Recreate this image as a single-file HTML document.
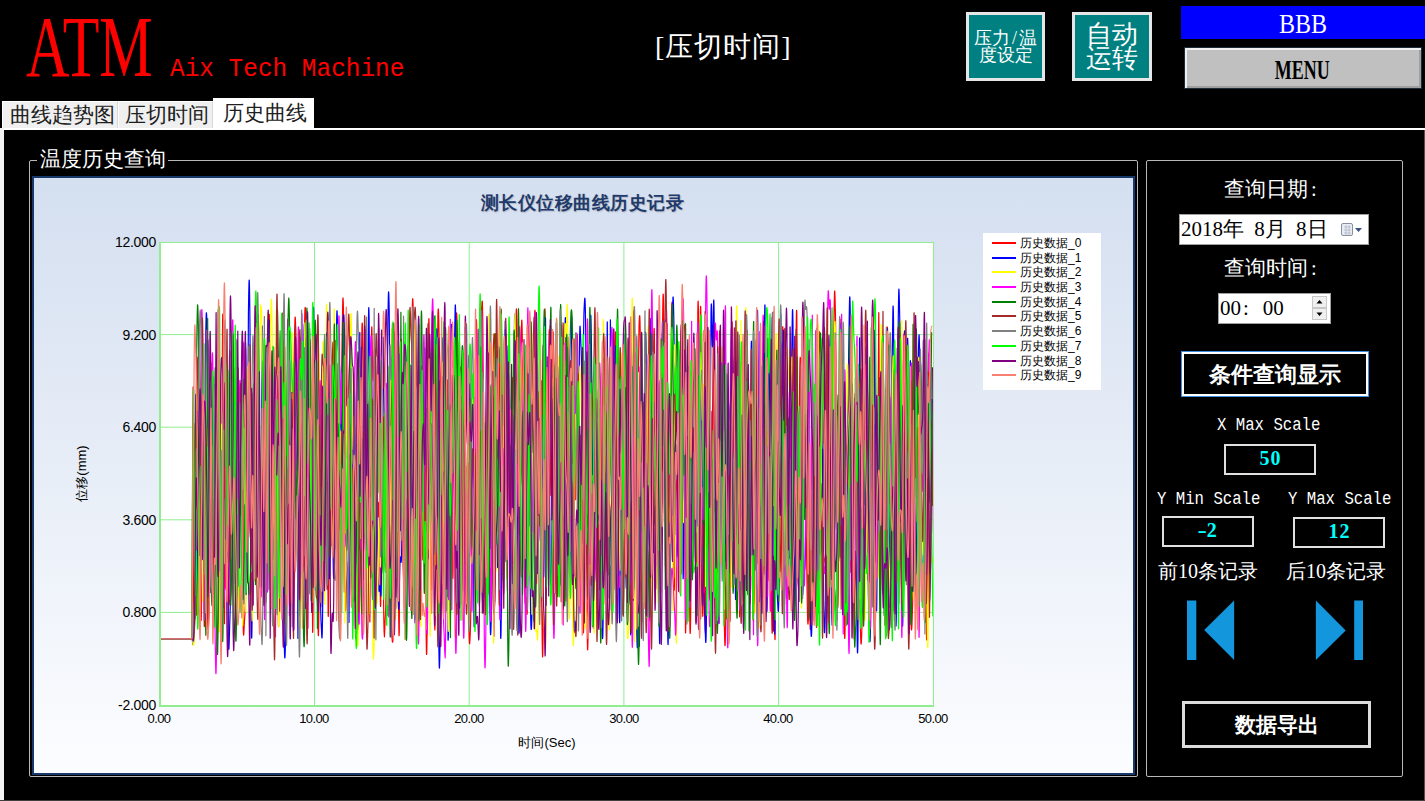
<!DOCTYPE html>
<html><head><meta charset="utf-8">
<style>
*{margin:0;padding:0;box-sizing:border-box}
html,body{width:1425px;height:801px;overflow:hidden;background:#000}
body{position:relative;font-family:"Liberation Serif",serif;color:#fff}
.a{position:absolute;white-space:nowrap;line-height:1}
.tab{position:absolute;background:#f0f0f0;border-top:1px solid #fff;border-left:1px solid #fff;border-right:1px solid #d8d8d8;color:#202020;font-size:21px;line-height:26px}
.gb{position:absolute;border:1px solid #b8b8b8;border-radius:2px}
.tbtn{position:absolute;background:#008080;border:3px solid #e6e6e6;color:#fff;text-align:center}
.ylab,.xlab{position:absolute;font-family:"Liberation Sans",sans-serif;font-size:13px;color:#000;line-height:1;white-space:nowrap}
.ylab{text-align:right;width:60px;font-size:14px!important;letter-spacing:-0.3px}
.xlab{text-align:center;width:60px;letter-spacing:-0.6px}
.lg{position:absolute;left:992px;width:24px;height:2px}
.lt{position:absolute;left:1020px;font-family:"Liberation Sans",sans-serif;font-size:12px;color:#000;line-height:1;white-space:nowrap}
.mono{font-family:"Liberation Mono",monospace}
.vbox{position:absolute;border:2px solid #e0e0e0;color:#00ffff;font-weight:bold;text-align:center;font-size:20px;font-family:"Liberation Serif",serif}
</style></head><body>

<!-- header -->
<div class="a" id="atm" style="left:26px;top:3px;font-size:87px;color:#f00;transform-origin:0 0;transform:scaleX(0.69)">ATM</div>
<div class="a mono" id="aix" style="left:170px;top:56px;font-size:26.4px;color:#f00;transform-origin:0 0;transform:scaleX(0.925)">Aix Tech Machine</div>
<div class="a" id="ttl" style="left:655px;top:33px;font-size:28px;letter-spacing:1px;color:#fff">[压切时间]</div>

<div class="tbtn" style="left:966px;top:12px;width:79px;height:69px;font-size:18px;line-height:17px;padding-top:15px;padding-left:0px">压力<span style="padding:0 2px 0 2px">/</span>温<br>度设定</div>
<div class="tbtn" style="left:1072px;top:12px;width:80px;height:69px;font-size:26px;line-height:24px;padding-top:8px">自动<br>运转</div>

<div class="a" style="left:1181px;top:6px;width:244px;height:33px;background:#0000ff"></div>
<div class="a" id="bbb" style="left:1181px;top:11px;width:244px;text-align:center;font-size:27px;color:#fff"><span style="display:inline-block;transform:scaleX(0.89)">BBB</span></div>
<div class="a" style="left:1184px;top:47px;width:238px;height:42px;background:#c0c0c0;border:1px solid #1c2c38;box-shadow:inset 2px 2px 0 #f0f0f0,inset -2px -2px 0 #a0a0a0"></div>
<div class="a" id="menu" style="left:1183px;top:57px;width:238px;text-align:center;font-size:27px;font-weight:bold;color:#000"><span style="display:inline-block;transform:scaleX(0.665)">MENU</span></div>

<!-- tabs -->
<div class="a" style="left:0;top:128px;width:1425px;height:2px;background:#fff"></div>
<div class="a" style="left:0;top:128px;width:4px;height:673px;background:#f4f4f4"></div>
<div class="a" style="left:1424px;top:130px;width:1px;height:671px;background:#505050"></div>
<div class="a" style="left:0;top:800px;width:1425px;height:1px;background:#404040"></div>
<div class="tab" style="left:2px;top:101px;width:116px;height:27px;padding-left:7px">曲线趋势图</div>
<div class="tab" style="left:118px;top:101px;width:95px;height:27px;padding-left:6px">压切时间</div>
<div class="tab" style="left:213px;top:98px;width:101px;height:32px;background:#fff;border-right:1px solid #fff;padding-left:9px;line-height:28px">历史曲线</div>

<!-- left group box -->
<div class="gb" style="left:29px;top:160px;width:1109px;height:617px"></div>
<div class="a" style="left:37px;top:148px;width:131px;height:24px;background:#000"></div>
<div class="a" id="gbt" style="left:40px;top:149px;font-size:21px;color:#fff">温度历史查询</div>

<!-- chart -->
<div class="a" style="left:32px;top:176px;width:1103px;height:599px;border:2px solid #17386b;background:linear-gradient(#d4dff0,#fcfdff)"></div>
<div class="a" id="ctitle" style="left:33px;top:194px;width:1099px;text-align:center;font-size:18px;letter-spacing:0.5px;font-weight:bold;color:#1f3b6b;font-family:'Liberation Sans',sans-serif;text-shadow:1px 1px 1px #b8bcc8">测长仪位移曲线历史记录</div>
<svg class="a" style="left:0;top:0" width="1425" height="801">
<rect x="159.5" y="242.5" width="773.5" height="463" fill="#fff"/>
<g stroke="#90ee90" stroke-width="1" fill="none">
<path d="M314.5 242V705M469.2 242V705M623.9 242V705M778.6 242V705M159.5 334.6H933M159.5 427.2H933M159.5 519.8H933M159.5 612.4H933"/>
</g>
<g fill="none" stroke-width="1.2" stroke-linejoin="round">
<path d="M159.5 638.9L192.0 638.9C192.3 628.9 192.9 632.0 193.5 589.0C194.1 545.9 194.4 418.4 195.1 423.6C195.7 428.8 196.0 607.3 196.6 614.9C197.2 622.5 197.5 481.0 198.2 461.6C198.8 442.2 199.1 486.3 199.7 517.9C200.3 549.5 200.6 629.1 201.2 619.7C201.9 610.3 202.2 469.7 202.8 471.0C203.4 472.4 203.7 621.6 204.3 626.5C205.0 631.3 205.3 497.6 205.9 495.4C206.5 493.3 206.8 593.1 207.4 615.8C208.1 638.4 208.4 632.3 209.0 608.9C209.6 585.4 209.9 547.2 210.5 498.5C211.1 449.8 211.5 345.5 212.1 365.4C212.7 385.3 213.0 558.0 213.6 597.9C214.2 637.8 214.6 598.3 215.2 565.0C215.8 531.7 216.1 479.3 216.7 431.4C217.3 383.4 217.6 322.1 218.3 325.4C218.9 328.8 219.2 411.6 219.8 448.0C220.4 484.4 220.7 534.1 221.4 507.7C222.0 481.3 222.3 292.8 222.9 316.0C223.5 339.2 223.8 615.7 224.5 623.5C225.1 631.2 225.4 371.0 226.0 354.9C226.6 338.9 226.9 495.8 227.5 543.1C228.2 590.3 228.5 579.8 229.1 591.1C229.7 602.5 230.0 610.8 230.6 599.9C231.3 589.0 231.6 583.0 232.2 536.8C232.8 490.6 233.1 360.5 233.7 369.0C234.4 377.4 234.7 563.6 235.3 579.1C235.9 594.6 236.2 476.8 236.8 446.5C237.4 416.2 237.8 413.7 238.4 427.6C239.0 441.4 239.3 509.7 239.9 515.7C240.5 521.7 240.9 437.2 241.5 457.7C242.1 478.2 242.4 585.8 243.0 618.1C243.6 650.4 243.9 628.6 244.6 619.1C245.2 609.7 245.5 611.8 246.1 570.7C246.7 529.7 247.0 428.5 247.7 413.8C248.3 399.2 248.6 473.2 249.2 497.4C249.8 521.7 250.1 545.4 250.8 535.0C251.4 524.5 251.7 454.4 252.3 445.2C252.9 436.0 253.2 470.1 253.8 489.0C254.5 507.9 254.8 562.3 255.4 539.7C256.0 517.2 256.3 402.6 256.9 376.1C257.6 349.7 257.9 371.3 258.5 407.7C259.1 444.1 259.4 549.9 260.0 558.1C260.7 566.4 261.0 467.5 261.6 448.9C262.2 430.3 262.5 485.1 263.1 465.2C263.7 445.3 264.1 362.9 264.7 349.4C265.3 335.9 265.6 358.8 266.2 397.6C266.8 436.5 267.1 560.2 267.8 543.6C268.4 527.0 268.7 303.5 269.3 314.7C269.9 325.9 270.2 562.6 270.9 599.8C271.5 637.0 271.8 542.8 272.4 500.6C273.0 458.3 273.3 370.9 274.0 388.5C274.6 406.1 274.9 570.9 275.5 588.6C276.1 606.3 276.4 469.7 277.0 477.2C277.7 484.6 278.0 637.7 278.6 625.9C279.2 614.0 279.5 465.8 280.1 417.9C280.8 369.9 281.1 379.7 281.7 386.0C282.3 392.3 282.6 456.7 283.2 449.3C283.9 442.0 284.2 332.2 284.8 349.3C285.4 366.5 285.7 523.2 286.3 535.1C287.0 547.0 287.3 427.5 287.9 408.9C288.5 390.4 288.8 434.7 289.4 442.3C290.0 449.9 290.4 437.9 291.0 447.1C291.6 456.2 291.9 505.2 292.5 488.0C293.1 470.8 293.4 393.4 294.1 361.1C294.7 328.8 295.0 302.2 295.6 326.4C296.2 350.6 296.5 463.5 297.2 482.1C297.8 500.6 298.1 391.9 298.7 419.2C299.3 446.6 299.6 621.3 300.3 618.8C300.9 616.3 301.2 445.7 301.8 406.9C302.4 368.1 302.7 444.1 303.3 424.8C304.0 405.6 304.3 322.0 304.9 310.4C305.5 298.9 305.8 320.2 306.4 367.0C307.1 413.9 307.4 515.9 308.0 544.7C308.6 573.6 308.9 536.7 309.5 511.3C310.2 485.9 310.5 393.7 311.1 417.7C311.7 441.7 312.0 617.7 312.6 631.4C313.2 645.1 313.6 495.8 314.2 486.2C314.8 476.5 315.1 560.5 315.7 583.3C316.3 606.1 316.7 592.9 317.3 600.1C317.9 607.3 318.2 662.4 318.8 619.4C319.4 576.3 319.7 389.4 320.4 384.8C321.0 380.1 321.3 561.6 321.9 596.1C322.5 630.5 322.8 574.3 323.5 557.0C324.1 539.7 324.4 550.8 325.0 509.6C325.6 468.3 325.9 330.1 326.6 350.7C327.2 371.2 327.5 584.3 328.1 612.2C328.7 640.1 329.0 521.3 329.6 490.3C330.3 459.3 330.6 485.9 331.2 457.1C331.8 428.4 332.1 364.6 332.7 346.7C333.4 328.9 333.7 366.6 334.3 367.9C334.9 369.2 335.2 317.4 335.8 353.1C336.5 388.9 336.8 517.1 337.4 546.8C338.0 576.5 338.3 506.8 338.9 501.5C339.5 496.2 339.9 551.2 340.5 520.2C341.1 489.2 341.4 386.1 342.0 346.4C342.6 306.8 343.0 273.6 343.6 322.1C344.2 370.6 344.5 537.3 345.1 588.9C345.7 640.6 346.0 585.9 346.7 580.6C347.3 575.2 347.6 565.9 348.2 562.1C348.8 558.4 349.1 578.4 349.8 561.7C350.4 545.0 350.7 502.0 351.3 478.5C351.9 454.9 352.2 429.3 352.9 444.0C353.5 458.7 353.8 513.3 354.4 552.0C355.0 590.7 355.3 647.8 355.9 637.5C356.6 627.2 356.9 524.5 357.5 500.3C358.1 476.2 358.4 526.5 359.0 516.7C359.7 507.0 360.0 490.2 360.6 451.6C361.2 412.9 361.5 331.9 362.1 323.7C362.8 315.4 363.1 381.6 363.7 410.5C364.3 439.4 364.6 463.6 365.2 468.4C365.8 473.2 366.2 445.2 366.8 434.6C367.4 424.0 367.7 378.0 368.3 415.2C368.9 452.5 369.3 635.8 369.9 621.0C370.5 606.2 370.8 389.4 371.4 341.4C372.0 293.4 372.3 379.3 373.0 380.9C373.6 382.6 373.9 350.8 374.5 349.6C375.1 348.5 375.4 343.1 376.1 375.0C376.7 406.9 377.0 482.7 377.6 509.1C378.2 535.5 378.5 487.8 379.2 506.9C379.8 526.0 380.1 620.2 380.7 604.6C381.3 589.1 381.6 426.4 382.2 429.1C382.9 431.8 383.2 580.8 383.8 618.3C384.4 655.8 384.7 626.3 385.3 616.6C386.0 606.9 386.3 576.1 386.9 569.8C387.5 563.5 387.8 593.9 388.4 585.2C389.1 576.5 389.4 519.1 390.0 526.4C390.6 533.7 390.9 599.0 391.5 621.5C392.1 643.9 392.5 645.3 393.1 638.8C393.7 632.3 394.0 595.5 394.6 588.8C395.2 582.1 395.6 619.3 396.2 605.3C396.8 591.3 397.1 513.6 397.7 518.6C398.3 523.6 398.6 664.2 399.3 630.4C399.9 596.6 400.2 388.6 400.8 349.7C401.4 310.8 401.7 387.8 402.4 435.8C403.0 483.8 403.3 565.8 403.9 589.7C404.5 613.7 404.8 568.6 405.5 555.4C406.1 542.3 406.4 531.4 407.0 524.0C407.6 516.6 407.9 503.6 408.5 518.4C409.2 533.3 409.5 630.3 410.1 598.2C410.7 566.2 411.0 415.7 411.6 358.1C412.3 300.5 412.6 285.1 413.2 310.4C413.8 335.8 414.1 451.1 414.7 484.7C415.4 518.4 415.7 453.7 416.3 478.8C416.9 504.0 417.2 585.2 417.8 610.5C418.4 635.7 418.8 622.0 419.4 605.1C420.0 588.1 420.3 536.3 420.9 525.5C421.5 514.8 421.8 583.5 422.5 551.3C423.1 519.1 423.4 357.9 424.0 364.7C424.6 371.6 424.9 532.2 425.6 585.5C426.2 638.8 426.5 683.4 427.1 631.2C427.7 579.0 428.0 357.8 428.7 324.4C429.3 290.9 429.6 411.0 430.2 464.2C430.8 517.4 431.1 591.4 431.7 590.4C432.4 589.4 432.7 451.3 433.3 459.2C433.9 467.1 434.2 628.9 434.8 629.9C435.5 630.9 435.8 527.1 436.4 464.2C437.0 401.3 437.3 337.4 437.9 315.3C438.6 293.1 438.9 334.7 439.5 353.3C440.1 372.0 440.4 368.8 441.0 408.6C441.7 448.4 442.0 530.7 442.6 552.5C443.2 574.3 443.5 511.4 444.1 517.6C444.7 523.8 445.1 610.4 445.7 583.6C446.3 556.8 446.6 407.7 447.2 383.6C447.8 359.4 448.1 463.2 448.8 462.7C449.4 462.3 449.7 367.8 450.3 381.2C450.9 394.6 451.2 493.1 451.9 529.8C452.5 566.6 452.8 597.0 453.4 565.1C454.0 533.2 454.3 420.9 455.0 370.5C455.6 320.1 455.9 315.8 456.5 313.1C457.1 310.4 457.4 345.1 458.0 356.9C458.7 368.7 459.0 370.0 459.6 372.3C460.2 374.5 460.5 363.8 461.1 368.2C461.8 372.6 462.1 355.0 462.7 394.2C463.3 433.3 463.6 549.2 464.2 563.9C464.9 578.6 465.2 476.2 465.8 467.7C466.4 459.1 466.7 488.9 467.3 521.3C467.9 553.6 468.3 607.6 468.9 629.3C469.5 650.9 469.8 646.2 470.4 629.6C471.0 613.1 471.4 561.7 472.0 546.4C472.6 531.2 472.9 580.5 473.5 553.1C474.1 525.8 474.4 456.0 475.1 409.8C475.7 363.7 476.0 306.3 476.6 322.5C477.2 338.7 477.5 489.7 478.2 491.0C478.8 492.2 479.1 364.7 479.7 329.0C480.3 293.2 480.6 313.3 481.3 312.1C481.9 310.9 482.2 281.8 482.8 323.0C483.4 364.3 483.7 469.7 484.3 518.3C485.0 566.9 485.3 556.8 485.9 565.9C486.5 575.1 486.8 562.3 487.4 563.8C488.1 565.4 488.4 572.3 489.0 573.8C489.6 575.3 489.9 599.5 490.5 571.3C491.2 543.0 491.5 478.5 492.1 432.5C492.7 386.4 493.0 355.4 493.6 341.1C494.2 326.8 494.6 333.1 495.2 360.9C495.8 388.7 496.1 467.9 496.7 480.3C497.3 492.7 497.7 444.1 498.3 422.9C498.9 401.7 499.2 336.8 499.8 374.4C500.4 412.0 500.7 601.6 501.4 610.8C502.0 620.0 502.3 475.0 502.9 420.4C503.5 365.8 503.8 346.0 504.5 338.0C505.1 329.9 505.4 369.6 506.0 380.1C506.6 390.7 506.9 370.6 507.6 390.8C508.2 410.9 508.5 443.0 509.1 480.8C509.7 518.6 510.0 600.4 510.6 579.8C511.3 559.2 511.6 388.1 512.2 377.9C512.8 367.7 513.1 529.7 513.7 528.9C514.4 528.1 514.7 416.3 515.3 374.0C515.9 331.7 516.2 290.7 516.8 317.5C517.5 344.3 517.8 470.2 518.4 507.9C519.0 545.7 519.3 542.6 519.9 506.1C520.5 469.7 520.9 347.1 521.5 325.7C522.1 304.3 522.4 347.8 523.0 399.2C523.6 450.5 524.0 543.1 524.6 582.6C525.2 622.2 525.5 595.6 526.1 596.8C526.7 598.1 527.0 640.3 527.7 588.9C528.3 537.4 528.6 383.0 529.2 339.6C529.8 296.3 530.1 322.0 530.8 372.1C531.4 422.3 531.7 591.8 532.3 590.5C532.9 589.2 533.2 420.7 533.9 365.5C534.5 310.3 534.8 303.5 535.4 314.7C536.0 325.9 536.3 379.8 536.9 421.5C537.6 463.2 537.9 515.8 538.5 523.0C539.1 530.2 539.4 442.9 540.0 457.4C540.7 471.9 541.0 560.2 541.6 595.5C542.2 630.9 542.5 689.7 543.1 634.1C543.8 578.6 544.1 359.8 544.7 317.8C545.3 275.7 545.6 394.6 546.2 424.0C546.8 453.4 547.2 483.5 547.8 464.7C548.4 445.9 548.7 324.0 549.3 330.1C549.9 336.2 550.3 491.3 550.9 495.4C551.5 499.5 551.8 376.5 552.4 350.6C553.0 324.6 553.3 321.9 554.0 365.6C554.6 409.3 554.9 531.1 555.5 569.1C556.1 607.0 556.4 561.0 557.1 555.6C557.7 550.2 558.0 541.2 558.6 542.0C559.2 542.7 559.5 578.7 560.2 559.3C560.8 539.9 561.1 446.2 561.7 444.9C562.3 443.7 562.6 542.0 563.2 553.1C563.9 564.2 564.2 491.8 564.8 500.3C565.4 508.8 565.7 628.0 566.3 595.5C567.0 563.0 567.3 352.6 567.9 337.9C568.5 323.2 568.8 492.0 569.4 521.9C570.1 551.7 570.4 502.5 571.0 487.3C571.6 472.2 571.9 475.4 572.5 445.9C573.1 416.4 573.5 329.0 574.1 339.8C574.7 350.6 575.0 500.6 575.6 499.7C576.2 498.9 576.5 340.7 577.2 335.4C577.8 330.0 578.1 447.4 578.7 473.0C579.3 498.5 579.6 464.4 580.3 463.0C580.9 461.5 581.2 431.8 581.8 465.7C582.4 499.7 582.7 627.2 583.4 632.7C584.0 638.2 584.3 504.2 584.9 493.3C585.5 482.4 585.8 549.4 586.4 578.3C587.1 607.2 587.4 678.3 588.0 637.6C588.6 596.8 588.9 385.7 589.5 374.6C590.2 363.4 590.5 560.3 591.1 581.9C591.7 603.4 592.0 518.8 592.6 482.3C593.3 445.7 593.6 404.5 594.2 399.0C594.8 393.5 595.1 428.4 595.7 454.8C596.4 481.2 596.7 528.5 597.3 531.1C597.9 533.6 598.2 482.6 598.8 467.4C599.4 452.3 599.8 472.8 600.4 455.2C601.0 437.6 601.3 349.8 601.9 379.5C602.5 409.2 602.8 589.0 603.5 603.8C604.1 618.6 604.4 463.0 605.0 453.6C605.6 444.1 605.9 537.9 606.6 556.7C607.2 575.4 607.5 581.9 608.1 547.3C608.7 512.6 609.0 398.7 609.7 383.5C610.3 368.2 610.6 457.0 611.2 470.9C611.8 484.9 612.1 469.8 612.7 453.1C613.4 436.4 613.7 410.7 614.3 387.5C614.9 364.3 615.2 316.1 615.8 337.1C616.5 358.0 616.8 472.4 617.4 492.3C618.0 512.1 618.3 440.4 618.9 436.3C619.6 432.2 619.9 465.0 620.5 471.7C621.1 478.3 621.4 481.9 622.0 469.5C622.6 457.1 623.0 405.8 623.6 409.8C624.2 413.7 624.5 478.7 625.1 489.3C625.7 499.8 626.1 464.2 626.7 462.5C627.3 460.8 627.6 507.8 628.2 480.8C628.8 453.8 629.1 342.1 629.8 327.5C630.4 312.9 630.7 403.3 631.3 407.6C631.9 411.9 632.2 365.0 632.9 349.0C633.5 332.9 633.8 286.5 634.4 327.3C635.0 368.1 635.3 527.7 636.0 553.0C636.6 578.3 636.9 499.0 637.5 453.8C638.1 408.6 638.4 345.5 639.0 326.9C639.7 308.4 640.0 307.7 640.6 361.1C641.2 414.4 641.5 546.0 642.1 593.5C642.8 641.0 643.1 618.8 643.7 598.6C644.3 578.5 644.6 489.4 645.2 492.6C645.9 495.9 646.2 601.5 646.8 614.9C647.4 628.2 647.7 559.3 648.3 559.3C648.9 559.2 649.3 643.0 649.9 614.7C650.5 586.3 650.8 464.5 651.4 417.5C652.0 370.4 652.4 394.6 653.0 379.6C653.6 364.5 653.9 300.6 654.5 342.2C655.1 383.8 655.4 575.8 656.1 587.8C656.7 599.7 657.0 435.5 657.6 402.0C658.2 368.6 658.5 382.6 659.2 420.5C659.8 458.4 660.1 606.3 660.7 591.6C661.3 576.9 661.6 401.4 662.3 346.9C662.9 292.4 663.2 275.0 663.8 318.9C664.4 362.7 664.7 565.2 665.3 566.2C666.0 567.2 666.3 335.7 666.9 323.9C667.5 312.0 667.8 476.4 668.4 507.1C669.1 537.9 669.4 516.8 670.0 477.7C670.6 438.6 670.9 334.3 671.5 311.5C672.2 288.7 672.5 308.8 673.1 363.6C673.7 418.3 674.0 558.9 674.6 585.5C675.2 612.0 675.6 519.6 676.2 496.1C676.8 472.7 677.1 462.2 677.7 468.3C678.3 474.5 678.7 505.6 679.3 526.7C679.9 547.9 680.2 572.8 680.8 574.1C681.4 575.5 681.7 568.3 682.4 533.5C683.0 498.7 683.3 380.3 683.9 400.0C684.5 419.8 684.8 621.3 685.5 632.4C686.1 643.5 686.4 483.5 687.0 455.6C687.6 427.8 687.9 457.7 688.6 493.2C689.2 528.6 689.5 625.7 690.1 632.9C690.7 640.1 691.0 569.3 691.6 529.2C692.3 489.2 692.6 444.5 693.2 432.5C693.8 420.6 694.1 432.4 694.7 469.4C695.4 506.5 695.7 648.9 696.3 617.6C696.9 586.3 697.2 361.0 697.8 313.1C698.5 265.2 698.8 377.2 699.4 378.1C700.0 379.0 700.3 272.3 700.9 317.5C701.5 362.7 701.9 557.5 702.5 604.2C703.1 650.9 703.4 546.7 704.0 551.0C704.6 555.3 705.0 659.7 705.6 625.8C706.2 591.8 706.5 396.5 707.1 381.2C707.7 366.0 708.0 506.5 708.7 549.4C709.3 592.4 709.6 606.1 710.2 596.0C710.8 586.0 711.1 550.9 711.8 499.2C712.4 447.5 712.7 363.7 713.3 337.4C713.9 311.2 714.2 324.8 714.9 368.0C715.5 411.2 715.8 509.0 716.4 553.3C717.0 597.6 717.3 633.2 717.9 589.5C718.6 545.8 718.9 362.7 719.5 334.9C720.1 307.0 720.4 435.7 721.0 450.2C721.7 464.6 722.0 375.4 722.6 407.2C723.2 439.0 723.5 566.7 724.1 609.3C724.8 651.8 725.1 659.4 725.7 619.8C726.3 580.2 726.6 435.6 727.2 411.3C727.8 386.9 728.2 457.5 728.8 498.2C729.4 538.9 729.7 648.8 730.3 614.9C730.9 581.0 731.2 365.7 731.9 328.5C732.5 291.4 732.8 420.0 733.4 429.0C734.0 438.1 734.3 337.3 735.0 373.7C735.6 410.2 735.9 614.8 736.5 611.2C737.1 607.6 737.4 354.6 738.1 355.7C738.7 356.8 739.0 617.3 739.6 616.8C740.2 616.4 740.5 379.1 741.1 353.5C741.8 327.9 742.1 454.2 742.7 488.8C743.3 523.4 743.6 533.3 744.2 526.7C744.9 520.1 745.2 494.8 745.8 456.0C746.4 417.1 746.7 313.5 747.3 332.4C748.0 351.3 748.3 497.5 748.9 550.3C749.5 603.0 749.8 613.3 750.4 596.1C751.1 579.0 751.4 471.8 752.0 464.6C752.6 457.4 752.9 532.4 753.5 560.0C754.1 587.6 754.5 597.6 755.1 602.7C755.7 607.8 756.0 581.6 756.6 585.5C757.2 589.4 757.5 624.9 758.2 622.2C758.8 619.5 759.1 589.4 759.7 572.1C760.3 554.8 760.6 542.5 761.3 535.7C761.9 528.8 762.2 567.6 762.8 538.0C763.4 508.4 763.7 386.7 764.4 387.7C765.0 388.7 765.3 525.8 765.9 543.0C766.5 560.1 766.8 466.1 767.4 473.5C768.1 480.9 768.4 569.9 769.0 580.0C769.6 590.1 769.9 513.5 770.5 524.1C771.2 534.7 771.5 626.5 772.1 632.9C772.7 639.2 773.0 555.8 773.6 556.0C774.3 556.2 774.6 665.7 775.2 633.8C775.8 601.9 776.1 431.8 776.7 396.4C777.3 361.0 777.7 420.7 778.3 456.6C778.9 492.6 779.2 571.2 779.8 576.2C780.4 581.2 780.8 531.1 781.4 481.8C782.0 432.6 782.3 305.4 782.9 329.8C783.5 354.1 783.8 596.1 784.5 603.7C785.1 611.4 785.4 389.6 786.0 368.0C786.6 346.5 786.9 474.5 787.6 495.9C788.2 517.4 788.5 501.8 789.1 475.2C789.7 448.5 790.0 356.1 790.7 362.8C791.3 369.6 791.6 487.2 792.2 508.9C792.8 530.5 793.1 490.8 793.7 471.3C794.4 451.8 794.7 442.9 795.3 411.4C795.9 379.9 796.2 291.1 796.8 314.0C797.5 336.8 797.8 515.6 798.4 525.5C799.0 535.5 799.3 387.7 799.9 363.6C800.6 339.5 800.9 392.1 801.5 405.1C802.1 418.1 802.4 408.6 803.0 428.5C803.6 448.5 804.0 485.9 804.6 505.0C805.2 524.1 805.5 500.7 806.1 523.9C806.7 547.1 807.1 606.5 807.7 620.9C808.3 635.3 808.6 597.0 809.2 595.9C809.8 594.8 810.1 655.9 810.8 615.5C811.4 575.1 811.7 406.1 812.3 393.8C812.9 381.6 813.2 516.1 813.9 554.3C814.5 592.5 814.8 573.6 815.4 584.9C816.0 596.2 816.3 655.8 817.0 610.9C817.6 566.1 817.9 412.6 818.5 360.6C819.1 308.6 819.4 339.7 820.0 351.0C820.7 362.3 821.0 378.2 821.6 417.1C822.2 456.0 822.5 517.3 823.1 545.6C823.8 573.9 824.1 559.5 824.7 558.8C825.3 558.0 825.6 556.3 826.2 541.9C826.9 527.6 827.2 477.9 827.8 486.9C828.4 495.9 828.7 585.9 829.3 586.8C829.9 587.7 830.3 498.4 830.9 491.4C831.5 484.4 831.8 585.9 832.4 551.8C833.0 517.7 833.4 367.7 834.0 320.8C834.6 273.9 834.9 289.8 835.5 317.2C836.1 344.6 836.4 409.8 837.1 457.9C837.7 506.1 838.0 585.7 838.6 558.0C839.2 530.3 839.5 323.8 840.2 319.5C840.8 315.2 841.1 496.2 841.7 536.5C842.3 576.8 842.6 500.5 843.3 520.9C843.9 541.3 844.2 640.2 844.8 638.5C845.4 636.8 845.7 544.0 846.3 512.6C847.0 481.3 847.3 489.9 847.9 481.9C848.5 473.9 848.8 454.5 849.4 472.6C850.1 490.7 850.4 572.5 851.0 572.4C851.6 572.3 851.9 459.0 852.5 471.9C853.2 484.9 853.5 621.3 854.1 637.2C854.7 653.1 855.0 557.1 855.6 551.5C856.2 545.9 856.6 618.1 857.2 609.2C857.8 600.2 858.1 503.6 858.7 506.7C859.3 509.9 859.7 600.1 860.3 625.1C860.9 650.0 861.2 648.8 861.8 631.4C862.4 614.1 862.7 552.1 863.4 538.2C864.0 524.3 864.3 580.5 864.9 561.9C865.5 543.3 865.8 464.8 866.5 445.2C867.1 425.6 867.4 474.8 868.0 463.8C868.6 452.9 868.9 399.1 869.6 390.6C870.2 382.2 870.5 419.1 871.1 421.4C871.7 423.7 872.0 416.7 872.6 402.1C873.3 387.4 873.6 326.5 874.2 348.1C874.8 369.7 875.1 473.5 875.7 510.0C876.4 546.6 876.7 570.4 877.3 531.0C877.9 491.6 878.2 301.5 878.8 313.2C879.5 324.9 879.8 572.2 880.4 589.4C881.0 606.7 881.3 432.0 881.9 399.4C882.5 366.7 882.9 381.1 883.5 426.1C884.1 471.1 884.4 637.1 885.0 624.4C885.6 611.7 885.9 418.7 886.6 362.6C887.2 306.5 887.5 330.1 888.1 343.9C888.7 357.6 889.0 420.9 889.7 431.4C890.3 441.8 890.6 408.4 891.2 396.2C891.8 383.9 892.1 330.9 892.8 370.2C893.4 409.6 893.7 573.7 894.3 592.8C894.9 611.9 895.2 489.8 895.8 465.6C896.5 441.5 896.8 492.6 897.4 472.1C898.0 451.5 898.3 382.6 898.9 362.7C899.6 342.9 899.9 372.2 900.5 372.7C901.1 373.3 901.4 351.0 902.0 365.6C902.7 380.1 903.0 450.1 903.6 445.7C904.2 441.3 904.5 350.1 905.1 343.6C905.8 337.0 906.1 399.8 906.7 413.0C907.3 426.2 907.6 379.6 908.2 409.6C908.8 439.5 909.2 519.0 909.8 562.8C910.4 606.6 910.7 622.1 911.3 628.6C911.9 635.0 912.2 616.6 912.9 594.8C913.5 573.0 913.8 517.7 914.4 519.6C915.0 521.4 915.3 635.6 916.0 604.2C916.6 572.7 916.9 392.4 917.5 362.4C918.1 332.4 918.4 440.4 919.1 454.1C919.7 467.9 920.0 435.7 920.6 431.2C921.2 426.8 921.5 435.3 922.1 431.8C922.8 428.3 923.1 404.7 923.7 413.8C924.3 422.8 924.6 432.2 925.2 477.0C925.9 521.8 926.2 658.2 926.8 637.8C927.4 617.4 927.7 424.3 928.3 375.0C929.0 325.8 929.3 371.9 929.9 391.4C930.5 410.9 930.8 458.4 931.4 472.5C932.0 486.6 932.7 464.0 933.0 461.9" stroke="#ff0000"/>
<path d="M159.5 638.9L192.0 638.9C192.4 634.5 193.5 665.7 194.3 617.0C195.1 568.3 195.2 407.5 195.8 395.2C196.5 382.9 196.8 511.6 197.4 555.5C198.0 599.3 198.3 615.1 198.9 614.2C199.6 613.4 199.9 594.3 200.5 551.0C201.1 507.7 201.4 393.7 202.0 397.7C202.6 401.6 203.0 571.7 203.6 571.0C204.2 570.3 204.5 445.1 205.1 394.2C205.7 343.2 206.0 299.9 206.7 316.2C207.3 332.4 207.6 436.3 208.2 475.5C208.8 514.7 209.1 511.4 209.8 512.3C210.4 513.3 210.7 500.4 211.3 480.4C211.9 460.5 212.2 431.8 212.9 412.7C213.5 393.7 213.8 380.8 214.4 385.2C215.0 389.6 215.3 426.6 215.9 434.8C216.6 443.0 216.9 390.6 217.5 426.3C218.1 462.0 218.4 580.5 219.0 613.2C219.7 646.0 220.0 601.8 220.6 590.1C221.2 578.4 221.5 594.3 222.1 554.9C222.8 515.5 223.1 396.4 223.7 393.1C224.3 389.7 224.6 526.6 225.2 538.2C225.8 549.8 226.2 431.8 226.8 451.1C227.4 470.4 227.7 601.2 228.3 634.7C228.9 668.3 229.3 635.7 229.9 618.8C230.5 601.8 230.8 590.4 231.4 550.0C232.0 509.5 232.3 444.6 233.0 416.6C233.6 388.6 233.9 410.2 234.5 409.9C235.1 409.7 235.4 388.8 236.1 415.4C236.7 441.9 237.0 532.1 237.6 542.7C238.2 553.2 238.5 479.5 239.2 468.0C239.8 456.5 240.1 481.9 240.7 485.2C241.3 488.5 241.6 461.7 242.2 484.6C242.9 507.5 243.2 627.9 243.8 599.7C244.4 571.4 244.7 348.7 245.3 343.3C246.0 338.0 246.3 578.5 246.9 573.0C247.5 567.4 247.8 364.1 248.4 315.4C249.1 266.6 249.4 265.7 250.0 329.2C250.6 392.8 250.9 601.5 251.5 633.1C252.1 664.6 252.5 540.1 253.1 487.1C253.7 434.0 254.0 401.4 254.6 367.7C255.2 334.0 255.6 294.2 256.2 318.7C256.8 343.2 257.1 444.0 257.7 490.2C258.3 536.5 258.6 534.2 259.3 550.0C259.9 565.9 260.2 614.2 260.8 569.5C261.4 524.7 261.7 326.2 262.4 326.1C263.0 326.1 263.3 545.1 263.9 569.2C264.5 593.3 264.8 442.0 265.5 446.6C266.1 451.1 266.4 588.2 267.0 592.0C267.6 595.8 267.9 519.2 268.5 465.5C269.2 411.9 269.5 297.9 270.1 323.8C270.7 349.7 271.0 586.2 271.6 595.0C272.3 603.8 272.6 392.5 273.2 367.6C273.8 342.7 274.1 475.0 274.7 470.6C275.4 466.2 275.7 358.4 276.3 345.6C276.9 332.7 277.2 362.9 277.8 406.3C278.4 449.6 278.8 575.2 279.4 562.3C280.0 549.5 280.3 358.8 280.9 342.0C281.5 325.1 281.9 420.3 282.5 478.1C283.1 535.8 283.4 598.7 284.0 630.6C284.6 662.6 284.9 668.5 285.6 637.7C286.2 606.8 286.5 505.8 287.1 476.2C287.7 446.7 288.0 477.2 288.7 489.8C289.3 502.3 289.6 518.5 290.2 539.0C290.8 559.5 291.1 595.1 291.8 592.3C292.4 589.5 292.7 536.7 293.3 525.1C293.9 513.5 294.2 567.2 294.8 534.3C295.5 501.5 295.8 340.2 296.4 361.0C297.0 381.8 297.3 632.4 297.9 638.3C298.6 644.2 298.9 446.0 299.5 390.6C300.1 335.2 300.4 319.6 301.0 361.4C301.7 403.1 302.0 604.9 302.6 599.2C303.2 593.4 303.5 371.7 304.1 332.5C304.7 293.3 305.1 401.4 305.7 403.1C306.3 404.7 306.6 312.7 307.2 340.7C307.8 368.7 308.1 508.0 308.8 543.0C309.4 578.0 309.7 522.6 310.3 515.8C310.9 508.9 311.2 550.4 311.9 508.9C312.5 467.5 312.8 321.5 313.4 308.5C314.0 295.6 314.3 401.8 315.0 444.0C315.6 486.2 315.9 508.9 316.5 519.6C317.1 530.2 317.4 491.6 318.1 497.3C318.7 503.0 319.0 522.7 319.6 547.9C320.2 573.0 320.5 611.4 321.1 622.9C321.8 634.4 322.1 657.2 322.7 605.2C323.3 553.2 323.6 375.0 324.2 362.8C324.9 350.7 325.2 551.1 325.8 544.4C326.4 537.7 326.7 327.0 327.3 329.4C328.0 331.8 328.3 512.1 328.9 556.4C329.5 600.7 329.8 568.3 330.4 551.0C331.0 533.7 331.4 464.9 332.0 469.9C332.6 474.9 332.9 567.0 333.5 576.1C334.1 585.2 334.4 566.1 335.1 515.4C335.7 464.7 336.0 356.4 336.6 322.6C337.2 288.8 337.5 336.9 338.2 346.4C338.8 356.0 339.1 353.6 339.7 370.3C340.3 387.1 340.6 436.9 341.3 430.2C341.9 423.5 342.2 357.3 342.8 336.8C343.4 316.3 343.7 303.7 344.3 327.8C345.0 351.8 345.3 442.6 345.9 457.2C346.5 471.8 346.8 367.8 347.4 400.9C348.1 433.9 348.4 623.3 349.0 622.5C349.6 621.6 349.9 423.2 350.5 396.7C351.2 370.1 351.5 491.1 352.1 489.8C352.7 488.4 353.0 402.7 353.6 389.9C354.3 377.1 354.6 394.9 355.2 425.7C355.8 456.6 356.1 504.8 356.7 544.2C357.3 583.6 357.7 665.0 358.3 622.7C358.9 580.3 359.2 337.5 359.8 332.4C360.4 327.2 360.7 566.7 361.4 596.8C362.0 626.8 362.3 497.0 362.9 482.7C363.5 468.4 363.8 513.7 364.5 525.2C365.1 536.7 365.4 566.5 366.0 540.4C366.6 514.2 366.9 439.3 367.6 394.4C368.2 349.6 368.5 284.3 369.1 316.0C369.7 347.7 370.0 531.6 370.6 552.8C371.3 574.0 371.6 424.6 372.2 421.9C372.8 419.2 373.1 532.8 373.7 539.4C374.4 545.9 374.7 460.7 375.3 454.5C375.9 448.4 376.2 482.6 376.8 508.4C377.5 534.2 377.8 568.1 378.4 583.5C379.0 598.9 379.3 588.1 379.9 585.4C380.5 582.7 380.9 619.3 381.5 570.1C382.1 520.9 382.4 358.4 383.0 339.2C383.6 320.1 384.0 429.1 384.6 474.5C385.2 519.8 385.5 593.2 386.1 566.1C386.7 539.0 387.0 390.5 387.7 339.1C388.3 287.8 388.6 279.1 389.2 309.3C389.8 339.5 390.1 433.4 390.8 490.0C391.4 546.7 391.7 575.7 392.3 592.7C392.9 609.7 393.2 572.0 393.9 575.2C394.5 578.5 394.8 618.7 395.4 608.9C396.0 599.0 396.3 525.8 396.9 525.8C397.6 525.7 397.9 601.9 398.5 608.7C399.1 615.5 399.4 570.8 400.0 559.8C400.7 548.7 401.0 575.3 401.6 553.4C402.2 531.6 402.5 492.1 403.1 450.5C403.8 408.9 404.1 357.3 404.7 345.4C405.3 333.5 405.6 359.6 406.2 390.9C406.8 422.3 407.2 480.1 407.8 502.3C408.4 524.6 408.7 509.3 409.3 502.0C409.9 494.6 410.3 463.1 410.9 465.5C411.5 468.0 411.8 501.9 412.4 514.2C413.0 526.5 413.3 506.2 414.0 527.0C414.6 547.8 414.9 614.3 415.5 618.3C416.1 622.3 416.4 607.0 417.1 547.1C417.7 487.2 418.0 308.8 418.6 318.8C419.2 328.9 419.5 566.5 420.2 597.2C420.8 627.9 421.1 505.7 421.7 472.4C422.3 439.1 422.6 454.4 423.2 430.6C423.9 406.9 424.2 326.1 424.8 353.5C425.4 380.9 425.7 528.3 426.3 567.4C427.0 606.6 427.3 551.4 427.9 549.2C428.5 547.1 428.8 565.2 429.4 556.7C430.1 548.2 430.4 519.7 431.0 506.7C431.6 493.6 431.9 528.1 432.5 491.4C433.1 454.7 433.5 350.0 434.1 323.4C434.7 296.7 435.0 352.8 435.6 358.2C436.2 363.5 436.6 295.5 437.2 350.2C437.8 404.9 438.1 576.0 438.7 631.6C439.3 687.2 439.6 673.7 440.3 628.2C440.9 582.7 441.2 461.3 441.8 404.2C442.4 347.1 442.7 327.0 443.4 342.6C444.0 358.3 444.3 461.9 444.9 482.3C445.5 502.7 445.8 413.4 446.5 444.7C447.1 476.0 447.4 625.9 448.0 638.8C448.6 651.7 448.9 570.7 449.5 509.4C450.2 448.1 450.5 361.1 451.1 332.3C451.7 303.6 452.0 361.1 452.6 365.8C453.3 370.5 453.6 365.6 454.2 355.9C454.8 346.2 455.1 277.2 455.7 317.3C456.4 357.5 456.7 499.6 457.3 556.7C457.9 613.8 458.2 596.6 458.8 602.8C459.4 609.0 459.8 615.1 460.4 587.8C461.0 560.5 461.3 501.0 461.9 466.1C462.5 431.2 462.8 441.0 463.5 413.3C464.1 385.6 464.4 330.1 465.0 327.5C465.6 324.9 465.9 380.7 466.6 400.2C467.2 419.6 467.5 427.6 468.1 424.8C468.7 421.9 469.0 373.4 469.7 385.9C470.3 398.5 470.6 473.5 471.2 487.6C471.8 501.7 472.1 428.8 472.8 456.5C473.4 484.1 473.7 641.0 474.3 625.8C474.9 610.5 475.2 392.9 475.8 380.1C476.5 367.4 476.8 571.0 477.4 561.9C478.0 552.8 478.3 361.9 478.9 334.6C479.6 307.3 479.9 384.6 480.5 425.4C481.1 466.1 481.4 504.2 482.0 538.4C482.7 572.6 483.0 593.1 483.6 596.5C484.2 600.0 484.5 589.2 485.1 555.6C485.7 522.0 486.1 458.0 486.7 428.4C487.3 398.9 487.6 373.2 488.2 407.8C488.8 442.5 489.1 560.2 489.8 601.8C490.4 643.3 490.7 642.9 491.3 615.6C491.9 588.3 492.2 499.3 492.9 465.4C493.5 431.5 493.8 437.1 494.4 446.1C495.0 455.1 495.3 486.7 496.0 510.5C496.6 534.3 496.9 579.0 497.5 564.9C498.1 550.8 498.4 426.0 499.0 440.1C499.7 454.2 500.0 615.6 500.6 635.4C501.2 655.2 501.5 568.9 502.1 539.1C502.8 509.4 503.1 530.0 503.7 486.5C504.3 443.0 504.6 333.9 505.2 321.7C505.9 309.6 506.2 420.7 506.8 425.7C507.4 430.7 507.7 335.4 508.3 346.6C509.0 357.8 509.3 438.7 509.9 481.7C510.5 524.6 510.8 546.1 511.4 561.2C512.0 576.3 512.4 605.2 513.0 557.2C513.6 509.1 513.9 351.4 514.5 321.2C515.1 290.9 515.4 362.6 516.1 405.8C516.7 449.0 517.0 492.0 517.6 537.2C518.2 582.4 518.5 644.3 519.2 631.7C519.8 619.0 520.1 517.2 520.7 474.1C521.3 430.9 521.6 410.6 522.3 415.8C522.9 421.0 523.2 472.4 523.8 500.0C524.4 527.5 524.7 570.1 525.3 553.8C526.0 537.4 526.3 462.3 526.9 418.2C527.5 374.0 527.8 303.8 528.4 332.9C529.1 362.0 529.4 504.9 530.0 563.9C530.6 622.8 530.9 634.9 531.5 627.6C532.2 620.2 532.5 552.6 533.1 527.1C533.7 501.5 534.0 522.6 534.6 499.8C535.2 477.0 535.6 398.4 536.2 413.1C536.8 427.8 537.1 580.9 537.7 573.3C538.3 565.8 538.7 411.0 539.3 375.3C539.9 339.5 540.2 375.1 540.8 394.4C541.4 413.7 541.7 436.6 542.4 471.9C543.0 507.2 543.3 601.7 543.9 571.0C544.5 540.2 544.8 325.2 545.5 318.1C546.1 311.1 546.4 525.9 547.0 535.8C547.6 545.7 547.9 362.3 548.6 367.7C549.2 373.0 549.5 522.9 550.1 562.5C550.7 602.1 551.0 600.7 551.6 565.6C552.3 530.6 552.6 392.2 553.2 387.4C553.8 382.5 554.1 554.0 554.7 541.3C555.4 528.7 555.7 337.3 556.3 324.0C556.9 310.8 557.2 424.3 557.8 474.9C558.5 525.5 558.8 558.9 559.4 576.9C560.0 594.9 560.3 580.2 560.9 565.0C561.5 549.8 561.9 530.2 562.5 500.9C563.1 471.7 563.4 454.0 564.0 418.8C564.6 383.7 565.0 290.8 565.6 325.1C566.2 359.4 566.5 553.7 567.1 590.4C567.7 627.2 568.0 513.1 568.7 508.7C569.3 504.3 569.6 606.8 570.2 568.4C570.8 530.0 571.1 312.0 571.8 316.7C572.4 321.4 572.7 530.9 573.3 591.9C573.9 652.9 574.2 616.3 574.9 621.7C575.5 627.1 575.8 641.6 576.4 619.0C577.0 596.4 577.3 564.2 577.9 508.8C578.6 453.4 578.9 374.2 579.5 341.8C580.1 309.4 580.4 335.7 581.0 346.6C581.7 357.6 582.0 404.1 582.6 396.5C583.2 389.0 583.5 322.1 584.1 309.0C584.8 295.8 585.1 286.6 585.7 330.8C586.3 375.0 586.6 480.6 587.2 530.0C587.8 579.3 588.2 617.6 588.8 577.5C589.4 537.4 589.7 366.4 590.3 329.3C590.9 292.3 591.3 332.2 591.9 392.0C592.5 451.8 592.8 622.9 593.4 628.3C594.0 633.7 594.3 442.1 595.0 419.1C595.6 396.2 595.9 494.4 596.5 513.6C597.1 532.9 597.4 512.1 598.1 515.2C598.7 518.3 599.0 515.6 599.6 529.2C600.2 542.7 600.5 561.1 601.2 582.9C601.8 604.6 602.1 645.2 602.7 637.9C603.3 630.6 603.6 569.4 604.2 546.3C604.9 523.3 605.2 567.3 605.8 522.6C606.4 477.9 606.7 307.8 607.3 322.9C608.0 337.9 608.3 598.5 608.9 597.9C609.5 597.4 609.8 325.5 610.4 320.0C611.1 314.4 611.4 530.1 612.0 570.3C612.6 610.5 612.9 561.5 613.5 520.9C614.1 480.3 614.5 397.9 615.1 367.2C615.7 336.4 616.0 341.3 616.6 367.0C617.2 392.7 617.5 444.7 618.2 495.8C618.8 547.0 619.1 625.3 619.7 622.6C620.3 619.9 620.6 503.7 621.3 482.3C621.9 460.9 622.2 545.1 622.8 515.6C623.4 486.1 623.7 322.9 624.4 334.8C625.0 346.6 625.3 538.3 625.9 575.0C626.5 611.7 626.8 565.0 627.5 518.4C628.1 471.8 628.4 320.1 629.0 342.2C629.6 364.3 629.9 596.7 630.5 628.8C631.2 661.0 631.5 554.7 632.1 503.0C632.7 451.3 633.0 393.9 633.6 370.4C634.3 346.8 634.6 334.3 635.2 385.3C635.8 436.3 636.1 577.0 636.7 625.4C637.4 673.8 637.7 628.8 638.3 627.3C638.9 625.9 639.2 676.7 639.8 618.2C640.4 559.6 640.8 347.4 641.4 334.6C642.0 321.7 642.3 542.4 642.9 553.9C643.5 565.3 643.8 434.2 644.5 391.7C645.1 349.3 645.4 314.7 646.0 341.7C646.6 368.7 646.9 485.3 647.6 526.7C648.2 568.1 648.5 589.7 649.1 548.8C649.7 507.9 650.0 344.9 650.7 322.1C651.3 299.3 651.6 388.8 652.2 434.8C652.8 480.8 653.1 558.7 653.7 552.2C654.4 545.6 654.7 405.4 655.3 401.9C655.9 398.3 656.2 505.0 656.8 534.2C657.5 563.4 657.8 527.0 658.4 547.7C659.0 568.4 659.3 669.4 659.9 637.6C660.6 605.9 660.9 449.3 661.5 389.0C662.1 328.6 662.4 327.7 663.0 335.8C663.7 343.8 664.0 431.0 664.6 429.2C665.2 427.4 665.5 286.6 666.1 326.9C666.7 367.2 667.1 583.9 667.7 630.8C668.3 677.8 668.6 591.3 669.2 561.5C669.8 531.7 670.1 529.5 670.8 481.7C671.4 433.9 671.7 354.1 672.3 322.4C672.9 290.8 673.2 285.7 673.9 323.4C674.5 361.1 674.8 464.5 675.4 511.0C676.0 557.5 676.3 558.7 677.0 555.8C677.6 553.0 677.9 512.7 678.5 496.7C679.1 480.6 679.4 508.6 680.0 475.7C680.7 442.7 681.0 311.4 681.6 331.9C682.2 352.5 682.5 570.1 683.1 578.4C683.8 586.7 684.1 410.2 684.7 373.4C685.3 336.7 685.6 396.0 686.2 394.6C686.9 393.3 687.2 369.0 687.8 366.8C688.4 364.5 688.7 369.0 689.3 383.3C689.9 397.5 690.3 408.6 690.9 438.0C691.5 467.5 691.8 511.4 692.4 530.4C693.0 549.5 693.4 535.4 694.0 533.2C694.6 530.9 694.9 549.8 695.5 519.2C696.1 488.6 696.4 361.4 697.1 380.2C697.7 398.9 698.0 574.0 698.6 612.7C699.2 651.4 699.5 618.2 700.2 573.6C700.8 529.0 701.1 393.2 701.7 389.9C702.3 386.6 702.6 511.6 703.3 557.1C703.9 602.6 704.2 603.3 704.8 617.4C705.4 631.6 705.7 659.9 706.3 627.7C707.0 595.4 707.3 475.4 707.9 456.1C708.5 436.8 708.8 559.4 709.4 531.1C710.1 502.8 710.4 351.6 711.0 314.7C711.6 277.8 711.9 347.2 712.5 346.7C713.2 346.2 713.5 271.3 714.1 312.2C714.7 353.1 715.0 491.5 715.6 551.3C716.2 611.0 716.6 599.9 717.2 611.0C717.8 622.2 718.1 634.4 718.7 607.0C719.3 579.6 719.7 514.6 720.3 474.0C720.9 433.4 721.2 400.7 721.8 404.1C722.4 407.5 722.7 459.6 723.4 491.0C724.0 522.5 724.3 559.4 724.9 561.4C725.5 563.4 725.8 526.5 726.5 501.0C727.1 475.5 727.4 450.7 728.0 433.7C728.6 416.7 728.9 424.4 729.6 415.9C730.2 407.5 730.5 402.9 731.1 391.5C731.7 380.1 732.0 353.2 732.6 358.7C733.3 364.3 733.6 371.1 734.2 419.1C734.8 467.1 735.1 610.5 735.7 598.8C736.4 587.1 736.7 372.2 737.3 360.8C737.9 349.4 738.2 523.6 738.8 541.7C739.5 559.8 739.8 456.6 740.4 451.4C741.0 446.1 741.3 526.8 741.9 515.5C742.5 504.2 742.9 383.3 743.5 394.8C744.1 406.3 744.4 540.5 745.0 573.0C745.6 605.4 746.0 560.1 746.6 557.0C747.2 554.0 747.5 551.5 748.1 557.7C748.7 563.9 749.0 630.4 749.7 588.2C750.3 545.9 750.6 374.6 751.2 346.5C751.8 318.3 752.1 410.7 752.8 447.6C753.4 484.5 753.7 518.9 754.3 530.9C754.9 543.0 755.2 551.9 755.9 507.9C756.5 463.8 756.8 318.0 757.4 310.6C758.0 303.3 758.3 420.7 758.9 471.1C759.6 521.4 759.9 582.3 760.5 562.3C761.1 542.4 761.4 399.4 762.0 371.5C762.7 343.6 763.0 434.9 763.6 422.8C764.2 410.7 764.5 274.7 765.1 311.1C765.8 347.6 766.1 570.9 766.7 605.0C767.3 639.2 767.6 529.3 768.2 481.8C768.8 434.4 769.2 392.2 769.8 368.0C770.4 343.8 770.7 367.2 771.3 360.9C771.9 354.6 772.2 283.5 772.9 336.5C773.5 389.4 773.8 584.5 774.4 625.5C775.0 666.6 775.3 546.9 776.0 541.7C776.6 536.5 776.9 592.5 777.5 599.4C778.1 606.3 778.4 632.6 779.1 576.2C779.7 519.7 780.0 343.1 780.6 317.1C781.2 291.0 781.5 443.2 782.2 446.0C782.8 448.8 783.1 317.3 783.7 331.2C784.3 345.2 784.6 511.5 785.2 515.8C785.9 520.0 786.2 357.5 786.8 352.4C787.4 347.3 787.7 450.2 788.3 490.3C789.0 530.4 789.3 574.6 789.9 552.9C790.5 531.1 790.8 427.0 791.4 381.6C792.1 336.3 792.4 281.7 793.0 326.1C793.6 370.5 793.9 580.8 794.5 603.9C795.1 627.0 795.5 475.7 796.1 441.7C796.7 407.7 797.0 408.8 797.6 433.8C798.2 458.9 798.5 550.3 799.2 566.9C799.8 583.5 800.1 511.9 800.7 516.9C801.3 522.0 801.6 581.2 802.3 592.1C802.9 603.0 803.2 578.9 803.8 571.4C804.4 563.9 804.7 580.7 805.4 554.6C806.0 528.4 806.3 466.9 806.9 440.6C807.5 414.4 807.8 397.2 808.4 423.3C809.1 449.5 809.4 529.2 810.0 571.6C810.6 613.9 810.9 643.3 811.5 635.1C812.2 626.9 812.5 574.7 813.1 530.6C813.7 486.5 814.0 405.1 814.6 414.5C815.3 423.9 815.6 553.4 816.2 577.6C816.8 601.8 817.1 536.8 817.7 535.6C818.4 534.4 818.7 603.5 819.3 571.6C819.9 539.6 820.2 398.6 820.8 375.8C821.4 353.1 821.8 409.2 822.4 457.6C823.0 506.0 823.3 588.4 823.9 617.9C824.5 647.5 824.8 627.3 825.5 605.3C826.1 583.4 826.4 537.8 827.0 508.1C827.6 478.4 827.9 473.1 828.6 456.9C829.2 440.8 829.5 397.1 830.1 427.5C830.7 457.8 831.0 577.3 831.7 608.7C832.3 640.2 832.6 624.7 833.2 584.7C833.8 544.8 834.1 425.2 834.7 408.9C835.4 392.6 835.7 476.1 836.3 503.3C836.9 530.6 837.2 538.4 837.8 545.2C838.5 551.9 838.8 581.4 839.4 537.1C840.0 492.8 840.3 323.9 840.9 323.6C841.6 323.3 841.9 510.0 842.5 535.6C843.1 561.1 843.4 454.5 844.0 451.5C844.6 448.5 845.0 510.8 845.6 520.7C846.2 530.7 846.5 534.7 847.1 501.1C847.7 467.6 848.1 391.4 848.7 353.0C849.3 314.7 849.6 276.2 850.2 309.3C850.8 342.4 851.1 465.7 851.8 518.5C852.4 571.4 852.7 597.7 853.3 573.6C853.9 549.5 854.2 398.5 854.9 398.1C855.5 397.7 855.8 523.7 856.4 571.5C857.0 619.3 857.3 683.1 858.0 636.9C858.6 590.7 858.9 368.3 859.5 340.7C860.1 313.0 860.4 493.3 861.0 498.7C861.7 504.1 862.0 366.4 862.6 367.5C863.2 368.7 863.5 508.6 864.1 504.5C864.8 500.4 865.1 350.5 865.7 346.9C866.3 343.3 866.6 438.8 867.2 486.4C867.9 534.1 868.2 555.6 868.8 585.1C869.4 614.6 869.7 659.7 870.3 634.0C870.9 608.2 871.3 497.8 871.9 456.5C872.5 415.1 872.8 450.7 873.4 427.0C874.0 403.3 874.4 301.5 875.0 338.0C875.6 374.5 875.9 590.4 876.5 609.4C877.1 628.4 877.4 451.7 878.1 433.1C878.7 414.4 879.0 508.4 879.6 516.2C880.2 524.0 880.5 457.1 881.2 472.0C881.8 486.9 882.1 576.0 882.7 590.6C883.3 605.2 883.6 570.0 884.3 545.2C884.9 520.3 885.2 509.0 885.8 466.5C886.4 424.0 886.7 305.5 887.3 332.8C888.0 360.1 888.3 574.1 888.9 602.9C889.5 631.6 889.8 522.7 890.4 476.6C891.1 430.6 891.4 404.2 892.0 372.7C892.6 341.2 892.9 278.9 893.5 319.1C894.2 359.3 894.5 518.0 895.1 573.6C895.7 629.2 896.0 646.3 896.6 597.0C897.2 547.6 897.6 383.1 898.2 327.0C898.8 270.8 899.1 285.8 899.7 316.2C900.3 346.7 900.7 418.2 901.3 479.2C901.9 540.2 902.2 650.5 902.8 621.2C903.4 591.9 903.7 354.7 904.4 332.6C905.0 310.4 905.3 509.1 905.9 510.6C906.5 512.0 906.8 355.2 907.5 339.8C908.1 324.4 908.4 428.4 909.0 433.7C909.6 439.0 909.9 335.7 910.6 366.2C911.2 396.6 911.5 583.3 912.1 585.9C912.7 588.4 913.0 383.1 913.6 379.0C914.3 374.9 914.6 540.2 915.2 565.4C915.8 590.6 916.1 546.4 916.7 505.1C917.4 463.8 917.7 387.0 918.3 359.0C918.9 330.9 919.2 320.8 919.8 364.6C920.5 408.5 920.8 537.9 921.4 578.3C922.0 618.8 922.3 581.1 922.9 566.7C923.5 552.4 923.9 526.5 924.5 506.7C925.1 486.8 925.4 466.5 926.0 467.6C926.6 468.7 926.9 485.9 927.6 512.0C928.2 538.1 928.5 589.1 929.1 598.2C929.7 607.2 930.0 597.0 930.7 557.2C931.3 517.3 931.9 430.7 932.2 399.1" stroke="#0000ff"/>
<path d="M159.5 638.9L192.0 638.9C192.6 636.1 194.0 662.5 194.8 625.3C195.7 588.1 195.8 500.3 196.4 452.9C197.0 405.5 197.3 353.7 197.9 388.4C198.6 423.0 198.9 631.6 199.5 626.2C200.1 620.9 200.4 366.9 201.0 361.7C201.6 356.4 202.0 584.1 202.6 599.9C203.2 615.7 203.5 469.2 204.1 440.6C204.7 412.0 205.1 458.8 205.7 456.9C206.3 455.1 206.6 415.4 207.2 431.5C207.8 447.6 208.1 523.9 208.8 537.6C209.4 551.3 209.7 518.2 210.3 499.9C210.9 481.7 211.2 446.5 211.9 446.2C212.5 445.8 212.8 503.1 213.4 498.1C214.0 493.0 214.3 422.4 215.0 421.0C215.6 419.6 215.9 476.5 216.5 491.1C217.1 505.7 217.4 465.9 218.0 493.9C218.7 521.9 219.0 643.1 219.6 631.1C220.2 619.2 220.5 465.0 221.1 434.2C221.8 403.3 222.1 451.6 222.7 477.0C223.3 502.3 223.6 579.2 224.2 561.1C224.9 542.9 225.2 422.4 225.8 386.3C226.4 350.3 226.7 360.7 227.3 380.9C227.9 401.1 228.3 447.6 228.9 487.3C229.5 527.0 229.8 580.5 230.4 579.5C231.0 578.5 231.4 477.6 232.0 482.4C232.6 487.2 232.9 580.6 233.5 603.4C234.1 626.2 234.4 617.8 235.1 596.4C235.7 575.0 236.0 494.0 236.6 496.5C237.2 498.9 237.5 609.3 238.2 608.5C238.8 607.8 239.1 520.4 239.7 492.7C240.3 465.0 240.6 443.6 241.3 470.1C241.9 496.7 242.2 633.7 242.8 625.4C243.4 617.0 243.7 431.1 244.3 428.4C245.0 425.6 245.3 618.1 245.9 611.7C246.5 605.2 246.8 442.3 247.4 396.3C248.1 350.3 248.4 367.0 249.0 381.7C249.6 396.4 249.9 421.9 250.5 469.7C251.2 517.5 251.5 620.4 252.1 620.9C252.7 621.4 253.0 493.6 253.6 472.2C254.2 450.8 254.6 543.5 255.2 513.9C255.8 484.3 256.1 308.4 256.7 324.4C257.3 340.4 257.7 587.6 258.3 593.8C258.9 600.0 259.2 412.3 259.8 355.4C260.4 298.5 260.7 301.2 261.4 309.4C262.0 317.7 262.3 384.8 262.9 396.7C263.5 408.7 263.8 333.7 264.5 369.3C265.1 404.9 265.4 585.8 266.0 574.8C266.6 563.8 266.9 333.9 267.6 314.2C268.2 294.5 268.5 474.5 269.1 476.2C269.7 477.8 270.0 350.5 270.6 322.5C271.3 294.4 271.6 283.6 272.2 335.9C272.8 388.3 273.1 575.8 273.7 584.3C274.4 592.7 274.7 428.8 275.3 378.1C275.9 327.5 276.2 283.3 276.8 331.1C277.5 378.9 277.8 578.8 278.4 617.2C279.0 655.5 279.3 568.5 279.9 522.8C280.5 477.1 280.9 376.1 281.5 388.8C282.1 401.5 282.4 595.6 283.0 586.4C283.6 577.1 283.9 350.0 284.6 342.4C285.2 334.7 285.5 542.6 286.1 547.9C286.7 553.3 287.0 360.4 287.7 369.1C288.3 377.8 288.6 570.6 289.2 591.4C289.8 612.1 290.1 524.1 290.8 472.8C291.4 421.4 291.7 315.2 292.3 334.6C292.9 354.1 293.2 526.5 293.9 570.0C294.5 613.4 294.8 571.6 295.4 551.9C296.0 532.2 296.3 475.2 296.9 471.5C297.6 467.8 297.9 502.3 298.5 533.3C299.1 564.4 299.4 617.6 300.0 626.7C300.7 635.7 301.0 586.9 301.6 578.6C302.2 570.4 302.5 635.4 303.1 585.5C303.8 535.6 304.1 363.5 304.7 329.2C305.3 294.9 305.6 411.4 306.2 414.1C306.8 416.8 307.2 308.9 307.8 342.7C308.4 376.5 308.7 575.7 309.3 583.1C309.9 590.4 310.2 375.7 310.9 379.3C311.5 382.8 311.8 584.0 312.4 600.8C313.0 617.6 313.3 497.8 314.0 463.3C314.6 428.9 314.9 417.1 315.5 428.4C316.1 439.7 316.4 535.5 317.1 519.9C317.7 504.2 318.0 363.1 318.6 350.2C319.2 337.2 319.5 435.9 320.1 455.3C320.8 474.6 321.1 468.7 321.7 447.0C322.3 425.4 322.6 315.5 323.2 347.0C323.9 378.4 324.2 611.6 324.8 604.3C325.4 597.0 325.7 345.2 326.3 310.5C327.0 275.7 327.3 391.0 327.9 430.6C328.5 470.2 328.8 519.6 329.4 508.5C330.1 497.4 330.4 366.5 331.0 375.1C331.6 383.6 331.9 564.1 332.5 551.3C333.1 538.5 333.5 332.0 334.1 311.3C334.7 290.6 335.0 406.2 335.6 447.9C336.2 489.6 336.5 532.1 337.2 519.7C337.8 507.3 338.1 391.4 338.7 386.0C339.3 380.6 339.6 453.7 340.3 492.6C340.9 531.5 341.2 600.3 341.8 580.4C342.4 560.5 342.7 384.4 343.4 392.9C344.0 401.4 344.3 627.9 344.9 622.9C345.5 617.8 345.8 381.3 346.4 367.7C347.1 354.1 347.4 543.0 348.0 555.0C348.6 566.9 348.9 475.8 349.5 427.5C350.2 379.1 350.5 309.9 351.1 313.4C351.7 316.9 352.0 423.9 352.6 445.1C353.3 466.3 353.6 401.3 354.2 419.4C354.8 437.4 355.1 491.7 355.7 535.5C356.3 579.2 356.7 619.8 357.3 638.3C357.9 656.7 358.2 637.4 358.8 627.7C359.4 617.9 359.8 628.0 360.4 589.5C361.0 550.9 361.3 453.8 361.9 435.1C362.5 416.4 362.8 489.1 363.5 495.9C364.1 502.7 364.4 500.0 365.0 469.3C365.6 438.7 365.9 317.5 366.6 342.7C367.2 367.9 367.5 551.0 368.1 595.2C368.7 639.4 369.0 598.2 369.7 563.7C370.3 529.2 370.6 409.3 371.2 422.9C371.8 436.4 372.1 588.5 372.7 631.5C373.4 674.5 373.7 660.0 374.3 638.0C374.9 616.0 375.2 528.3 375.8 521.5C376.5 514.6 376.8 603.8 377.4 603.7C378.0 603.5 378.3 528.5 378.9 520.7C379.6 512.9 379.9 579.7 380.5 564.7C381.1 549.7 381.4 470.0 382.0 445.9C382.6 421.7 383.0 418.9 383.6 444.0C384.2 469.1 384.5 573.6 385.1 571.3C385.7 569.0 386.1 450.4 386.7 432.5C387.3 414.6 387.6 449.4 388.2 481.8C388.8 514.2 389.1 624.8 389.8 594.3C390.4 563.8 390.7 336.3 391.3 329.1C391.9 321.9 392.2 506.2 392.9 558.3C393.5 610.4 393.8 579.7 394.4 589.5C395.0 599.3 395.3 639.5 396.0 607.2C396.6 574.8 396.9 479.1 397.5 427.8C398.1 376.5 398.4 360.2 399.0 350.7C399.7 341.2 400.0 349.1 400.6 380.2C401.2 411.2 401.5 471.7 402.1 505.9C402.8 540.2 403.1 525.6 403.7 551.5C404.3 577.3 404.6 660.2 405.2 635.1C405.9 609.9 406.2 462.0 406.8 425.6C407.4 389.1 407.7 433.4 408.3 452.9C408.9 472.4 409.3 528.5 409.9 523.0C410.5 517.5 410.8 431.5 411.4 425.3C412.0 419.2 412.4 511.4 413.0 492.1C413.6 472.8 413.9 348.1 414.5 328.9C415.1 309.8 415.4 350.7 416.1 396.3C416.7 441.8 417.0 567.9 417.6 556.7C418.2 545.4 418.5 326.5 419.2 340.1C419.8 353.6 420.1 599.7 420.7 624.3C421.3 648.9 421.6 487.0 422.3 463.1C422.9 439.1 423.2 485.2 423.8 504.6C424.4 524.0 424.7 537.3 425.3 560.3C426.0 583.2 426.3 655.3 426.9 619.6C427.5 583.8 427.8 378.2 428.4 381.3C429.1 384.3 429.4 619.7 430.0 634.8C430.6 649.9 430.9 518.1 431.5 456.7C432.2 395.2 432.5 300.7 433.1 327.7C433.7 354.7 434.0 542.8 434.6 591.8C435.2 640.8 435.6 603.7 436.2 572.9C436.8 542.1 437.1 458.1 437.7 437.8C438.3 417.4 438.6 473.4 439.3 471.2C439.9 469.0 440.2 446.9 440.8 426.7C441.4 406.4 441.7 339.0 442.4 369.9C443.0 400.7 443.3 547.8 443.9 581.1C444.5 614.4 444.8 544.8 445.5 536.5C446.1 528.2 446.4 522.3 447.0 539.6C447.6 556.8 447.9 661.8 448.6 622.8C449.2 583.9 449.5 393.3 450.1 344.7C450.7 296.2 451.0 368.4 451.6 379.9C452.3 391.4 452.6 350.9 453.2 402.3C453.8 453.6 454.1 645.3 454.7 636.8C455.4 628.2 455.7 408.5 456.3 359.6C456.9 310.7 457.2 367.3 457.8 392.4C458.5 417.5 458.8 484.8 459.4 485.0C460.0 485.2 460.3 392.7 460.9 393.5C461.5 394.4 461.9 455.1 462.5 489.2C463.1 523.3 463.4 541.2 464.0 564.1C464.6 587.1 464.9 604.5 465.6 604.0C466.2 603.6 466.5 557.6 467.1 562.0C467.7 566.4 468.0 632.8 468.7 626.0C469.3 619.2 469.6 574.9 470.2 527.9C470.8 480.9 471.1 414.7 471.8 390.9C472.4 367.2 472.7 415.3 473.3 409.0C473.9 402.6 474.2 360.4 474.8 359.3C475.5 358.2 475.8 365.2 476.4 403.5C477.0 441.8 477.3 540.4 477.9 550.9C478.6 561.3 478.9 467.0 479.5 455.7C480.1 444.5 480.4 510.2 481.0 494.6C481.7 479.1 482.0 383.9 482.6 378.1C483.2 372.3 483.5 431.2 484.1 465.8C484.8 500.4 485.1 559.0 485.7 551.1C486.3 543.3 486.6 472.8 487.2 426.5C487.8 380.2 488.2 291.6 488.8 319.7C489.4 347.8 489.7 561.5 490.3 567.1C490.9 572.7 491.2 334.5 491.9 347.8C492.5 361.2 492.8 592.8 493.4 633.8C494.0 674.8 494.3 567.4 495.0 552.7C495.6 538.1 495.9 592.8 496.5 560.8C497.1 528.8 497.4 439.7 498.1 392.8C498.7 346.0 499.0 326.6 499.6 326.4C500.2 326.3 500.5 351.2 501.1 392.1C501.8 433.0 502.1 539.6 502.7 530.8C503.3 521.9 503.6 347.9 504.2 347.8C504.9 347.7 505.2 487.8 505.8 530.2C506.4 572.6 506.7 598.1 507.3 559.8C508.0 521.5 508.3 364.6 508.9 338.7C509.5 312.8 509.8 416.1 510.4 430.3C511.0 444.5 511.4 412.0 512.0 409.7C512.6 407.4 512.9 437.8 513.5 418.9C514.1 399.9 514.5 302.1 515.1 315.1C515.7 328.0 516.0 474.4 516.6 483.6C517.2 492.8 517.5 376.2 518.2 361.2C518.8 346.1 519.1 409.3 519.7 408.1C520.3 407.0 520.6 338.0 521.3 355.3C521.9 372.5 522.2 485.5 522.8 494.3C523.4 503.1 523.7 408.0 524.4 399.2C525.0 390.4 525.3 422.7 525.9 450.2C526.5 477.8 526.8 513.4 527.4 537.1C528.1 560.8 528.4 589.6 529.0 568.8C529.6 547.9 529.9 424.1 530.5 432.9C531.2 441.8 531.5 632.2 532.1 613.1C532.7 594.1 533.0 342.1 533.6 337.6C534.3 333.2 534.6 532.6 535.2 591.0C535.8 649.5 536.1 627.5 536.7 630.0C537.3 632.5 537.7 663.2 538.3 603.6C538.9 543.9 539.2 347.4 539.8 331.6C540.4 315.9 540.8 472.7 541.4 524.8C542.0 576.9 542.3 571.0 542.9 591.9C543.5 612.9 543.8 622.7 544.5 629.4C545.1 636.0 545.4 669.0 546.0 625.1C546.6 581.2 546.9 449.0 547.6 409.8C548.2 370.6 548.5 429.5 549.1 429.2C549.7 428.9 550.0 415.2 550.7 408.3C551.3 401.5 551.6 353.4 552.2 395.2C552.8 436.9 553.1 607.4 553.7 617.1C554.4 626.8 554.7 463.3 555.3 443.6C555.9 423.9 556.2 533.7 556.8 518.7C557.5 503.7 557.8 398.6 558.4 368.5C559.0 338.3 559.3 372.7 559.9 367.8C560.6 362.9 560.9 294.3 561.5 344.1C562.1 393.9 562.4 615.5 563.0 617.0C563.6 618.6 564.0 408.0 564.6 351.9C565.2 295.7 565.5 341.5 566.1 336.4C566.7 331.4 567.1 273.2 567.7 326.6C568.3 380.0 568.6 554.6 569.2 603.4C569.8 652.3 570.1 571.1 570.8 570.8C571.4 570.5 571.7 590.5 572.3 601.8C572.9 613.2 573.2 676.1 573.9 627.5C574.5 578.8 574.8 409.9 575.4 358.5C576.0 307.1 576.3 356.2 577.0 370.3C577.6 384.4 577.9 430.0 578.5 429.1C579.1 428.3 579.4 365.8 580.0 366.0C580.7 366.2 581.0 394.4 581.6 430.0C582.2 465.6 582.5 508.7 583.1 543.8C583.8 579.0 584.1 593.3 584.7 605.8C585.3 618.4 585.6 650.0 586.2 606.5C586.9 563.0 587.2 395.5 587.8 388.4C588.4 381.3 588.7 542.1 589.3 571.1C589.9 600.0 590.3 547.8 590.9 533.3C591.5 518.8 591.8 479.0 592.4 498.7C593.0 518.4 593.3 620.9 594.0 631.9C594.6 643.0 594.9 571.3 595.5 554.0C596.1 536.7 596.4 575.8 597.1 545.4C597.7 515.0 598.0 407.8 598.6 402.1C599.2 396.5 599.5 491.0 600.2 517.1C600.8 543.3 601.1 572.2 601.7 532.8C602.3 493.3 602.6 332.1 603.3 320.0C603.9 308.0 604.2 464.8 604.8 472.3C605.4 479.7 605.7 364.9 606.3 357.3C607.0 349.7 607.3 380.1 607.9 434.4C608.5 488.6 608.8 615.0 609.4 628.6C610.1 642.2 610.4 529.1 611.0 502.3C611.6 475.5 611.9 518.3 612.5 494.5C613.2 470.7 613.5 377.3 614.1 383.2C614.7 389.1 615.0 519.6 615.6 524.2C616.2 528.7 616.6 418.5 617.2 405.8C617.8 393.2 618.1 428.7 618.7 461.0C619.3 493.3 619.6 588.7 620.3 567.2C620.9 545.8 621.2 345.4 621.8 353.7C622.4 362.0 622.7 606.0 623.4 608.8C624.0 611.6 624.3 373.0 624.9 367.7C625.5 362.5 625.8 528.4 626.5 582.5C627.1 636.7 627.4 640.5 628.0 638.4C628.6 636.3 628.9 622.4 629.5 572.0C630.2 521.7 630.5 438.1 631.1 386.8C631.7 335.5 632.0 265.3 632.6 315.5C633.3 365.6 633.6 605.2 634.2 637.4C634.8 669.6 635.1 508.8 635.7 476.5C636.4 444.3 636.7 496.6 637.3 476.3C637.9 456.1 638.2 355.0 638.8 375.4C639.5 395.7 639.8 557.8 640.4 577.8C641.0 597.8 641.3 486.1 641.9 475.3C642.5 464.5 642.9 546.3 643.5 524.0C644.1 501.7 644.4 358.0 645.0 363.8C645.6 369.5 645.9 560.1 646.6 552.7C647.2 545.3 647.5 328.2 648.1 326.7C648.7 325.2 649.0 496.8 649.7 545.0C650.3 593.3 650.6 595.3 651.2 567.8C651.8 540.3 652.1 426.3 652.8 407.5C653.4 388.8 653.7 435.1 654.3 474.1C654.9 513.1 655.2 611.6 655.8 602.5C656.5 593.4 656.8 426.4 657.4 428.3C658.0 430.3 658.3 622.1 658.9 612.1C659.6 602.1 659.9 419.0 660.5 378.3C661.1 337.5 661.4 408.2 662.0 408.3C662.7 408.4 663.0 374.0 663.6 378.6C664.2 383.2 664.5 402.7 665.1 431.2C665.7 459.7 666.1 506.3 666.7 521.2C667.3 536.2 667.6 508.7 668.2 506.2C668.8 503.6 669.2 540.7 669.8 508.4C670.4 476.0 670.7 324.0 671.3 344.4C671.9 364.8 672.2 610.2 672.9 610.4C673.5 610.5 673.8 341.0 674.4 345.0C675.0 349.1 675.3 585.4 676.0 630.5C676.6 675.7 676.9 586.4 677.5 570.7C678.1 554.9 678.4 597.8 679.1 551.8C679.7 505.8 680.0 356.6 680.6 340.8C681.2 325.1 681.5 438.6 682.1 473.1C682.8 507.6 683.1 538.7 683.7 513.4C684.3 488.1 684.6 336.9 685.2 346.5C685.9 356.2 686.2 533.6 686.8 561.6C687.4 589.6 687.7 506.1 688.3 486.4C689.0 466.7 689.3 482.5 689.9 463.1C690.5 443.7 690.8 404.0 691.4 389.3C692.0 374.7 692.4 382.7 693.0 389.8C693.6 397.0 693.9 398.4 694.5 425.1C695.1 451.9 695.5 502.5 696.1 523.6C696.7 544.7 697.0 518.0 697.6 530.8C698.2 543.6 698.5 621.6 699.2 587.5C699.8 553.3 700.1 393.5 700.7 360.0C701.3 326.5 701.6 413.2 702.3 419.9C702.9 426.6 703.2 360.9 703.8 393.5C704.4 426.0 704.7 562.7 705.4 582.8C706.0 602.8 706.3 533.7 706.9 493.7C707.5 453.8 707.8 392.4 708.4 383.1C709.1 373.8 709.4 404.5 710.0 447.3C710.6 490.1 710.9 589.4 711.5 597.2C712.2 604.9 712.5 536.3 713.1 486.1C713.7 435.9 714.0 331.3 714.6 346.1C715.3 361.0 715.6 514.3 716.2 560.2C716.8 606.0 717.1 579.7 717.7 575.5C718.3 571.3 718.7 573.0 719.3 539.1C719.9 505.3 720.2 442.2 720.8 406.3C721.4 370.5 721.8 323.6 722.4 359.8C723.0 396.1 723.3 542.2 723.9 587.7C724.5 633.2 724.8 593.4 725.5 587.3C726.1 581.1 726.4 568.3 727.0 557.0C727.6 545.7 727.9 549.0 728.6 530.9C729.2 512.7 729.5 455.2 730.1 466.2C730.7 477.1 731.0 572.8 731.7 585.6C732.3 598.5 732.6 532.2 733.2 530.4C733.8 528.5 734.1 619.1 734.7 576.3C735.4 533.5 735.7 352.0 736.3 316.4C736.9 280.7 737.2 340.1 737.8 397.9C738.5 455.6 738.8 620.6 739.4 605.2C740.0 589.7 740.3 320.6 740.9 320.6C741.6 320.6 741.9 567.0 742.5 605.2C743.1 643.5 743.4 570.1 744.0 511.8C744.6 453.4 745.0 340.7 745.6 313.5C746.2 286.3 746.5 359.4 747.1 376.0C747.7 392.5 748.0 372.5 748.7 396.3C749.3 420.2 749.6 459.5 750.2 495.0C750.8 530.5 751.1 587.4 751.8 574.0C752.4 560.5 752.7 422.0 753.3 427.9C753.9 433.8 754.2 575.0 754.9 603.5C755.5 632.1 755.8 589.2 756.4 570.6C757.0 552.0 757.3 499.0 758.0 510.4C758.6 521.8 758.9 628.3 759.5 627.6C760.1 626.9 760.4 557.0 761.0 506.9C761.7 456.8 762.0 396.7 762.6 377.3C763.2 357.8 763.5 390.3 764.1 409.5C764.8 428.7 765.1 469.3 765.7 473.3C766.3 477.4 766.6 427.3 767.2 429.7C767.9 432.2 768.2 453.2 768.8 485.6C769.4 518.1 769.7 601.2 770.3 592.0C770.9 582.7 771.3 456.6 771.9 439.2C772.5 421.8 772.8 514.1 773.4 505.0C774.0 495.9 774.3 427.1 775.0 393.8C775.6 360.5 775.9 318.0 776.5 338.6C777.1 359.1 777.4 474.5 778.1 496.6C778.7 518.7 779.0 470.1 779.6 449.0C780.2 427.9 780.5 381.0 781.2 391.1C781.8 401.2 782.1 465.1 782.7 499.6C783.3 534.0 783.6 583.2 784.2 563.3C784.9 543.4 785.2 443.1 785.8 400.0C786.4 356.9 786.7 351.2 787.3 347.8C788.0 344.4 788.3 371.0 788.9 382.9C789.5 394.8 789.8 412.5 790.4 407.3C791.1 402.1 791.4 355.6 792.0 356.9C792.6 358.3 792.9 400.2 793.5 414.1C794.2 428.1 794.5 411.8 795.1 426.7C795.7 441.6 796.0 467.0 796.6 488.7C797.2 510.5 797.6 546.9 798.2 535.3C798.8 523.8 799.1 416.8 799.7 431.1C800.3 445.3 800.6 592.7 801.3 606.5C801.9 620.3 802.2 545.4 802.8 500.1C803.4 454.8 803.7 399.5 804.4 380.1C805.0 360.7 805.3 392.9 805.9 403.0C806.5 413.1 806.8 400.0 807.5 430.6C808.1 461.3 808.4 542.5 809.0 556.2C809.6 569.8 809.9 512.3 810.5 498.8C811.2 485.2 811.5 501.4 812.1 488.3C812.7 475.2 813.0 430.3 813.6 433.3C814.3 436.3 814.6 507.0 815.2 503.5C815.8 499.9 816.1 450.0 816.7 415.5C817.4 381.1 817.7 298.7 818.3 331.2C818.9 363.8 819.2 560.1 819.8 578.3C820.4 596.6 820.8 461.8 821.4 422.4C822.0 383.0 822.3 363.9 822.9 381.5C823.5 399.1 823.9 491.2 824.5 510.3C825.1 529.4 825.4 515.6 826.0 476.9C826.6 438.1 826.9 286.7 827.6 316.5C828.2 346.4 828.5 597.7 829.1 626.2C829.7 654.8 830.0 467.3 830.7 459.2C831.3 451.0 831.6 601.4 832.2 585.7C832.8 569.9 833.1 431.9 833.8 380.3C834.4 328.7 834.7 310.4 835.3 327.8C835.9 345.2 836.2 411.6 836.8 467.1C837.5 522.7 837.8 609.1 838.4 605.4C839.0 601.8 839.3 477.9 839.9 448.8C840.6 419.7 840.9 469.4 841.5 459.9C842.1 450.5 842.4 399.7 843.0 401.6C843.7 403.5 844.0 464.3 844.6 469.5C845.2 474.6 845.5 448.4 846.1 427.4C846.7 406.5 847.1 356.9 847.7 364.7C848.3 372.5 848.6 438.6 849.2 466.3C849.8 494.0 850.2 531.3 850.8 503.1C851.4 475.0 851.7 312.1 852.3 325.3C852.9 338.6 853.2 551.9 853.9 569.4C854.5 586.8 854.8 424.6 855.4 412.5C856.0 400.5 856.3 514.2 857.0 509.1C857.6 503.9 857.9 368.8 858.5 386.6C859.1 404.5 859.4 613.0 860.1 598.4C860.7 583.7 861.0 328.7 861.6 313.3C862.2 297.9 862.5 459.9 863.1 521.3C863.8 582.7 864.1 614.8 864.7 620.1C865.3 625.5 865.6 570.8 866.2 548.1C866.9 525.4 867.2 489.4 867.8 506.7C868.4 523.9 868.7 635.7 869.3 634.5C870.0 633.2 870.3 527.4 870.9 500.4C871.5 473.5 871.8 518.3 872.4 499.8C873.0 481.3 873.4 403.4 874.0 407.9C874.6 412.5 874.9 493.8 875.5 522.4C876.1 551.1 876.5 542.7 877.1 551.2C877.7 559.6 878.0 596.1 878.6 564.6C879.2 533.1 879.5 441.0 880.2 393.6C880.8 346.3 881.1 313.8 881.7 328.0C882.3 342.2 882.6 416.9 883.3 464.5C883.9 512.2 884.2 584.6 884.8 566.5C885.4 548.3 885.7 385.2 886.4 373.8C887.0 362.3 887.3 470.2 887.9 509.2C888.5 548.2 888.8 551.4 889.4 568.7C890.1 586.1 890.4 633.4 891.0 596.1C891.6 558.8 891.9 427.0 892.5 382.0C893.2 337.0 893.5 361.7 894.1 371.1C894.7 380.5 895.0 406.6 895.6 429.1C896.3 451.6 896.6 478.9 897.2 483.7C897.8 488.5 898.1 436.9 898.7 453.0C899.3 469.1 899.7 590.7 900.3 564.1C900.9 537.5 901.2 328.5 901.8 320.1C902.4 311.7 902.7 500.6 903.4 522.1C904.0 543.6 904.3 458.4 904.9 427.6C905.5 396.8 905.8 379.8 906.5 368.1C907.1 356.4 907.4 345.7 908.0 368.9C908.6 392.1 908.9 449.5 909.6 484.0C910.2 518.6 910.5 546.8 911.1 541.5C911.7 536.2 912.0 446.3 912.7 457.5C913.3 468.7 913.6 616.3 914.2 597.5C914.8 578.6 915.1 378.3 915.7 363.1C916.4 347.9 916.7 522.7 917.3 521.5C917.9 520.4 918.2 351.8 918.8 357.5C919.5 363.3 919.8 519.0 920.4 550.4C921.0 581.8 921.3 513.5 921.9 514.5C922.6 515.4 922.9 558.3 923.5 555.0C924.1 551.7 924.4 493.5 925.0 497.9C925.6 502.4 926.0 549.4 926.6 577.4C927.2 605.4 927.5 673.4 928.1 638.0C928.7 602.5 929.0 418.6 929.7 400.2C930.3 381.7 930.6 514.3 931.2 545.9C931.8 577.4 932.5 555.4 932.8 557.8" stroke="#ffff00"/>
<path d="M159.5 638.9L192.0 638.9C192.3 607.1 192.9 508.6 193.5 480.3C194.1 451.9 194.4 507.6 195.0 497.1C195.6 486.7 195.9 443.4 196.6 428.1C197.2 412.8 197.5 402.6 198.1 420.8C198.7 439.0 199.0 536.8 199.6 519.0C200.3 501.2 200.6 364.3 201.2 331.7C201.8 299.2 202.1 298.6 202.7 356.3C203.4 413.9 203.7 618.2 204.3 620.0C204.9 621.7 205.2 421.2 205.8 365.1C206.5 308.9 206.8 336.4 207.4 339.3C208.0 342.2 208.3 328.9 208.9 379.6C209.5 430.2 209.9 595.6 210.5 592.4C211.1 589.3 211.4 396.5 212.0 363.9C212.6 331.3 213.0 375.5 213.6 429.5C214.2 483.5 214.5 592.8 215.1 633.9C215.7 675.0 216.0 697.0 216.7 635.1C217.3 573.1 217.6 366.7 218.2 324.1C218.8 281.5 219.1 375.5 219.8 421.9C220.4 468.3 220.7 519.5 221.3 556.2C221.9 592.8 222.2 598.2 222.9 605.3C223.5 612.4 223.8 600.4 224.4 591.7C225.0 582.9 225.3 603.5 225.9 561.6C226.6 519.7 226.9 389.6 227.5 382.1C228.1 374.7 228.4 483.0 229.0 524.3C229.7 565.5 230.0 625.3 230.6 588.4C231.2 551.5 231.5 382.1 232.1 339.9C232.8 297.6 233.1 328.3 233.7 377.0C234.3 425.7 234.6 589.9 235.2 583.3C235.8 576.7 236.2 373.3 236.8 344.1C237.4 315.0 237.7 430.4 238.3 437.7C238.9 444.9 239.3 384.5 239.9 380.5C240.5 376.5 240.8 425.2 241.4 417.8C242.0 410.3 242.3 351.1 243.0 343.2C243.6 335.3 243.9 374.6 244.5 378.2C245.1 381.9 245.4 322.4 246.1 361.5C246.7 400.5 247.0 563.9 247.6 573.6C248.2 583.2 248.5 431.8 249.2 409.7C249.8 387.7 250.1 466.6 250.7 463.3C251.3 460.1 251.6 387.4 252.2 393.5C252.9 399.6 253.2 503.1 253.8 493.8C254.4 484.5 254.7 354.6 255.3 346.9C256.0 339.2 256.3 414.4 256.9 455.3C257.5 496.2 257.8 530.2 258.4 551.4C259.1 572.6 259.4 553.1 260.0 561.4C260.6 569.7 260.9 609.9 261.5 592.8C262.1 575.7 262.5 470.4 263.1 475.8C263.7 481.1 264.0 617.8 264.6 619.5C265.2 621.2 265.6 490.1 266.2 484.4C266.8 478.7 267.1 592.7 267.7 591.1C268.3 589.5 268.6 499.8 269.3 476.4C269.9 453.0 270.2 477.3 270.8 474.1C271.4 470.9 271.7 484.5 272.4 460.4C273.0 436.3 273.3 318.2 273.9 353.5C274.5 388.7 274.8 635.2 275.5 636.7C276.1 638.1 276.4 391.3 277.0 360.8C277.6 330.3 277.9 465.7 278.5 484.1C279.2 502.5 279.5 465.9 280.1 452.8C280.7 439.8 281.0 437.2 281.6 418.8C282.3 400.4 282.6 341.7 283.2 360.9C283.8 380.1 284.1 487.0 284.7 514.9C285.4 542.7 285.7 539.1 286.3 500.3C286.9 461.6 287.2 298.5 287.8 321.2C288.4 343.9 288.8 592.5 289.4 613.9C290.0 635.3 290.3 465.3 290.9 428.2C291.5 391.1 291.9 388.2 292.5 428.5C293.1 468.7 293.4 627.7 294.0 629.4C294.6 631.2 294.9 480.5 295.6 437.2C296.2 394.0 296.5 434.4 297.1 413.1C297.7 391.8 298.0 307.5 298.7 330.8C299.3 354.1 299.6 532.9 300.2 529.6C300.8 526.2 301.1 326.1 301.8 314.2C302.4 302.3 302.7 437.1 303.3 470.0C303.9 502.9 304.2 504.2 304.8 478.6C305.5 453.0 305.8 312.2 306.4 342.0C307.0 371.8 307.3 615.8 307.9 627.6C308.6 639.5 308.9 440.5 309.5 401.3C310.1 362.2 310.4 407.0 311.0 432.1C311.7 457.2 312.0 542.5 312.6 526.9C313.2 511.2 313.5 355.7 314.1 353.9C314.7 352.1 315.1 492.2 315.7 517.8C316.3 543.4 316.6 492.5 317.2 481.9C317.8 471.4 318.1 484.6 318.8 465.1C319.4 445.5 319.7 363.2 320.3 384.0C320.9 404.8 321.2 547.0 321.9 569.2C322.5 591.4 322.8 508.9 323.4 494.9C324.0 480.9 324.3 507.0 325.0 499.2C325.6 491.3 325.9 482.4 326.5 455.6C327.1 428.9 327.4 348.2 328.0 365.4C328.7 382.7 329.0 542.1 329.6 542.0C330.2 541.9 330.5 372.4 331.1 365.1C331.8 357.8 332.1 483.9 332.7 505.3C333.3 526.8 333.6 463.5 334.2 472.3C334.9 481.0 335.2 549.2 335.8 549.0C336.4 548.8 336.7 517.9 337.3 471.4C338.0 424.9 338.3 326.2 338.9 316.4C339.5 306.6 339.8 410.3 340.4 422.4C341.0 434.5 341.4 355.5 342.0 376.9C342.6 398.4 342.9 498.0 343.5 529.4C344.1 560.8 344.4 531.9 345.1 534.0C345.7 536.1 346.0 557.7 346.6 539.9C347.2 522.1 347.5 467.1 348.2 444.9C348.8 422.7 349.1 442.0 349.7 428.9C350.3 415.8 350.6 340.2 351.3 379.5C351.9 418.8 352.2 621.5 352.8 625.6C353.4 629.7 353.7 455.8 354.3 399.9C355.0 343.9 355.3 334.3 355.9 346.0C356.5 357.7 356.8 403.2 357.4 458.5C358.1 513.8 358.4 606.2 359.0 622.4C359.6 638.6 359.9 536.6 360.5 539.5C361.2 542.4 361.5 629.5 362.1 636.8C362.7 644.1 363.0 636.6 363.6 576.0C364.2 515.5 364.6 361.8 365.2 334.1C365.8 306.4 366.1 420.1 366.7 437.6C367.3 455.0 367.7 433.2 368.3 421.2C368.9 409.3 369.2 394.6 369.8 377.9C370.4 361.3 370.7 326.2 371.4 338.0C372.0 349.7 372.3 417.2 372.9 436.5C373.5 455.9 373.8 435.9 374.5 434.9C375.1 433.9 375.4 436.8 376.0 431.6C376.6 426.3 376.9 406.5 377.6 408.5C378.2 410.6 378.5 440.6 379.1 441.6C379.7 442.7 380.0 388.3 380.6 413.6C381.3 439.0 381.6 567.7 382.2 568.6C382.8 569.5 383.1 434.5 383.7 418.3C384.4 402.0 384.7 493.8 385.3 487.4C385.9 481.1 386.2 363.0 386.8 386.6C387.5 410.2 387.8 566.9 388.4 605.3C389.0 643.8 389.3 574.6 389.9 578.9C390.5 583.2 390.9 665.9 391.5 626.6C392.1 587.4 392.4 440.7 393.0 382.7C393.6 324.7 394.0 328.7 394.6 336.6C395.2 344.4 395.5 385.9 396.1 422.0C396.7 458.1 397.0 527.9 397.7 516.9C398.3 505.8 398.6 394.4 399.2 366.8C399.8 339.2 400.1 361.5 400.8 378.7C401.4 396.0 401.7 418.0 402.3 453.0C402.9 487.9 403.2 536.3 403.9 553.5C404.5 570.7 404.8 549.8 405.4 539.0C406.0 528.1 406.3 500.5 406.9 499.4C407.6 498.3 407.9 534.1 408.5 533.5C409.1 532.9 409.4 517.8 410.0 496.4C410.7 475.0 411.0 459.9 411.6 426.6C412.2 393.3 412.5 291.2 413.1 330.0C413.8 368.9 414.1 596.6 414.7 620.8C415.3 645.0 415.6 450.2 416.2 451.2C416.8 452.2 417.2 596.2 417.8 625.8C418.4 655.5 418.7 650.5 419.3 599.6C419.9 548.6 420.3 401.1 420.9 370.9C421.5 340.7 421.8 455.8 422.4 448.6C423.0 441.4 423.3 326.5 424.0 335.1C424.6 343.6 424.9 431.4 425.5 491.2C426.1 551.0 426.4 630.3 427.1 634.2C427.7 638.1 428.0 549.0 428.6 510.8C429.2 472.6 429.5 479.5 430.2 443.1C430.8 406.7 431.1 354.5 431.7 328.7C432.3 303.0 432.6 283.9 433.2 314.5C433.9 345.1 434.2 444.0 434.8 481.6C435.4 519.2 435.7 477.8 436.3 502.5C437.0 527.2 437.3 620.5 437.9 605.1C438.5 589.8 438.8 433.0 439.4 425.7C440.1 418.4 440.4 536.1 441.0 568.7C441.6 601.2 441.9 575.7 442.5 588.7C443.1 601.7 443.5 624.0 444.1 633.7C444.7 643.4 445.0 681.5 445.6 637.3C446.2 593.1 446.6 420.5 447.2 412.7C447.8 405.0 448.1 617.3 448.7 598.6C449.3 579.9 449.6 317.1 450.3 319.3C450.9 321.5 451.2 603.3 451.8 609.7C452.4 616.1 452.7 354.0 453.4 351.3C454.0 348.6 454.3 539.9 454.9 596.2C455.5 652.5 455.8 672.0 456.5 633.0C457.1 593.9 457.4 415.8 458.0 401.0C458.6 386.1 458.9 559.7 459.5 558.7C460.2 557.8 460.5 392.6 461.1 396.3C461.7 399.9 462.0 531.7 462.6 576.9C463.3 622.1 463.6 661.1 464.2 622.3C464.8 583.5 465.1 426.8 465.7 382.9C466.4 339.0 466.7 408.3 467.3 402.9C467.9 397.5 468.2 357.0 468.8 355.9C469.4 354.9 469.8 346.5 470.4 397.5C471.0 448.5 471.3 604.3 471.9 611.0C472.5 617.7 472.8 472.3 473.5 431.0C474.1 389.6 474.4 393.2 475.0 404.3C475.6 415.4 475.9 501.3 476.6 486.5C477.2 471.8 477.5 316.9 478.1 330.5C478.7 344.2 479.0 557.0 479.7 554.8C480.3 552.7 480.6 350.6 481.2 319.9C481.8 289.3 482.1 338.6 482.7 401.7C483.4 464.7 483.7 588.6 484.3 635.1C484.9 681.6 485.2 676.3 485.8 634.0C486.5 591.7 486.8 476.7 487.4 423.7C488.0 370.6 488.3 330.8 488.9 368.5C489.6 406.3 489.9 579.0 490.5 612.5C491.1 646.0 491.4 579.0 492.0 536.0C492.7 493.0 493.0 388.0 493.6 397.6C494.2 407.2 494.5 592.7 495.1 584.0C495.7 575.3 496.1 375.3 496.7 354.1C497.3 332.9 497.6 425.0 498.2 478.0C498.8 531.0 499.1 611.2 499.8 619.1C500.4 626.9 500.7 551.4 501.3 517.3C501.9 483.2 502.2 453.4 502.9 448.7C503.5 444.0 503.8 500.5 504.4 493.8C505.0 487.0 505.3 395.6 506.0 415.0C506.6 434.4 506.9 598.9 507.5 590.9C508.1 583.0 508.4 389.6 509.0 375.2C509.7 360.7 510.0 508.6 510.6 518.7C511.2 528.8 511.5 443.2 512.1 425.6C512.8 408.0 513.1 415.6 513.7 430.6C514.3 445.6 514.6 484.5 515.2 500.6C515.9 516.8 516.2 535.6 516.8 511.3C517.4 486.9 517.7 415.8 518.3 378.8C518.9 341.8 519.3 326.3 519.9 326.4C520.5 326.5 520.8 354.4 521.4 379.4C522.0 404.4 522.4 418.8 523.0 451.4C523.6 484.0 523.9 508.7 524.5 542.2C525.1 575.6 525.4 663.9 526.1 618.8C526.7 573.7 527.0 359.3 527.6 316.8C528.2 274.3 528.5 396.6 529.2 406.3C529.8 416.0 530.1 340.7 530.7 365.2C531.3 389.8 531.6 514.4 532.3 529.0C532.9 543.7 533.2 481.2 533.8 438.5C534.4 395.8 534.7 330.5 535.3 315.6C536.0 300.7 536.3 339.0 536.9 363.9C537.5 388.8 537.8 405.5 538.4 440.1C539.1 474.6 539.4 525.4 540.0 536.8C540.6 548.2 540.9 535.5 541.5 497.1C542.2 458.8 542.5 341.7 543.1 345.1C543.7 348.6 544.0 500.8 544.6 514.3C545.2 527.7 545.6 427.3 546.2 412.4C546.8 397.5 547.1 453.8 547.7 439.8C548.3 425.9 548.7 356.1 549.3 342.5C549.9 328.9 550.2 331.3 550.8 371.8C551.4 412.3 551.7 491.9 552.4 545.2C553.0 598.5 553.3 637.0 553.9 638.3C554.5 639.6 554.8 579.7 555.5 551.9C556.1 524.0 556.4 520.5 557.0 499.1C557.6 477.7 557.9 470.9 558.6 444.8C559.2 418.8 559.5 388.9 560.1 369.0C560.7 349.1 561.0 294.2 561.6 345.4C562.3 396.5 562.6 621.3 563.2 624.9C563.8 628.5 564.1 414.2 564.7 363.3C565.4 312.4 565.7 372.6 566.3 370.4C566.9 368.2 567.2 336.2 567.8 352.1C568.5 367.9 568.8 410.5 569.4 449.7C570.0 489.0 570.3 566.8 570.9 548.3C571.5 529.8 571.9 392.6 572.5 357.4C573.1 322.1 573.4 360.9 574.0 372.0C574.6 383.0 575.0 419.5 575.6 412.4C576.2 405.4 576.5 314.3 577.1 336.7C577.7 359.0 578.0 469.3 578.7 524.1C579.3 579.0 579.6 624.4 580.2 610.7C580.8 597.0 581.1 502.9 581.8 455.7C582.4 408.6 582.7 351.8 583.3 375.1C583.9 398.5 584.2 569.4 584.9 572.6C585.5 575.7 585.8 439.1 586.4 390.8C587.0 342.4 587.3 296.6 587.9 330.7C588.6 364.9 588.9 540.0 589.5 561.5C590.1 582.9 590.4 467.5 591.0 438.1C591.7 408.8 592.0 405.4 592.6 414.7C593.2 424.1 593.5 453.8 594.1 485.0C594.8 516.1 595.1 556.6 595.7 570.5C596.3 584.5 596.6 590.6 597.2 554.6C597.8 518.6 598.2 426.0 598.8 390.4C599.4 354.9 599.7 357.8 600.3 377.0C600.9 396.3 601.3 440.3 601.9 486.8C602.5 533.4 602.8 632.8 603.4 609.9C604.0 586.9 604.3 417.4 605.0 372.1C605.6 326.8 605.9 345.5 606.5 383.5C607.1 421.4 607.4 549.1 608.1 561.8C608.7 574.6 609.0 491.1 609.6 447.2C610.2 403.3 610.5 362.4 611.2 342.2C611.8 322.0 612.1 321.3 612.7 346.1C613.3 371.0 613.6 439.3 614.2 466.3C614.9 493.3 615.2 485.7 615.8 481.2C616.4 476.8 616.7 424.9 617.3 444.0C618.0 463.0 618.3 550.0 618.9 576.3C619.5 602.6 619.8 574.7 620.4 575.3C621.1 575.8 621.4 612.7 622.0 579.1C622.6 545.4 622.9 419.1 623.5 407.0C624.1 395.0 624.5 509.8 625.1 518.9C625.7 527.9 626.0 454.8 626.6 452.2C627.2 449.6 627.5 502.6 628.2 505.7C628.8 508.9 629.1 451.0 629.7 467.8C630.3 484.6 630.6 558.3 631.3 589.6C631.9 620.8 632.2 680.2 632.8 624.1C633.4 568.0 633.7 330.9 634.4 309.1C635.0 287.3 635.3 456.2 635.9 515.2C636.5 574.1 636.8 620.9 637.4 603.8C638.1 586.7 638.4 474.7 639.0 429.6C639.6 384.5 639.9 346.9 640.5 378.5C641.2 410.0 641.5 574.6 642.1 587.2C642.7 599.8 643.0 453.8 643.6 441.4C644.3 428.9 644.6 519.6 645.2 524.8C645.8 529.9 646.1 445.6 646.7 467.1C647.4 488.5 647.7 599.9 648.3 632.1C648.9 664.2 649.2 691.9 649.8 627.8C650.4 563.6 650.8 366.4 651.4 311.3C652.0 256.3 652.3 319.1 652.9 352.4C653.5 385.8 653.8 458.3 654.5 478.0C655.1 497.8 655.4 436.4 656.0 451.3C656.6 466.1 656.9 566.4 657.6 552.3C658.2 538.3 658.5 392.0 659.1 381.2C659.7 370.3 660.0 509.1 660.7 498.0C661.3 486.9 661.6 348.4 662.2 325.8C662.8 303.3 663.1 376.7 663.7 385.1C664.4 393.6 664.7 381.0 665.3 368.1C665.9 355.1 666.2 282.9 666.8 320.2C667.5 357.6 667.8 493.6 668.4 554.9C669.0 616.1 669.3 622.8 669.9 626.3C670.6 629.8 670.9 581.8 671.5 572.4C672.1 562.9 672.4 571.3 673.0 579.1C673.6 586.8 674.0 602.6 674.6 611.2C675.2 619.8 675.5 653.3 676.1 622.0C676.7 590.7 677.1 508.7 677.7 454.5C678.3 400.3 678.6 344.4 679.2 350.9C679.8 357.5 680.1 492.4 680.8 487.3C681.4 482.2 681.7 355.5 682.3 325.6C682.9 295.7 683.2 279.5 683.9 337.9C684.5 396.3 684.8 597.0 685.4 617.6C686.0 638.3 686.3 463.1 687.0 441.1C687.6 419.0 687.9 475.8 688.5 507.4C689.1 539.1 689.4 636.4 690.0 599.2C690.7 562.0 691.0 330.7 691.6 321.6C692.2 312.5 692.5 527.7 693.1 553.8C693.8 579.9 694.1 477.5 694.7 452.2C695.3 426.8 695.6 452.9 696.2 427.0C696.9 401.1 697.2 324.5 697.8 322.6C698.4 320.6 698.7 380.1 699.3 417.4C699.9 454.6 700.3 494.2 700.9 508.8C701.5 523.5 701.8 475.1 702.4 490.6C703.0 506.0 703.4 620.3 704.0 586.0C704.6 551.8 704.9 374.5 705.5 319.5C706.1 264.4 706.4 261.7 707.1 310.9C707.7 360.1 708.0 502.5 708.6 565.5C709.2 628.6 709.5 628.3 710.2 626.1C710.8 623.8 711.1 575.0 711.7 554.2C712.3 533.5 712.6 565.2 713.3 522.4C713.9 479.7 714.2 376.9 714.8 340.3C715.4 303.8 715.7 335.4 716.3 339.7C717.0 344.0 717.3 305.3 717.9 362.0C718.5 418.7 718.8 619.9 719.4 623.3C720.1 626.7 720.4 422.6 721.0 378.8C721.6 335.0 721.9 394.9 722.5 404.2C723.2 413.4 723.5 443.2 724.1 425.0C724.7 406.7 725.0 273.9 725.6 313.0C726.2 352.0 726.6 564.8 727.2 620.4C727.8 676.0 728.1 637.2 728.7 591.0C729.3 544.7 729.7 441.7 730.3 389.2C730.9 336.6 731.2 323.0 731.8 328.2C732.4 333.4 732.7 372.6 733.4 415.0C734.0 457.4 734.3 534.4 734.9 540.0C735.5 545.7 735.8 473.6 736.5 443.3C737.1 412.9 737.4 356.1 738.0 388.2C738.6 420.4 738.9 575.3 739.6 604.0C740.2 632.7 740.5 541.8 741.1 531.7C741.7 521.7 742.0 540.6 742.6 553.9C743.3 567.1 743.6 612.6 744.2 597.8C744.8 583.0 745.1 482.6 745.7 479.7C746.4 476.7 746.7 567.0 747.3 583.1C747.9 599.2 748.2 558.3 748.8 560.0C749.5 561.7 749.8 620.6 750.4 591.5C751.0 562.5 751.3 406.1 751.9 414.8C752.5 423.4 752.9 637.3 753.5 634.7C754.1 632.1 754.4 413.7 755.0 401.7C755.6 389.6 756.0 529.3 756.6 574.3C757.2 619.4 757.5 675.4 758.1 626.9C758.7 578.5 759.0 344.3 759.7 332.1C760.3 319.9 760.6 566.3 761.2 565.9C761.8 565.5 762.1 372.7 762.8 330.0C763.4 287.2 763.7 349.2 764.3 352.2C764.9 355.2 765.2 296.9 765.9 344.9C766.5 393.0 766.8 563.4 767.4 592.6C768.0 621.8 768.3 488.1 768.9 490.9C769.6 493.8 769.9 638.6 770.5 606.8C771.1 574.9 771.4 381.0 772.0 331.7C772.7 282.4 773.0 340.4 773.6 360.3C774.2 380.2 774.5 405.3 775.1 431.0C775.8 456.8 776.1 470.2 776.7 489.3C777.3 508.4 777.6 551.0 778.2 526.5C778.8 502.0 779.2 375.8 779.8 366.7C780.4 357.5 780.7 468.0 781.3 480.9C781.9 493.8 782.2 409.0 782.9 431.1C783.5 453.3 783.8 564.8 784.4 591.6C785.0 618.5 785.3 559.9 786.0 565.6C786.6 571.2 786.9 652.6 787.5 620.1C788.1 587.5 788.4 435.7 789.1 402.8C789.7 370.0 790.0 418.2 790.6 455.8C791.2 493.5 791.5 612.0 792.1 591.0C792.8 570.0 793.1 358.9 793.7 350.9C794.3 342.8 794.6 520.4 795.2 550.8C795.9 581.1 796.2 495.4 796.8 502.7C797.4 510.0 797.7 578.1 798.3 587.4C799.0 596.7 799.3 594.4 799.9 549.2C800.5 504.0 800.8 365.4 801.4 361.2C802.1 357.0 802.4 483.8 803.0 528.2C803.6 572.7 803.9 593.7 804.5 583.4C805.1 573.0 805.5 486.4 806.1 476.5C806.7 466.5 807.0 560.9 807.6 533.7C808.2 506.4 808.5 326.7 809.2 340.2C809.8 353.7 810.1 606.1 810.7 601.1C811.3 596.1 811.6 311.4 812.3 315.2C812.9 319.0 813.2 614.5 813.8 620.1C814.4 625.6 814.7 383.3 815.4 342.9C816.0 302.4 816.3 372.6 816.9 417.8C817.5 463.1 817.8 556.4 818.4 569.0C819.1 581.6 819.4 485.9 820.0 481.0C820.6 476.0 820.9 529.7 821.5 544.2C822.2 558.7 822.5 548.0 823.1 553.6C823.7 559.2 824.0 579.2 824.6 572.2C825.3 565.1 825.6 570.6 826.2 518.4C826.8 466.2 827.1 353.0 827.7 311.1C828.3 269.2 828.7 304.4 829.3 308.8C829.9 313.1 830.2 273.4 830.8 332.9C831.4 392.5 831.8 564.5 832.4 606.6C833.0 648.6 833.3 596.0 833.9 543.1C834.5 490.3 834.8 327.1 835.5 342.5C836.1 357.8 836.4 608.6 837.0 619.8C837.6 631.1 837.9 414.2 838.6 398.6C839.2 383.0 839.5 558.5 840.1 541.8C840.7 525.1 841.0 296.9 841.7 315.2C842.3 333.6 842.6 622.2 843.2 633.6C843.8 644.9 844.1 393.5 844.7 372.0C845.4 350.5 845.7 482.0 846.3 526.1C846.9 570.2 847.2 570.1 847.8 592.5C848.5 614.9 848.8 684.0 849.4 638.2C850.0 592.4 850.3 398.3 850.9 363.6C851.6 328.9 851.9 422.0 852.5 464.7C853.1 507.5 853.4 571.4 854.0 577.4C854.6 583.4 855.0 542.9 855.6 494.9C856.2 446.9 856.5 322.9 857.1 337.3C857.7 351.6 858.1 544.1 858.7 566.7C859.3 589.2 859.6 444.6 860.2 449.9C860.8 455.2 861.1 567.3 861.8 593.2C862.4 619.1 862.7 621.1 863.3 579.3C863.9 537.5 864.2 419.2 864.9 384.1C865.5 348.9 865.8 365.6 866.4 403.5C867.0 441.5 867.3 532.0 868.0 573.8C868.6 615.6 868.9 605.4 869.5 612.6C870.1 619.9 870.4 645.0 871.0 609.9C871.7 574.9 872.0 464.6 872.6 437.6C873.2 410.6 873.5 452.9 874.1 475.0C874.8 497.1 875.1 529.1 875.7 548.3C876.3 567.4 876.6 593.1 877.2 570.7C877.9 548.3 878.2 469.5 878.8 436.3C879.4 403.1 879.7 418.0 880.3 404.8C880.9 391.6 881.3 362.2 881.9 370.5C882.5 378.7 882.8 405.8 883.4 446.1C884.0 486.4 884.4 537.7 885.0 572.0C885.6 606.2 885.9 652.2 886.5 617.1C887.1 582.0 887.4 419.2 888.1 396.5C888.7 373.9 889.0 503.2 889.6 503.9C890.2 504.6 890.5 376.9 891.2 400.2C891.8 423.5 892.1 626.4 892.7 620.5C893.3 614.7 893.6 389.3 894.3 370.8C894.9 352.3 895.2 530.1 895.8 528.0C896.4 525.9 896.7 395.4 897.3 360.4C898.0 325.4 898.3 329.9 898.9 353.0C899.5 376.0 899.8 419.7 900.4 475.8C901.1 532.0 901.4 661.3 902.0 633.7C902.6 606.2 902.9 368.3 903.5 337.8C904.2 307.3 904.5 478.7 905.1 481.2C905.7 483.8 906.0 336.6 906.6 350.5C907.2 364.4 907.6 505.4 908.2 550.8C908.8 596.2 909.1 614.7 909.7 577.3C910.3 539.9 910.7 375.8 911.3 363.8C911.9 351.9 912.2 473.3 912.8 517.5C913.4 561.6 913.7 585.1 914.4 584.8C915.0 584.5 915.3 544.6 915.9 516.1C916.5 487.6 916.8 417.9 917.5 442.1C918.1 466.4 918.4 632.4 919.0 637.3C919.6 642.3 919.9 496.1 920.6 466.9C921.2 437.8 921.5 491.2 922.1 491.4C922.7 491.7 923.0 446.8 923.6 468.3C924.3 489.8 924.6 612.1 925.2 598.9C925.8 585.8 926.1 448.6 926.7 402.5C927.4 356.5 927.7 378.8 928.3 368.8C928.9 358.8 929.2 319.9 929.8 352.6C930.5 385.4 930.8 522.5 931.4 532.7C932.0 542.9 932.6 429.5 932.9 403.7" stroke="#ff00ff"/>
<path d="M159.5 638.9L192.0 638.9C192.3 589.2 193.0 394.4 193.6 390.4C194.3 386.3 194.6 626.7 195.2 618.6C195.8 610.6 196.1 409.3 196.7 350.2C197.4 291.2 197.7 298.3 198.3 323.3C198.9 348.3 199.2 446.1 199.8 475.2C200.5 504.4 200.8 471.5 201.4 469.1C202.0 466.7 202.3 465.0 202.9 463.4C203.5 461.8 203.9 427.4 204.5 461.2C205.1 494.9 205.4 660.5 206.0 632.0C206.6 603.6 206.9 332.3 207.6 318.9C208.2 305.5 208.5 513.0 209.1 564.9C209.7 616.8 210.0 570.5 210.7 578.5C211.3 586.5 211.6 609.4 212.2 604.9C212.8 600.4 213.1 603.3 213.8 556.0C214.4 508.8 214.7 354.0 215.3 368.6C215.9 383.2 216.2 581.2 216.9 628.9C217.5 676.6 217.8 651.2 218.4 607.0C219.0 562.7 219.3 414.2 219.9 407.7C220.6 401.2 220.9 529.3 221.5 574.3C222.1 619.4 222.4 659.8 223.0 633.0C223.7 606.3 224.0 477.6 224.6 440.6C225.2 403.7 225.5 443.1 226.1 448.2C226.8 453.3 227.1 474.3 227.7 465.9C228.3 457.6 228.6 378.7 229.2 406.5C229.8 434.3 230.2 615.9 230.8 604.8C231.4 593.8 231.7 391.9 232.3 351.3C232.9 310.7 233.2 347.2 233.9 401.7C234.5 456.2 234.8 584.6 235.4 623.9C236.0 663.2 236.3 627.8 237.0 598.2C237.6 568.5 237.9 500.6 238.5 475.6C239.1 450.6 239.4 459.1 240.1 473.3C240.7 487.4 241.0 521.3 241.6 546.4C242.2 571.4 242.5 606.8 243.1 598.5C243.8 590.2 244.1 505.7 244.7 504.7C245.3 503.7 245.6 605.9 246.2 593.6C246.9 581.3 247.2 491.0 247.8 443.1C248.4 395.2 248.7 324.7 249.3 354.1C250.0 383.5 250.3 571.1 250.9 590.2C251.5 609.2 251.8 489.1 252.4 449.4C253.1 409.8 253.4 364.9 254.0 392.0C254.6 419.0 254.9 589.8 255.5 584.5C256.1 579.3 256.5 416.8 257.1 365.7C257.7 314.5 258.0 299.9 258.6 328.8C259.2 357.7 259.5 476.1 260.2 510.3C260.8 544.5 261.1 529.6 261.7 499.8C262.3 470.0 262.6 368.1 263.3 361.1C263.9 354.2 264.2 435.7 264.8 465.0C265.4 494.4 265.7 535.5 266.4 508.0C267.0 480.5 267.3 352.8 267.9 327.6C268.5 302.3 268.8 342.1 269.4 381.9C270.1 421.8 270.4 491.4 271.0 526.9C271.6 562.4 271.9 559.1 272.5 559.4C273.2 559.6 273.5 541.0 274.1 528.0C274.7 515.1 275.0 537.5 275.6 494.8C276.3 452.1 276.6 338.7 277.2 314.4C277.8 290.0 278.1 368.3 278.7 372.8C279.3 377.4 279.7 337.7 280.3 337.0C280.9 336.3 281.2 365.0 281.8 369.3C282.4 373.6 282.8 308.2 283.4 358.5C284.0 408.9 284.3 599.3 284.9 621.1C285.5 643.0 285.8 527.6 286.5 467.8C287.1 407.9 287.4 349.7 288.0 322.1C288.6 294.5 288.9 283.0 289.6 329.9C290.2 376.7 290.5 522.5 291.1 556.4C291.7 590.3 292.0 524.6 292.7 499.3C293.3 473.9 293.6 425.8 294.2 429.6C294.8 433.4 295.1 511.6 295.7 518.3C296.4 525.1 296.7 443.8 297.3 463.3C297.9 482.8 298.2 609.5 298.8 616.0C299.5 622.4 299.8 524.5 300.4 495.6C301.0 466.8 301.3 444.7 301.9 471.9C302.6 499.2 302.9 607.8 303.5 632.0C304.1 656.1 304.4 655.5 305.0 592.8C305.6 530.0 306.0 360.3 306.6 318.2C307.2 276.0 307.5 379.9 308.1 382.0C308.7 384.2 309.1 319.5 309.7 329.0C310.3 338.5 310.6 421.0 311.2 429.4C311.8 437.9 312.1 387.8 312.8 371.2C313.4 354.6 313.7 351.4 314.3 346.4C314.9 341.4 315.2 290.1 315.9 346.3C316.5 402.5 316.8 611.4 317.4 627.5C318.0 643.6 318.3 442.0 319.0 426.7C319.6 411.4 319.9 553.4 320.5 551.0C321.1 548.5 321.4 415.0 322.0 414.5C322.7 414.0 323.0 539.4 323.6 548.4C324.2 557.4 324.5 502.6 325.1 459.5C325.8 416.5 326.1 338.4 326.7 333.2C327.3 327.9 327.6 388.8 328.2 433.4C328.9 478.0 329.2 549.3 329.8 556.0C330.4 562.7 330.7 478.9 331.3 466.8C331.9 454.7 332.3 523.9 332.9 495.4C333.5 467.0 333.8 314.7 334.4 324.4C335.0 334.1 335.4 501.1 336.0 543.8C336.6 586.5 336.9 561.7 337.5 537.9C338.1 514.0 338.4 412.5 339.1 424.7C339.7 437.0 340.0 595.5 340.6 599.0C341.2 602.6 341.5 497.6 342.2 442.3C342.8 387.0 343.1 317.3 343.7 322.7C344.3 328.0 344.6 423.5 345.3 468.9C345.9 514.4 346.2 547.0 346.8 550.1C347.4 553.2 347.7 502.2 348.3 484.6C349.0 467.1 349.3 441.3 349.9 462.3C350.5 483.3 350.8 562.7 351.4 589.8C352.1 616.9 352.4 596.7 353.0 597.9C353.6 599.0 353.9 606.6 354.5 595.4C355.2 584.2 355.5 560.0 356.1 541.8C356.7 523.6 357.0 504.1 357.6 504.4C358.2 504.8 358.6 532.7 359.2 543.5C359.8 554.3 360.1 545.1 360.7 558.4C361.3 571.6 361.6 629.8 362.3 609.8C362.9 589.8 363.2 507.9 363.8 458.2C364.4 408.5 364.7 365.3 365.4 361.1C366.0 356.9 366.3 419.3 366.9 437.1C367.5 455.0 367.8 453.0 368.5 450.3C369.1 447.6 369.4 399.4 370.0 423.8C370.6 448.2 370.9 576.3 371.6 572.3C372.2 568.4 372.5 421.1 373.1 403.9C373.7 386.8 374.0 475.7 374.6 486.4C375.3 497.2 375.6 467.7 376.2 457.6C376.8 447.6 377.1 431.0 377.7 436.2C378.4 441.4 378.7 463.8 379.3 483.8C379.9 503.8 380.2 521.2 380.8 536.2C381.5 551.2 381.8 552.9 382.4 558.7C383.0 564.6 383.3 583.4 383.9 565.6C384.5 547.7 384.9 480.1 385.5 469.4C386.1 458.7 386.4 517.0 387.0 512.1C387.6 507.3 387.9 420.6 388.6 445.2C389.2 469.7 389.5 619.5 390.1 634.9C390.7 650.3 391.0 578.5 391.7 522.2C392.3 466.0 392.6 346.3 393.2 353.8C393.8 361.4 394.1 539.8 394.8 560.0C395.4 580.2 395.7 471.5 396.3 454.8C396.9 438.0 397.2 458.4 397.8 476.3C398.5 494.3 398.8 577.5 399.4 544.7C400.0 511.8 400.3 313.0 400.9 312.3C401.6 311.6 401.9 526.9 402.5 541.1C403.1 555.4 403.4 374.4 404.0 383.5C404.7 392.6 405.0 539.8 405.6 586.4C406.2 633.1 406.5 663.9 407.1 616.8C407.8 569.6 408.1 375.4 408.7 350.7C409.3 326.0 409.6 439.8 410.2 493.3C410.8 546.9 411.2 614.9 411.8 618.3C412.4 621.8 412.7 535.6 413.3 510.6C413.9 485.6 414.2 516.4 414.9 493.4C415.5 470.4 415.8 373.8 416.4 395.6C417.0 417.5 417.3 569.0 418.0 602.7C418.6 636.5 418.9 620.6 419.5 564.4C420.1 508.2 420.4 355.6 421.1 321.6C421.7 287.6 422.0 341.3 422.6 394.6C423.2 447.8 423.5 561.2 424.1 587.8C424.8 614.3 425.1 540.5 425.7 527.4C426.3 514.3 426.6 544.7 427.2 522.3C427.9 499.9 428.2 433.0 428.8 415.5C429.4 398.1 429.7 446.6 430.3 435.0C431.0 423.5 431.3 371.3 431.9 357.8C432.5 344.2 432.8 345.3 433.4 367.3C434.0 389.3 434.4 462.2 435.0 467.6C435.6 473.1 435.9 409.5 436.5 394.5C437.1 379.6 437.5 394.4 438.1 393.0C438.7 391.7 439.0 369.9 439.6 387.6C440.2 405.3 440.5 483.4 441.2 481.7C441.8 480.0 442.1 394.7 442.7 379.3C443.3 363.8 443.6 413.1 444.3 404.5C444.9 395.9 445.2 297.9 445.8 336.4C446.4 374.8 446.7 593.9 447.4 596.8C448.0 599.7 448.3 342.7 448.9 350.9C449.5 359.0 449.8 630.5 450.4 637.4C451.1 644.4 451.4 424.1 452.0 385.6C452.6 347.2 452.9 427.4 453.5 445.1C454.2 462.8 454.5 499.1 455.1 474.2C455.7 449.3 456.0 325.4 456.6 320.5C457.3 315.6 457.6 413.7 458.2 449.7C458.8 485.7 459.1 514.7 459.7 500.6C460.3 486.6 460.7 409.8 461.3 379.7C461.9 349.6 462.2 338.6 462.8 350.2C463.4 361.9 463.8 405.4 464.4 438.0C465.0 470.6 465.3 503.1 465.9 513.3C466.5 523.6 466.8 494.5 467.5 489.3C468.1 484.1 468.4 505.3 469.0 487.4C469.6 469.5 469.9 388.8 470.6 399.7C471.2 410.6 471.5 520.0 472.1 542.0C472.7 564.0 473.0 527.0 473.7 509.7C474.3 492.3 474.6 454.8 475.2 455.2C475.8 455.6 476.1 496.3 476.7 511.7C477.4 527.1 477.7 559.0 478.3 532.4C478.9 505.7 479.2 413.5 479.8 378.6C480.5 343.7 480.8 338.9 481.4 357.9C482.0 376.9 482.3 446.8 482.9 473.6C483.6 500.5 483.9 471.2 484.5 492.0C485.1 512.9 485.4 568.7 486.0 577.9C486.6 587.2 487.0 535.7 487.6 538.3C488.2 540.9 488.5 608.9 489.1 590.9C489.7 573.0 490.1 477.4 490.7 448.6C491.3 419.7 491.6 414.3 492.2 446.5C492.8 478.8 493.1 632.2 493.8 609.8C494.4 587.4 494.7 350.2 495.3 334.5C495.9 318.9 496.2 526.7 496.9 531.7C497.5 536.8 497.8 394.0 498.4 359.9C499.0 325.9 499.3 369.3 500.0 361.7C500.6 354.0 500.9 279.9 501.5 321.8C502.1 363.7 502.4 536.1 503.0 571.3C503.7 606.5 504.0 544.5 504.6 497.8C505.2 451.1 505.5 310.2 506.1 337.7C506.8 365.2 507.1 578.2 507.7 635.3C508.3 692.4 508.6 659.8 509.2 623.2C509.9 586.5 510.2 481.8 510.8 452.0C511.4 422.3 511.7 497.9 512.3 474.4C512.9 450.9 513.3 352.8 513.9 334.5C514.5 316.2 514.8 357.8 515.4 383.1C516.0 408.3 516.3 475.6 517.0 460.8C517.6 445.9 517.9 307.3 518.5 308.7C519.1 310.1 519.4 435.9 520.1 467.7C520.7 499.5 521.0 478.9 521.6 467.8C522.2 456.7 522.5 403.8 523.2 412.2C523.8 420.7 524.1 488.4 524.7 510.0C525.3 531.7 525.6 534.1 526.3 520.6C526.9 507.0 527.2 441.7 527.8 442.2C528.4 442.6 528.7 546.1 529.3 522.7C530.0 499.4 530.3 346.9 530.9 325.4C531.5 303.9 531.8 387.2 532.4 415.1C533.1 443.1 533.4 427.0 534.0 465.2C534.6 503.3 534.9 596.2 535.5 606.1C536.2 616.1 536.5 535.0 537.1 515.0C537.7 495.1 538.0 518.6 538.6 506.3C539.2 493.9 539.6 464.7 540.2 453.2C540.8 441.8 541.1 470.1 541.7 449.0C542.3 427.9 542.6 373.7 543.3 347.9C543.9 322.1 544.2 293.9 544.8 319.9C545.4 345.9 545.7 443.2 546.4 477.9C547.0 512.6 547.3 502.4 547.9 493.3C548.5 484.2 548.8 469.1 549.5 432.3C550.1 395.5 550.4 290.8 551.0 309.4C551.6 328.0 551.9 494.5 552.5 525.3C553.2 556.2 553.5 494.8 554.1 463.5C554.7 432.3 555.0 345.3 555.6 369.0C556.3 392.8 556.6 549.5 557.2 582.4C557.8 615.3 558.1 587.1 558.7 533.7C559.4 480.2 559.7 348.9 560.3 315.3C560.9 281.7 561.2 334.9 561.8 365.7C562.5 396.5 562.8 422.0 563.4 469.3C564.0 516.7 564.3 627.6 564.9 602.3C565.5 577.0 565.9 381.4 566.5 343.0C567.1 304.7 567.4 405.8 568.0 410.7C568.6 415.6 568.9 387.4 569.6 367.5C570.2 347.6 570.5 315.8 571.1 311.4C571.7 306.9 572.0 307.5 572.7 345.1C573.3 382.8 573.6 451.3 574.2 499.7C574.8 548.1 575.1 578.5 575.8 587.1C576.4 595.8 576.7 566.5 577.3 543.0C577.9 519.5 578.2 483.9 578.8 469.7C579.5 455.4 579.8 450.5 580.4 471.9C581.0 493.3 581.3 555.3 581.9 576.6C582.6 598.0 582.9 607.8 583.5 578.5C584.1 549.3 584.4 458.3 585.0 430.5C585.7 402.6 586.0 421.1 586.6 439.4C587.2 457.7 587.5 547.9 588.1 522.1C588.7 496.2 589.1 329.0 589.7 310.2C590.3 291.5 590.6 365.4 591.2 428.4C591.8 491.3 592.2 610.0 592.8 624.9C593.4 639.8 593.7 552.1 594.3 502.8C594.9 453.5 595.2 371.5 595.9 378.4C596.5 385.3 596.8 531.0 597.4 537.4C598.0 543.8 598.3 390.4 599.0 410.4C599.6 430.5 599.9 612.0 600.5 637.6C601.1 663.1 601.4 593.6 602.1 538.2C602.7 482.7 603.0 379.0 603.6 360.3C604.2 341.7 604.5 433.5 605.1 445.0C605.8 456.5 606.1 392.1 606.7 417.9C607.3 443.7 607.6 562.6 608.2 573.8C608.9 585.1 609.2 497.8 609.8 474.2C610.4 450.6 610.7 440.6 611.3 455.9C612.0 471.2 612.3 557.1 612.9 550.9C613.5 544.7 613.8 442.5 614.4 424.9C615.0 407.4 615.4 486.3 616.0 463.1C616.6 439.9 616.9 311.9 617.5 309.1C618.1 306.3 618.5 410.1 619.1 448.9C619.7 487.6 620.0 472.9 620.6 502.9C621.2 532.9 621.5 581.9 622.2 598.7C622.8 615.5 623.1 629.2 623.7 587.0C624.3 544.8 624.6 384.4 625.3 387.7C625.9 391.0 626.2 560.0 626.8 603.6C627.4 647.2 627.7 610.0 628.4 605.8C629.0 601.5 629.3 610.4 629.9 582.5C630.5 554.5 630.8 509.2 631.4 466.1C632.1 422.9 632.4 372.6 633.0 366.6C633.6 360.6 633.9 435.0 634.5 436.1C635.2 437.2 635.5 335.7 636.1 372.1C636.7 408.5 637.0 565.8 637.6 618.3C638.3 670.8 638.6 681.6 639.2 634.7C639.8 587.9 640.1 404.5 640.7 384.0C641.3 363.5 641.7 528.4 642.3 532.1C642.9 535.7 643.2 404.3 643.8 402.2C644.4 400.2 644.8 485.7 645.4 521.8C646.0 558.0 646.3 577.1 646.9 582.8C647.5 588.6 647.8 546.1 648.5 550.7C649.1 555.3 649.4 648.1 650.0 606.0C650.6 563.8 650.9 371.9 651.6 339.9C652.2 308.0 652.5 409.6 653.1 446.3C653.7 483.0 654.0 514.7 654.7 523.5C655.3 532.2 655.6 492.5 656.2 490.1C656.8 487.7 657.1 485.2 657.7 511.3C658.4 537.5 658.7 654.2 659.3 620.8C659.9 587.4 660.2 379.3 660.8 344.3C661.5 309.4 661.8 450.7 662.4 446.2C663.0 441.6 663.3 312.0 663.9 321.5C664.6 331.0 664.9 471.0 665.5 493.5C666.1 515.9 666.4 421.2 667.0 433.8C667.6 446.3 668.0 518.3 668.6 556.4C669.2 594.5 669.5 669.4 670.1 624.3C670.7 579.2 671.0 384.6 671.7 331.0C672.3 277.4 672.6 315.4 673.2 356.2C673.8 396.9 674.1 537.7 674.8 534.8C675.4 531.8 675.7 374.7 676.3 341.6C676.9 308.4 677.2 329.7 677.9 369.0C678.5 408.4 678.8 524.3 679.4 538.4C680.0 552.5 680.3 483.0 681.0 439.6C681.6 396.2 681.9 314.3 682.5 321.4C683.1 328.4 683.4 474.3 684.0 475.0C684.7 475.7 685.0 308.1 685.6 324.8C686.2 341.5 686.5 521.5 687.1 558.5C687.8 595.6 688.1 541.4 688.7 509.9C689.3 478.5 689.6 390.1 690.2 401.3C690.9 412.4 691.2 538.6 691.8 565.6C692.4 592.7 692.7 579.9 693.3 536.6C693.9 493.4 694.3 361.0 694.9 349.4C695.5 337.8 695.8 473.2 696.4 478.7C697.0 484.1 697.3 360.7 698.0 376.7C698.6 392.6 698.9 517.4 699.5 558.4C700.1 599.3 700.4 589.1 701.1 581.5C701.7 573.9 702.0 521.2 702.6 520.3C703.2 519.5 703.5 617.7 704.2 577.2C704.8 536.6 705.1 324.4 705.7 317.6C706.3 310.7 706.6 515.6 707.2 542.7C707.9 569.8 708.2 441.5 708.8 453.1C709.4 464.8 709.7 599.0 710.3 600.9C711.0 602.7 711.3 480.2 711.9 462.3C712.5 444.4 712.8 502.7 713.4 511.3C714.1 520.0 714.4 484.3 715.0 505.5C715.6 526.7 715.9 598.7 716.5 617.2C717.2 635.7 717.5 648.4 718.1 598.1C718.7 547.8 719.0 380.8 719.6 365.7C720.2 350.7 720.6 484.3 721.2 522.7C721.8 561.1 722.1 547.3 722.7 557.9C723.3 568.4 723.6 578.2 724.3 575.6C724.9 573.1 725.2 548.1 725.8 545.1C726.4 542.0 726.7 544.0 727.4 560.4C728.0 576.9 728.3 655.6 728.9 627.3C729.5 599.1 729.8 439.4 730.5 419.2C731.1 398.9 731.4 492.3 732.0 525.9C732.6 559.6 732.9 611.4 733.5 587.3C734.2 563.2 734.5 401.2 735.1 405.4C735.7 409.6 736.0 579.4 736.6 608.2C737.3 637.1 737.6 598.8 738.2 549.7C738.8 500.6 739.1 353.3 739.7 362.7C740.4 372.1 740.7 570.7 741.3 596.6C741.9 622.5 742.2 539.1 742.8 492.2C743.4 445.4 743.8 386.2 744.4 362.3C745.0 338.4 745.3 327.9 745.9 372.7C746.5 417.4 746.9 556.3 747.5 586.2C748.1 616.1 748.4 559.4 749.0 522.1C749.6 484.9 749.9 401.5 750.6 399.9C751.2 398.3 751.5 529.8 752.1 514.2C752.7 498.6 753.0 310.7 753.7 321.9C754.3 333.1 754.6 569.6 755.2 570.0C755.8 570.5 756.1 344.0 756.8 324.4C757.4 304.7 757.7 424.0 758.3 471.9C758.9 519.8 759.2 560.2 759.8 563.7C760.5 567.1 760.8 482.8 761.4 489.1C762.0 495.5 762.3 612.3 762.9 595.6C763.6 578.8 763.9 413.8 764.5 405.2C765.1 396.6 765.4 565.4 766.0 552.6C766.7 539.8 767.0 363.0 767.6 341.3C768.2 319.7 768.5 409.4 769.1 444.5C769.7 479.7 770.1 494.6 770.7 517.2C771.3 539.7 771.6 573.3 772.2 557.4C772.8 541.5 773.2 435.5 773.8 437.7C774.4 439.9 774.7 586.0 775.3 568.6C775.9 551.1 776.2 344.4 776.9 350.3C777.5 356.3 777.8 574.5 778.4 598.2C779.0 622.0 779.3 497.0 780.0 469.2C780.6 441.4 780.9 443.4 781.5 459.4C782.1 475.5 782.4 564.6 783.1 549.4C783.7 534.3 784.0 391.2 784.6 383.6C785.2 376.1 785.5 504.0 786.1 511.6C786.8 519.1 787.1 433.5 787.7 421.4C788.3 409.3 788.6 428.2 789.2 451.1C789.9 474.1 790.2 524.3 790.8 536.1C791.4 547.8 791.7 495.0 792.3 509.9C793.0 524.8 793.3 596.3 793.9 610.4C794.5 624.5 794.8 630.9 795.4 580.3C796.0 529.7 796.4 366.9 797.0 357.4C797.6 347.9 797.9 520.2 798.5 532.7C799.1 545.1 799.5 405.6 800.1 419.7C800.7 433.7 801.0 596.2 801.6 602.8C802.2 609.5 802.5 469.7 803.2 453.0C803.8 436.3 804.1 515.2 804.7 519.3C805.3 523.4 805.6 469.1 806.3 473.4C806.9 477.6 807.2 511.9 807.8 540.6C808.4 569.4 808.7 618.0 809.4 617.1C810.0 616.1 810.3 546.5 810.9 535.9C811.5 525.3 811.8 551.7 812.4 564.0C813.1 576.2 813.4 629.6 814.0 597.1C814.6 564.7 814.9 412.2 815.5 401.8C816.2 391.5 816.5 524.8 817.1 545.5C817.7 566.2 818.0 546.9 818.6 505.5C819.3 464.0 819.6 362.8 820.2 338.3C820.8 313.7 821.1 380.8 821.7 382.6C822.3 384.3 822.7 352.6 823.3 346.9C823.9 341.2 824.2 304.4 824.8 354.0C825.4 403.7 825.7 556.5 826.4 595.1C827.0 633.8 827.3 540.6 827.9 547.4C828.5 554.2 828.8 655.7 829.5 629.1C830.1 602.4 830.4 456.0 831.0 414.1C831.6 372.2 831.9 397.7 832.6 419.4C833.2 441.1 833.5 506.0 834.1 522.6C834.7 539.2 835.0 522.8 835.7 502.4C836.3 482.1 836.6 439.9 837.2 420.9C837.8 401.9 838.1 380.4 838.7 407.6C839.4 434.8 839.7 566.5 840.3 556.7C840.9 546.9 841.2 365.7 841.8 358.8C842.5 352.0 842.8 508.0 843.4 522.4C844.0 536.8 844.3 419.6 844.9 430.9C845.6 442.2 845.9 544.8 846.5 578.8C847.1 612.8 847.4 649.1 848.0 600.7C848.6 552.4 849.0 377.9 849.6 337.0C850.2 296.1 850.5 382.9 851.1 396.1C851.7 409.3 852.0 357.3 852.7 403.2C853.3 449.1 853.6 581.0 854.2 625.5C854.8 670.0 855.1 633.7 855.8 625.6C856.4 617.6 856.7 595.7 857.3 585.3C857.9 574.8 858.2 582.7 858.9 573.3C859.5 564.0 859.8 550.7 860.4 538.6C861.0 526.5 861.3 495.5 861.9 512.9C862.6 530.4 862.9 621.3 863.5 625.9C864.1 630.5 864.4 575.7 865.0 536.0C865.7 496.4 866.0 419.1 866.6 427.8C867.2 436.4 867.5 592.7 868.1 579.4C868.8 566.1 869.1 387.1 869.7 361.2C870.3 335.4 870.6 442.2 871.2 450.3C871.9 458.4 872.2 381.0 872.8 401.9C873.4 422.7 873.7 536.0 874.3 554.6C874.9 573.3 875.3 523.4 875.9 495.0C876.5 466.6 876.8 406.9 877.4 412.5C878.0 418.2 878.3 478.2 879.0 523.4C879.6 568.6 879.9 670.6 880.5 638.5C881.1 606.4 881.4 414.2 882.1 363.0C882.7 311.7 883.0 345.8 883.6 382.1C884.2 418.3 884.5 495.6 885.2 544.2C885.8 592.7 886.1 662.2 886.7 624.6C887.3 587.1 887.6 393.7 888.2 356.4C888.9 319.0 889.2 384.6 889.8 438.0C890.4 491.3 890.7 599.2 891.3 623.2C892.0 647.2 892.3 562.2 892.9 558.0C893.5 553.8 893.8 638.3 894.4 602.1C895.1 565.9 895.4 383.7 896.0 377.1C896.6 370.6 896.9 577.5 897.5 569.4C898.1 561.2 898.5 372.1 899.1 336.4C899.7 300.7 900.0 336.2 900.6 391.0C901.2 445.8 901.6 606.7 902.2 610.4C902.8 614.0 903.1 429.5 903.7 409.1C904.3 388.8 904.6 512.2 905.3 508.7C905.9 505.2 906.2 420.4 906.8 391.6C907.4 362.8 907.7 333.9 908.4 364.8C909.0 395.6 909.3 497.0 909.9 545.9C910.5 594.7 910.8 653.1 911.5 609.1C912.1 565.1 912.4 348.0 913.0 325.9C913.6 303.8 913.9 497.6 914.5 498.6C915.2 499.7 915.5 348.9 916.1 331.2C916.7 313.5 917.0 397.5 917.6 410.1C918.3 422.8 918.6 403.7 919.2 394.6C919.8 385.4 920.1 357.1 920.7 364.4C921.4 371.7 921.7 406.2 922.3 431.1C922.9 456.1 923.2 451.2 923.8 489.1C924.4 527.1 924.8 637.1 925.4 620.9C926.0 604.7 926.3 432.7 926.9 407.9C927.5 383.2 927.9 484.9 928.5 497.2C929.1 509.5 929.4 502.6 930.0 469.6C930.6 436.5 931.3 359.4 931.6 331.9" stroke="#008000"/>
<path d="M159.5 638.9L192.0 638.9C192.2 588.5 192.5 389.8 193.1 386.9C193.6 384.0 194.0 620.5 194.6 624.4C195.2 628.3 195.5 456.9 196.2 406.5C196.8 356.0 197.1 343.2 197.7 372.4C198.3 401.6 198.6 535.3 199.2 552.5C199.9 569.6 200.2 505.0 200.8 458.2C201.4 411.3 201.7 324.3 202.3 318.3C203.0 312.2 203.3 399.9 203.9 428.0C204.5 456.2 204.8 433.3 205.4 459.0C206.1 484.6 206.4 524.2 207.0 556.3C207.6 588.3 207.9 626.4 208.5 619.2C209.1 612.1 209.5 543.8 210.1 520.5C210.7 497.2 211.0 492.4 211.6 502.7C212.2 513.1 212.5 565.6 213.2 572.2C213.8 578.9 214.1 531.9 214.7 536.2C215.3 540.4 215.6 619.9 216.3 593.7C216.9 567.5 217.2 440.4 217.8 405.1C218.4 369.7 218.7 386.1 219.4 417.2C220.0 448.2 220.3 531.8 220.9 560.2C221.5 588.5 221.8 577.3 222.4 558.9C223.1 540.6 223.4 481.9 224.0 468.4C224.6 455.0 224.9 519.5 225.5 491.7C226.2 463.9 226.5 323.2 227.1 329.4C227.7 335.5 228.0 480.5 228.6 522.6C229.3 564.7 229.6 575.1 230.2 539.9C230.8 504.6 231.1 335.9 231.7 346.3C232.4 356.7 232.7 570.7 233.3 591.9C233.9 613.2 234.2 465.3 234.8 452.6C235.4 439.9 235.8 545.2 236.4 528.5C237.0 511.9 237.3 383.4 237.9 369.2C238.5 355.0 238.8 453.9 239.5 457.5C240.1 461.2 240.4 362.3 241.0 387.3C241.6 412.4 241.9 576.7 242.6 582.9C243.2 589.1 243.5 446.8 244.1 418.4C244.7 390.0 245.0 427.3 245.7 440.9C246.3 454.4 246.6 497.4 247.2 486.3C247.8 475.3 248.1 409.9 248.7 385.5C249.4 361.0 249.7 320.9 250.3 364.0C250.9 407.1 251.2 565.2 251.8 601.0C252.5 636.8 252.8 559.4 253.4 543.2C254.0 526.9 254.3 514.2 254.9 519.6C255.6 525.1 255.9 550.7 256.5 570.6C257.1 590.4 257.4 623.8 258.0 618.9C258.6 614.0 259.0 555.0 259.6 546.0C260.2 536.9 260.5 601.5 261.1 573.7C261.7 545.8 262.1 423.4 262.7 406.8C263.3 390.2 263.6 451.8 264.2 490.7C264.8 529.6 265.1 593.3 265.8 601.5C266.4 609.7 266.7 555.1 267.3 531.6C267.9 508.0 268.2 486.4 268.9 483.9C269.5 481.3 269.8 498.9 270.4 518.8C271.0 538.7 271.3 564.0 272.0 583.3C272.6 602.5 272.9 604.7 273.5 615.1C274.1 625.5 274.4 696.2 275.0 635.3C275.7 574.4 276.0 359.7 276.6 310.7C277.2 261.8 277.5 330.6 278.1 390.7C278.8 450.7 279.1 608.9 279.7 611.1C280.3 613.3 280.6 461.0 281.2 401.7C281.9 342.4 282.2 304.5 282.8 314.7C283.4 324.8 283.7 394.8 284.3 452.4C284.9 510.1 285.3 597.9 285.9 602.9C286.5 607.8 286.8 498.7 287.4 477.2C288.0 455.7 288.4 475.5 289.0 495.2C289.6 515.0 289.9 583.3 290.5 576.1C291.1 568.9 291.4 447.3 292.1 459.3C292.7 471.3 293.0 661.0 293.6 636.1C294.2 611.2 294.5 376.8 295.2 334.7C295.8 292.7 296.1 406.4 296.7 425.7C297.3 445.0 297.6 450.5 298.3 431.3C298.9 412.0 299.2 331.2 299.8 329.6C300.4 327.9 300.7 377.8 301.3 423.0C302.0 468.3 302.3 528.8 302.9 555.7C303.5 582.6 303.8 550.0 304.4 557.5C305.1 565.0 305.4 578.6 306.0 593.0C306.6 607.4 306.9 671.8 307.5 629.7C308.2 587.7 308.5 436.4 309.1 382.7C309.7 329.0 310.0 329.6 310.6 361.2C311.2 392.8 311.6 497.6 312.2 540.9C312.8 584.1 313.1 600.0 313.7 577.4C314.3 554.8 314.7 471.5 315.3 427.8C315.9 384.2 316.2 378.3 316.8 359.2C317.4 340.1 317.7 287.6 318.4 332.4C319.0 377.2 319.3 573.7 319.9 583.1C320.5 592.5 320.8 423.2 321.5 379.4C322.1 335.6 322.4 361.4 323.0 364.2C323.6 367.0 323.9 360.0 324.6 393.4C325.2 426.7 325.5 493.9 326.1 530.8C326.7 567.7 327.0 610.8 327.6 577.8C328.3 544.8 328.6 374.9 329.2 365.9C329.8 356.9 330.1 502.8 330.7 533.0C331.4 563.2 331.7 532.3 332.3 517.0C332.9 501.7 333.2 456.6 333.8 456.6C334.5 456.5 334.8 535.3 335.4 516.7C336.0 498.2 336.3 355.3 336.9 363.9C337.5 372.5 337.9 507.4 338.5 559.7C339.1 612.0 339.4 646.9 340.0 625.2C340.6 603.6 340.9 490.2 341.6 451.4C342.2 412.6 342.5 447.8 343.1 431.1C343.7 414.4 344.0 372.9 344.7 367.8C345.3 362.6 345.6 411.2 346.2 405.5C346.8 399.9 347.1 355.3 347.8 339.5C348.4 323.7 348.7 299.2 349.3 326.4C349.9 353.5 350.2 445.9 350.9 475.4C351.5 504.8 351.8 451.4 352.4 473.7C353.0 495.9 353.3 573.5 353.9 586.8C354.6 600.0 354.9 567.8 355.5 539.8C356.1 511.8 356.4 432.2 357.0 446.7C357.7 461.2 358.0 619.4 358.6 612.3C359.2 605.3 359.5 416.8 360.1 411.3C360.8 405.8 361.1 568.5 361.7 584.7C362.3 600.9 362.6 545.6 363.2 492.3C363.8 439.0 364.2 294.7 364.8 318.1C365.4 341.5 365.7 547.7 366.3 609.2C366.9 670.7 367.2 648.8 367.9 625.6C368.5 602.5 368.8 503.5 369.4 493.5C370.0 483.5 370.3 594.5 371.0 575.8C371.6 557.0 371.9 387.3 372.5 399.8C373.1 412.2 373.4 645.7 374.1 637.9C374.7 630.1 375.0 417.2 375.6 360.8C376.2 304.4 376.5 352.4 377.1 356.0C377.8 359.6 378.1 350.2 378.7 378.6C379.3 407.0 379.6 464.8 380.2 498.2C380.9 531.5 381.2 560.8 381.8 545.2C382.4 529.6 382.7 435.4 383.3 420.0C384.0 404.7 384.3 452.8 384.9 468.7C385.5 484.6 385.8 487.9 386.4 499.6C387.1 511.2 387.4 528.0 388.0 526.9C388.6 525.7 388.9 515.4 389.5 493.8C390.1 472.1 390.5 444.2 391.1 418.6C391.7 392.9 392.0 381.4 392.6 365.7C393.2 349.9 393.5 296.1 394.2 339.9C394.8 383.7 395.1 544.2 395.7 584.5C396.3 624.7 396.6 559.5 397.3 541.1C397.9 522.6 398.2 510.0 398.8 492.3C399.4 474.6 399.7 446.3 400.4 452.5C401.0 458.8 401.3 499.4 401.9 523.7C402.5 548.1 402.8 556.8 403.4 574.2C404.1 591.6 404.4 619.2 405.0 610.7C405.6 602.2 405.9 556.6 406.5 531.8C407.2 507.0 407.5 529.4 408.1 486.6C408.7 443.7 409.0 347.3 409.6 317.6C410.3 288.0 410.6 331.3 411.2 338.3C411.8 345.3 412.1 357.0 412.7 352.7C413.3 348.3 413.7 323.0 414.3 316.6C414.9 310.2 415.2 297.3 415.8 320.8C416.4 344.2 416.8 423.9 417.4 433.9C418.0 443.8 418.3 333.6 418.9 370.6C419.5 407.6 419.8 610.1 420.5 619.0C421.1 627.9 421.4 451.5 422.0 415.1C422.6 378.8 422.9 412.3 423.6 437.4C424.2 462.5 424.5 538.1 425.1 540.6C425.7 543.1 426.0 493.4 426.7 450.0C427.3 406.6 427.6 317.8 428.2 323.7C428.8 329.7 429.1 459.7 429.7 479.9C430.4 500.1 430.7 412.8 431.3 424.8C431.9 436.8 432.2 519.8 432.8 539.9C433.5 560.0 433.8 564.0 434.4 525.3C435.0 486.5 435.3 325.3 435.9 346.1C436.6 367.0 436.9 583.6 437.5 629.6C438.1 675.7 438.4 619.5 439.0 576.4C439.6 533.4 440.0 431.5 440.6 414.4C441.2 397.3 441.5 451.7 442.1 490.9C442.7 530.2 443.1 624.8 443.7 610.7C444.3 596.6 444.6 439.4 445.2 420.4C445.8 401.5 446.1 510.6 446.8 515.8C447.4 521.1 447.7 449.7 448.3 446.8C448.9 443.9 449.2 497.8 449.9 501.2C450.5 504.5 450.8 473.4 451.4 463.6C452.0 453.8 452.3 443.2 453.0 452.1C453.6 460.9 453.9 478.0 454.5 507.8C455.1 537.6 455.4 586.8 456.0 601.1C456.7 615.3 457.0 630.5 457.6 579.2C458.2 527.9 458.5 368.8 459.1 344.5C459.8 320.2 460.1 406.1 460.7 457.6C461.3 509.0 461.6 622.5 462.2 601.7C462.9 581.0 463.2 363.1 463.8 353.7C464.4 344.4 464.7 504.3 465.3 555.0C465.9 605.8 466.3 625.8 466.9 607.5C467.5 589.1 467.8 473.7 468.4 463.3C469.0 453.0 469.4 552.9 470.0 555.7C470.6 558.4 470.9 497.1 471.5 477.0C472.1 457.0 472.4 438.3 473.1 455.6C473.7 473.0 474.0 565.2 474.6 563.9C475.2 562.7 475.5 441.9 476.2 449.5C476.8 457.0 477.1 597.5 477.7 601.5C478.3 605.4 478.6 500.6 479.3 469.1C479.9 437.7 480.2 415.6 480.8 444.2C481.4 472.9 481.7 600.4 482.3 612.3C483.0 624.3 483.3 503.5 483.9 503.9C484.5 504.4 484.8 616.6 485.4 614.6C486.1 612.5 486.4 545.8 487.0 493.5C487.6 441.2 487.9 360.6 488.5 353.3C489.2 345.9 489.5 446.9 490.1 456.8C490.7 466.6 491.0 416.2 491.6 402.5C492.2 388.9 492.6 348.9 493.2 388.5C493.8 428.2 494.1 616.4 494.7 601.0C495.3 585.5 495.6 351.4 496.3 311.2C496.9 271.1 497.2 341.4 497.8 400.2C498.4 459.0 498.7 612.3 499.4 605.1C500.0 597.9 500.3 383.5 500.9 364.3C501.5 345.1 501.8 465.6 502.5 509.2C503.1 552.8 503.4 619.8 504.0 582.2C504.6 544.6 504.9 347.3 505.6 321.4C506.2 295.4 506.5 440.4 507.1 452.7C507.7 464.9 508.0 354.4 508.6 382.6C509.3 410.8 509.6 593.7 510.2 593.6C510.8 593.5 511.1 376.9 511.7 382.2C512.4 387.4 512.7 584.2 513.3 619.8C513.9 655.5 514.2 581.3 514.8 560.5C515.5 539.7 515.8 501.1 516.4 515.7C517.0 530.4 517.3 648.5 517.9 633.8C518.5 619.2 518.9 455.4 519.5 442.3C520.1 429.2 520.4 548.9 521.0 568.4C521.6 587.8 521.9 572.4 522.6 539.7C523.2 507.0 523.5 413.2 524.1 404.9C524.7 396.6 525.0 510.0 525.7 498.0C526.3 486.0 526.6 357.9 527.2 345.0C527.8 332.1 528.1 432.3 528.8 433.4C529.4 434.5 529.7 346.6 530.3 350.4C530.9 354.3 531.2 455.7 531.8 452.7C532.5 449.7 532.8 355.8 533.4 335.4C534.0 315.1 534.3 301.3 534.9 350.9C535.6 400.5 535.9 575.0 536.5 583.3C537.1 591.6 537.4 403.8 538.0 392.3C538.7 380.9 539.0 527.2 539.6 526.0C540.2 524.8 540.5 408.7 541.1 386.3C541.8 363.9 542.1 417.9 542.7 413.8C543.3 409.7 543.6 328.9 544.2 365.8C544.8 402.7 545.2 568.3 545.8 598.3C546.4 628.2 546.7 556.1 547.3 515.5C547.9 474.8 548.2 433.1 548.9 395.0C549.5 357.0 549.8 324.3 550.4 325.3C551.0 326.4 551.3 340.3 552.0 400.2C552.6 460.0 552.9 616.7 553.5 624.5C554.1 632.3 554.4 442.9 555.1 439.2C555.7 435.5 556.0 602.3 556.6 605.9C557.2 609.5 557.5 503.9 558.1 457.4C558.8 410.8 559.1 344.5 559.7 373.3C560.3 402.1 560.6 609.6 561.2 601.5C561.9 593.4 562.2 370.0 562.8 332.8C563.4 295.6 563.7 371.2 564.3 415.6C565.0 459.9 565.3 522.8 565.9 554.7C566.5 586.5 566.8 587.7 567.4 575.0C568.0 562.3 568.4 533.8 569.0 491.1C569.6 448.4 569.9 370.6 570.5 361.7C571.1 352.8 571.5 398.7 572.1 446.6C572.7 494.5 573.0 564.2 573.6 601.3C574.2 638.4 574.5 631.7 575.2 631.9C575.8 632.1 576.1 653.9 576.7 602.3C577.3 550.8 577.6 379.0 578.3 374.1C578.9 369.1 579.2 561.3 579.8 577.6C580.4 593.9 580.7 462.5 581.4 455.6C582.0 448.6 582.3 551.7 582.9 542.9C583.5 534.1 583.8 417.6 584.4 411.6C585.1 405.6 585.4 477.0 586.0 512.9C586.6 548.8 586.9 623.9 587.5 591.2C588.2 558.4 588.5 375.4 589.1 349.3C589.7 323.3 590.0 448.5 590.6 460.8C591.3 473.1 591.6 428.7 592.2 410.8C592.8 393.0 593.1 388.7 593.7 371.6C594.3 354.4 594.7 272.5 595.3 325.1C595.9 377.6 596.2 594.2 596.8 634.3C597.4 674.4 597.8 534.7 598.4 525.6C599.0 516.6 599.3 599.5 599.9 588.9C600.5 578.4 600.8 520.7 601.5 472.9C602.1 425.1 602.4 369.9 603.0 350.1C603.6 330.4 603.9 318.7 604.6 374.1C605.2 429.5 605.5 586.2 606.1 627.1C606.7 668.0 607.0 630.4 607.7 578.6C608.3 526.8 608.6 401.1 609.2 368.2C609.8 335.3 610.1 386.0 610.7 414.1C611.4 442.3 611.7 495.6 612.3 509.0C612.9 522.5 613.2 466.0 613.8 481.5C614.5 497.0 614.8 610.9 615.4 586.5C616.0 562.1 616.3 374.9 616.9 359.4C617.6 343.8 617.9 510.6 618.5 508.7C619.1 506.9 619.4 364.5 620.0 350.1C620.6 335.8 621.0 384.1 621.6 436.8C622.2 489.6 622.5 595.1 623.1 613.8C623.7 632.4 624.1 539.3 624.7 530.0C625.3 520.7 625.6 604.7 626.2 567.3C626.8 530.0 627.1 367.9 627.8 343.2C628.4 318.5 628.7 387.7 629.3 444.0C629.9 500.2 630.2 596.7 630.9 624.4C631.5 652.2 631.8 603.7 632.4 582.7C633.0 561.7 633.3 539.2 634.0 519.5C634.6 499.8 634.9 498.5 635.5 484.2C636.1 469.9 636.4 442.7 637.0 448.0C637.7 453.3 638.0 495.8 638.6 510.6C639.2 525.4 639.5 496.6 640.1 521.9C640.8 547.1 641.1 651.8 641.7 636.9C642.3 622.0 642.6 469.0 643.2 447.3C643.9 425.6 644.2 491.5 644.8 528.5C645.4 565.4 645.7 640.4 646.3 632.1C646.9 623.8 647.3 550.8 647.9 486.9C648.5 423.0 648.8 285.3 649.4 312.6C650.0 340.0 650.3 568.3 651.0 623.8C651.6 679.4 651.9 632.0 652.5 590.6C653.1 549.3 653.4 425.3 654.1 417.0C654.7 408.6 655.0 522.4 655.6 548.7C656.2 575.0 656.5 563.5 657.2 548.5C657.8 533.4 658.1 472.8 658.7 473.5C659.3 474.2 659.6 556.7 660.3 552.2C660.9 547.6 661.2 468.3 661.8 450.7C662.4 433.1 662.7 489.9 663.3 464.2C664.0 438.5 664.3 353.1 664.9 322.4C665.5 291.7 665.8 249.7 666.4 310.7C667.1 371.8 667.4 599.0 668.0 627.6C668.6 656.1 668.9 502.2 669.5 453.4C670.2 404.7 670.5 404.5 671.1 383.9C671.7 363.3 672.0 350.6 672.6 350.3C673.2 350.1 673.6 367.0 674.2 382.8C674.8 398.6 675.1 420.2 675.7 429.5C676.3 438.7 676.6 411.1 677.3 429.0C677.9 446.8 678.2 495.5 678.8 518.8C679.4 542.2 679.7 574.3 680.4 545.7C681.0 517.1 681.3 414.9 681.9 375.8C682.5 336.7 682.8 359.7 683.5 350.2C684.1 340.7 684.4 315.8 685.0 328.4C685.6 341.1 685.9 371.6 686.5 413.5C687.2 455.5 687.5 543.7 688.1 538.3C688.7 532.9 689.0 415.2 689.6 386.4C690.3 357.6 690.6 377.5 691.2 394.3C691.8 411.1 692.1 463.7 692.7 470.6C693.4 477.5 693.7 418.3 694.3 428.8C694.9 439.3 695.2 517.4 695.8 523.0C696.5 528.6 696.8 460.4 697.4 456.7C698.0 453.0 698.3 472.2 698.9 504.6C699.5 537.0 699.9 614.3 700.5 618.9C701.1 623.4 701.4 544.7 702.0 527.3C702.6 510.0 702.9 575.0 703.6 532.0C704.2 488.9 704.5 322.4 705.1 312.0C705.7 301.5 706.0 438.5 706.7 479.6C707.3 520.7 707.6 501.6 708.2 517.4C708.8 533.1 709.1 549.6 709.8 558.4C710.4 567.1 710.7 568.2 711.3 561.2C711.9 554.2 712.2 516.8 712.8 523.4C713.5 529.9 713.8 571.4 714.4 594.0C715.0 616.6 715.3 685.1 715.9 636.5C716.6 587.8 716.9 380.3 717.5 350.8C718.1 321.3 718.4 460.9 719.0 489.0C719.7 517.1 720.0 499.2 720.6 491.5C721.2 483.9 721.5 441.3 722.1 450.8C722.7 460.2 723.1 512.4 723.7 538.8C724.3 565.3 724.6 567.4 725.2 583.0C725.8 598.6 726.2 625.7 726.8 616.9C727.4 608.2 727.7 555.2 728.3 539.2C728.9 523.1 729.2 565.0 729.9 536.8C730.5 508.7 730.8 414.6 731.4 398.5C732.0 382.5 732.3 470.5 733.0 456.5C733.6 442.6 733.9 314.9 734.5 328.8C735.1 342.8 735.4 525.2 736.1 526.3C736.7 527.3 737.0 350.3 737.6 334.2C738.2 318.1 738.5 390.3 739.1 445.9C739.8 501.6 740.1 585.6 740.7 612.4C741.3 639.2 741.6 612.8 742.2 579.7C742.9 546.6 743.2 500.4 743.8 446.9C744.4 393.4 744.7 297.5 745.3 312.3C746.0 327.1 746.3 506.7 746.9 520.8C747.5 534.9 747.8 387.5 748.4 382.7C749.0 378.0 749.4 503.4 750.0 497.2C750.6 491.0 750.9 327.8 751.5 351.7C752.1 375.5 752.5 591.1 753.1 616.5C753.7 641.8 754.0 533.6 754.6 478.6C755.2 423.6 755.5 327.7 756.2 341.5C756.8 355.3 757.1 505.2 757.7 547.6C758.3 590.1 758.6 537.0 759.3 553.7C759.9 570.4 760.2 625.1 760.8 631.2C761.4 637.4 761.7 600.6 762.4 584.4C763.0 568.2 763.3 585.9 763.9 550.2C764.5 514.5 764.8 402.6 765.4 405.9C766.1 409.2 766.4 546.5 767.0 566.7C767.6 586.8 767.9 505.5 768.5 506.7C769.2 507.9 769.5 586.0 770.1 572.6C770.7 559.2 771.0 483.4 771.6 439.5C772.3 395.6 772.6 356.1 773.2 353.1C773.8 350.1 774.1 380.4 774.7 424.5C775.3 468.7 775.7 579.5 776.3 573.8C776.9 568.1 777.2 446.8 777.8 396.1C778.4 345.5 778.8 311.5 779.4 320.3C780.0 329.1 780.3 381.6 780.9 440.1C781.5 498.5 781.8 626.4 782.5 612.6C783.1 598.8 783.4 423.8 784.0 371.2C784.6 318.5 784.9 318.3 785.6 349.3C786.2 380.3 786.5 477.2 787.1 526.0C787.7 574.9 788.0 583.5 788.7 593.7C789.3 603.8 789.6 603.1 790.2 576.6C790.8 550.1 791.1 506.7 791.7 461.3C792.4 415.8 792.7 356.1 793.3 349.3C793.9 342.5 794.2 430.4 794.8 427.2C795.5 424.1 795.8 305.4 796.4 333.6C797.0 361.9 797.3 529.2 797.9 568.7C798.6 608.1 798.9 566.3 799.5 530.8C800.1 495.3 800.4 412.4 801.0 391.0C801.6 369.7 802.0 401.5 802.6 424.2C803.2 447.0 803.5 506.8 804.1 504.8C804.7 502.8 805.0 409.8 805.7 414.3C806.3 418.8 806.6 486.0 807.2 527.2C807.8 568.3 808.1 624.9 808.8 619.9C809.4 614.8 809.7 501.1 810.3 501.9C810.9 502.6 811.2 637.8 811.9 623.8C812.5 609.8 812.8 450.8 813.4 431.7C814.0 412.6 814.3 519.5 815.0 528.2C815.6 537.0 815.9 492.8 816.5 475.4C817.1 457.9 817.4 425.4 818.0 441.1C818.7 456.8 819.0 545.0 819.6 553.9C820.2 562.8 820.5 469.5 821.1 485.6C821.8 501.7 822.1 664.9 822.7 634.4C823.3 603.8 823.6 369.3 824.2 332.9C824.9 296.4 825.2 456.4 825.8 452.3C826.4 448.2 826.7 278.7 827.3 312.3C827.9 345.9 828.3 595.6 828.9 620.3C829.5 645.0 829.8 480.0 830.4 435.8C831.0 391.6 831.3 380.5 832.0 399.4C832.6 418.2 832.9 488.3 833.5 530.0C834.1 571.7 834.4 596.5 835.1 608.0C835.7 619.4 836.0 590.5 836.6 587.2C837.2 583.9 837.5 632.1 838.2 591.7C838.8 551.3 839.1 381.6 839.7 385.1C840.3 388.6 840.6 612.2 841.2 609.1C841.9 606.0 842.2 391.7 842.8 369.6C843.4 347.6 843.7 480.7 844.3 498.9C845.0 517.1 845.3 471.6 845.9 460.7C846.5 449.8 846.8 445.3 847.4 444.2C848.1 443.2 848.4 459.9 849.0 455.3C849.6 450.8 849.9 424.5 850.5 421.5C851.2 418.4 851.5 418.3 852.1 439.9C852.7 461.5 853.0 538.7 853.6 529.4C854.2 520.2 854.6 388.9 855.2 393.8C855.8 398.6 856.1 551.6 856.7 553.6C857.3 555.6 857.6 437.0 858.3 403.6C858.9 370.1 859.2 390.7 859.8 386.4C860.4 382.1 860.7 352.2 861.4 382.2C862.0 412.3 862.3 536.4 862.9 536.6C863.5 536.8 863.8 427.5 864.5 383.3C865.1 339.2 865.4 294.5 866.0 315.6C866.6 336.8 866.9 442.7 867.5 489.0C868.2 535.2 868.5 551.5 869.1 546.8C869.7 542.2 870.0 509.6 870.6 465.8C871.3 422.0 871.6 301.8 872.2 327.7C872.8 353.6 873.1 533.6 873.7 595.2C874.4 656.9 874.7 658.6 875.3 635.9C875.9 613.1 876.2 524.3 876.8 481.5C877.4 438.8 877.8 441.9 878.4 422.1C879.0 402.4 879.3 363.5 879.9 382.8C880.5 402.2 880.9 533.2 881.5 519.0C882.1 504.7 882.4 302.7 883.0 311.6C883.6 320.5 883.9 548.0 884.6 563.4C885.2 578.8 885.5 379.5 886.1 388.6C886.7 397.8 887.0 560.9 887.7 609.1C888.3 657.3 888.6 632.5 889.2 629.6C889.8 626.7 890.1 596.6 890.8 594.5C891.4 592.4 891.7 643.3 892.3 619.0C892.9 594.6 893.2 505.6 893.8 472.9C894.5 440.1 894.8 434.1 895.4 455.2C896.0 476.4 896.3 604.2 896.9 578.7C897.6 553.3 897.9 340.2 898.5 328.1C899.1 315.9 899.4 465.7 900.0 517.9C900.7 570.2 901.0 577.0 901.6 589.5C902.2 601.9 902.5 619.1 903.1 580.2C903.7 541.3 904.1 444.1 904.7 394.9C905.3 345.7 905.6 296.0 906.2 334.1C906.8 372.2 907.2 526.2 907.8 585.3C908.4 644.3 908.7 670.0 909.3 629.3C909.9 588.5 910.2 395.7 910.9 381.5C911.5 367.4 911.8 572.1 912.4 558.6C913.0 545.1 913.3 330.9 914.0 314.0C914.6 297.0 914.9 451.0 915.5 473.9C916.1 496.8 916.4 418.2 917.1 428.5C917.7 438.7 918.0 535.9 918.6 525.0C919.2 514.1 919.5 381.8 920.1 374.1C920.8 366.4 921.1 455.2 921.7 486.7C922.3 518.2 922.6 561.1 923.2 531.8C923.9 502.4 924.2 325.8 924.8 340.1C925.4 354.3 925.7 592.0 926.3 603.2C927.0 614.5 927.3 393.5 927.9 396.3C928.5 399.1 928.8 611.4 929.4 617.2C930.0 623.0 930.4 447.6 931.0 425.4C931.6 403.1 932.2 489.8 932.5 506.0" stroke="#a52a2a"/>
<path d="M159.5 638.9L192.0 638.9C192.5 634.9 193.9 656.3 194.8 619.0C195.6 581.7 195.7 475.4 196.3 452.3C196.9 429.1 197.2 526.8 197.9 503.3C198.5 479.8 198.8 370.3 199.4 334.9C200.0 299.5 200.3 307.0 201.0 326.3C201.6 345.7 201.9 383.8 202.5 431.5C203.1 479.1 203.4 539.9 204.0 564.7C204.7 589.6 205.0 558.1 205.6 555.5C206.2 553.0 206.5 564.1 207.1 552.1C207.8 540.1 208.1 493.3 208.7 495.4C209.3 497.4 209.6 547.1 210.2 562.3C210.9 577.6 211.2 606.6 211.8 571.7C212.4 536.7 212.7 416.9 213.3 387.8C213.9 358.7 214.3 395.8 214.9 426.3C215.5 456.8 215.8 563.4 216.4 540.2C217.0 516.9 217.4 304.6 218.0 310.0C218.6 315.4 218.9 539.1 219.5 567.2C220.1 595.3 220.4 446.5 221.1 450.5C221.7 454.5 222.0 606.4 222.6 587.0C223.2 567.6 223.5 400.6 224.2 353.4C224.8 306.3 225.1 312.0 225.7 351.4C226.3 390.8 226.6 542.7 227.3 550.5C227.9 558.3 228.2 427.1 228.8 390.3C229.4 353.6 229.7 335.7 230.3 366.7C231.0 397.8 231.3 512.9 231.9 545.4C232.5 577.9 232.8 542.6 233.4 529.2C234.1 515.8 234.4 515.3 235.0 478.3C235.6 441.3 235.9 322.8 236.5 344.2C237.2 365.6 237.5 571.6 238.1 585.4C238.7 599.2 239.0 441.9 239.6 413.1C240.2 384.2 240.6 426.0 241.2 441.2C241.8 456.4 242.1 487.8 242.7 489.0C243.3 490.2 243.7 475.7 244.3 447.3C244.9 418.9 245.2 322.4 245.8 346.9C246.4 371.3 246.7 569.5 247.4 569.5C248.0 569.4 248.3 356.6 248.9 346.6C249.5 336.7 249.8 512.8 250.5 519.7C251.1 526.5 251.4 414.2 252.0 381.0C252.6 347.7 252.9 313.8 253.6 353.3C254.2 392.9 254.5 578.6 255.1 578.6C255.7 578.5 256.0 406.9 256.6 353.1C257.3 299.4 257.6 272.4 258.2 309.9C258.8 347.3 259.1 476.3 259.7 540.4C260.4 604.6 260.7 618.5 261.3 630.8C261.9 643.1 262.2 664.8 262.8 602.0C263.5 539.1 263.8 309.9 264.4 316.6C265.0 323.4 265.3 631.6 265.9 635.7C266.5 639.9 266.9 346.7 267.5 337.4C268.1 328.0 268.4 577.4 269.0 589.0C269.6 600.6 269.9 391.9 270.6 395.4C271.2 399.0 271.5 569.1 272.1 606.6C272.7 644.1 273.0 621.8 273.7 583.1C274.3 544.3 274.6 407.9 275.2 413.1C275.8 418.2 276.1 586.3 276.8 609.0C277.4 631.7 277.7 581.4 278.3 526.6C278.9 471.8 279.2 360.0 279.9 335.1C280.5 310.2 280.8 399.5 281.4 401.9C282.0 404.4 282.3 364.6 282.9 347.2C283.6 329.8 283.9 258.7 284.5 314.9C285.1 371.0 285.4 578.7 286.0 628.0C286.7 677.3 287.0 611.5 287.6 561.3C288.2 511.1 288.5 407.0 289.1 376.9C289.8 346.8 290.1 361.0 290.7 410.8C291.3 460.7 291.6 614.1 292.2 626.3C292.8 638.5 293.2 484.7 293.8 471.9C294.4 459.1 294.7 557.3 295.3 562.3C295.9 567.2 296.2 488.1 296.9 496.5C297.5 504.9 297.8 577.0 298.4 604.2C299.0 631.3 299.3 690.9 300.0 632.3C300.6 573.7 300.9 330.8 301.5 311.2C302.1 291.6 302.4 526.8 303.1 534.2C303.7 541.6 304.0 335.3 304.6 348.3C305.2 361.3 305.5 573.1 306.1 599.0C306.8 624.9 307.1 478.7 307.7 477.7C308.3 476.7 308.6 590.0 309.2 593.9C309.9 597.8 310.2 500.0 310.8 497.2C311.4 494.3 311.7 596.7 312.3 579.7C313.0 562.7 313.3 410.1 313.9 412.2C314.5 414.2 314.8 593.4 315.4 589.9C316.1 586.4 316.4 418.1 317.0 394.7C317.6 371.4 317.9 431.9 318.5 473.3C319.1 514.7 319.5 592.0 320.1 601.7C320.7 611.4 321.0 547.3 321.6 521.9C322.2 496.5 322.5 512.1 323.2 474.7C323.8 437.4 324.1 325.3 324.7 335.0C325.3 344.7 325.6 476.8 326.3 523.3C326.9 569.8 327.2 608.6 327.8 567.7C328.4 526.8 328.7 363.1 329.4 318.9C330.0 274.7 330.3 331.2 330.9 346.8C331.5 362.4 331.8 356.6 332.4 397.0C333.1 437.3 333.4 511.9 334.0 548.6C334.6 585.2 334.9 579.7 335.5 580.2C336.2 580.8 336.5 544.2 337.1 551.3C337.7 558.5 338.0 601.4 338.6 616.1C339.3 630.7 339.6 653.7 340.2 624.6C340.8 595.5 341.1 494.7 341.7 470.6C342.3 446.5 342.7 507.1 343.3 503.9C343.9 500.7 344.2 451.8 344.8 454.8C345.4 457.8 345.8 482.8 346.4 518.9C347.0 555.1 347.3 656.9 347.9 635.4C348.5 613.8 348.8 453.8 349.5 411.3C350.1 368.8 350.4 413.3 351.0 422.9C351.6 432.4 351.9 452.1 352.6 459.0C353.2 465.9 353.5 467.0 354.1 457.4C354.7 447.7 355.0 439.2 355.7 410.6C356.3 381.9 356.6 326.1 357.2 314.0C357.8 301.8 358.1 332.3 358.7 349.8C359.4 367.3 359.7 370.1 360.3 401.5C360.9 432.9 361.2 480.4 361.8 506.8C362.5 533.2 362.8 534.9 363.4 533.6C364.0 532.3 364.3 543.5 364.9 500.2C365.6 456.9 365.9 315.0 366.5 317.1C367.1 319.2 367.4 472.0 368.0 510.8C368.6 549.7 369.0 512.9 369.6 511.4C370.2 509.9 370.5 487.2 371.1 503.3C371.7 519.3 372.1 630.5 372.7 591.5C373.3 552.6 373.6 299.6 374.2 308.7C374.8 317.8 375.1 611.3 375.8 637.1C376.4 663.0 376.7 498.8 377.3 437.8C377.9 376.9 378.2 309.2 378.9 332.5C379.5 355.9 379.8 533.8 380.4 554.6C381.0 575.5 381.3 444.9 382.0 436.8C382.6 428.7 382.9 489.7 383.5 514.2C384.1 538.7 384.4 547.4 385.0 559.2C385.7 571.0 386.0 565.0 386.6 573.2C387.2 581.5 387.5 643.1 388.1 600.4C388.8 557.8 389.1 404.2 389.7 360.0C390.3 315.9 390.6 383.9 391.2 379.6C391.9 375.3 392.2 289.8 392.8 338.4C393.4 387.0 393.7 608.3 394.3 622.5C394.9 636.7 395.3 427.5 395.9 409.3C396.5 391.1 396.8 528.4 397.4 531.6C398.0 534.8 398.4 440.0 399.0 425.1C399.6 410.3 399.9 435.4 400.5 457.3C401.1 479.2 401.4 562.4 402.1 534.5C402.7 506.5 403.0 296.7 403.6 317.5C404.2 338.3 404.5 623.6 405.2 638.5C405.8 653.5 406.1 448.5 406.7 392.1C407.3 335.7 407.6 341.0 408.3 356.6C408.9 372.2 409.2 452.9 409.8 470.2C410.4 487.4 410.7 475.0 411.3 443.0C412.0 410.9 412.3 286.2 412.9 309.9C413.5 333.5 413.8 537.2 414.4 561.3C415.1 585.5 415.4 464.3 416.0 430.7C416.6 397.0 416.9 376.5 417.5 393.0C418.2 409.6 418.5 511.5 419.1 513.6C419.7 515.6 420.0 404.3 420.6 403.3C421.2 402.4 421.6 496.4 422.2 508.7C422.8 521.0 423.1 479.3 423.7 464.8C424.3 450.3 424.6 446.2 425.3 436.2C425.9 426.2 426.2 395.7 426.8 414.9C427.4 434.1 427.7 529.1 428.4 532.3C429.0 535.5 429.3 445.5 429.9 430.9C430.5 416.3 430.8 432.4 431.5 459.3C432.1 486.1 432.4 569.6 433.0 565.0C433.6 560.4 433.9 439.0 434.6 436.3C435.2 433.5 435.5 570.8 436.1 551.2C436.7 531.6 437.0 352.1 437.6 338.3C438.3 324.5 438.6 470.0 439.2 482.3C439.8 494.7 440.1 403.5 440.7 400.2C441.4 397.0 441.7 450.0 442.3 466.2C442.9 482.4 443.2 461.3 443.8 481.2C444.5 501.1 444.8 543.6 445.4 565.7C446.0 587.8 446.3 638.6 446.9 591.9C447.5 545.2 447.9 357.8 448.5 332.2C449.1 306.6 449.4 437.3 450.0 464.0C450.6 490.7 450.9 465.5 451.6 465.6C452.2 465.7 452.5 483.6 453.1 464.4C453.7 445.3 454.0 350.8 454.7 369.9C455.3 389.0 455.6 517.5 456.2 559.9C456.8 602.3 457.1 620.4 457.8 581.9C458.4 543.3 458.7 386.1 459.3 367.0C459.9 348.0 460.2 474.6 460.8 486.6C461.5 498.6 461.8 451.3 462.4 427.0C463.0 402.7 463.3 382.0 463.9 365.2C464.6 348.4 464.9 345.9 465.5 343.2C466.1 340.5 466.4 295.6 467.0 351.9C467.7 408.1 468.0 592.4 468.6 624.6C469.2 656.7 469.5 564.9 470.1 512.8C470.8 460.6 471.1 392.5 471.7 363.7C472.3 334.8 472.6 321.5 473.2 368.4C473.8 415.3 474.2 554.3 474.8 598.2C475.4 642.1 475.7 596.5 476.3 588.0C476.9 579.5 477.2 552.3 477.9 555.7C478.5 559.1 478.8 611.8 479.4 604.9C480.0 597.9 480.3 567.2 481.0 520.9C481.6 474.6 481.9 384.1 482.5 373.2C483.1 362.3 483.4 443.3 484.1 466.4C484.7 489.6 485.0 460.4 485.6 489.1C486.2 517.8 486.5 606.0 487.1 609.8C487.8 613.5 488.1 568.2 488.7 508.0C489.3 447.9 489.6 329.0 490.2 309.1C490.9 289.3 491.2 372.8 491.8 409.0C492.4 445.2 492.7 475.9 493.3 490.3C494.0 504.6 494.3 503.7 494.9 480.7C495.5 457.6 495.8 393.4 496.4 374.9C497.0 356.3 497.4 345.0 498.0 387.9C498.6 430.8 498.9 584.1 499.5 589.3C500.1 594.5 500.5 428.3 501.1 413.9C501.7 399.6 502.0 507.0 502.6 517.5C503.2 528.1 503.5 458.1 504.2 466.7C504.8 475.2 505.1 550.4 505.7 560.3C506.3 570.2 506.6 523.0 507.3 516.2C507.9 509.5 508.2 527.1 508.8 526.4C509.4 525.7 509.7 491.5 510.4 512.8C511.0 534.1 511.3 621.1 511.9 633.0C512.5 644.9 512.8 609.0 513.4 572.4C514.1 535.9 514.4 440.7 515.0 450.2C515.6 459.6 515.9 593.8 516.5 619.8C517.2 645.7 517.5 623.5 518.1 579.8C518.7 536.2 519.0 407.7 519.6 401.3C520.3 395.0 520.6 522.0 521.2 548.0C521.8 574.1 522.1 529.5 522.7 531.7C523.3 533.9 523.7 592.6 524.3 558.9C524.9 525.1 525.2 353.0 525.8 363.0C526.4 372.9 526.8 595.6 527.4 608.7C528.0 621.7 528.3 479.2 528.9 428.5C529.5 377.7 529.8 326.1 530.5 354.8C531.1 383.5 531.4 543.3 532.0 572.2C532.6 601.0 532.9 538.0 533.6 498.9C534.2 459.9 534.5 389.7 535.1 376.8C535.7 363.9 536.0 406.7 536.7 434.5C537.3 462.3 537.6 478.0 538.2 516.0C538.8 553.9 539.1 629.0 539.7 624.3C540.4 619.6 540.7 513.9 541.3 492.5C541.9 471.1 542.2 535.3 542.8 517.4C543.5 499.6 543.8 398.5 544.4 403.2C545.0 408.0 545.3 521.1 545.9 541.2C546.6 561.4 546.9 527.3 547.5 504.0C548.1 480.6 548.4 451.1 549.0 424.5C549.6 397.8 550.0 351.1 550.6 370.7C551.2 390.3 551.5 494.2 552.1 522.3C552.7 550.5 553.1 526.4 553.7 511.4C554.3 496.4 554.6 483.2 555.2 447.5C555.8 411.8 556.1 307.4 556.8 333.0C557.4 358.6 557.7 578.6 558.3 575.5C558.9 572.4 559.2 352.0 559.9 317.6C560.5 283.2 560.8 363.8 561.4 403.4C562.0 443.0 562.3 512.7 563.0 515.7C563.6 518.8 563.9 415.9 564.5 418.7C565.1 421.6 565.4 490.6 566.0 529.9C566.7 569.2 567.0 643.7 567.6 615.4C568.2 587.2 568.5 409.2 569.1 388.8C569.8 368.4 570.1 498.2 570.7 513.4C571.3 528.6 571.6 472.7 572.2 465.0C572.9 457.2 573.2 499.5 573.8 474.6C574.4 449.8 574.7 358.0 575.3 340.8C575.9 323.6 576.3 330.6 576.9 388.5C577.5 446.4 577.8 619.5 578.4 630.4C579.0 641.3 579.3 471.7 580.0 442.8C580.6 413.9 580.9 477.2 581.5 485.9C582.1 494.5 582.4 510.9 583.1 486.0C583.7 461.1 584.0 358.1 584.6 361.2C585.2 364.3 585.5 477.4 586.2 501.6C586.8 525.9 587.1 513.7 587.7 482.2C588.3 450.8 588.6 342.2 589.3 344.4C589.9 346.6 590.2 467.0 590.8 493.4C591.4 519.8 591.7 481.1 592.3 476.4C593.0 471.6 593.3 491.7 593.9 469.6C594.5 447.5 594.8 376.6 595.4 366.1C596.1 355.6 596.4 411.6 597.0 417.2C597.6 422.7 597.9 376.2 598.5 394.0C599.2 411.8 599.5 459.7 600.1 506.0C600.7 552.3 601.0 643.8 601.6 625.4C602.2 607.0 602.6 448.0 603.2 414.0C603.8 380.1 604.1 461.6 604.7 455.7C605.3 449.8 605.6 398.8 606.3 384.5C606.9 370.2 607.2 341.2 607.8 384.2C608.4 427.3 608.7 563.5 609.4 599.8C610.0 636.1 610.3 563.2 610.9 565.9C611.5 568.6 611.8 652.8 612.5 613.3C613.1 573.9 613.4 370.1 614.0 368.5C614.6 366.9 614.9 557.0 615.5 605.2C616.2 653.5 616.5 652.8 617.1 609.7C617.7 566.6 618.0 421.2 618.6 389.7C619.3 358.2 619.6 406.0 620.2 452.2C620.8 498.4 621.1 628.4 621.7 620.7C622.4 613.0 622.7 457.0 623.3 413.6C623.9 370.3 624.2 390.6 624.8 403.7C625.5 416.8 625.8 435.8 626.4 479.2C627.0 522.6 627.3 634.5 627.9 620.7C628.5 607.0 628.9 434.3 629.5 410.3C630.1 386.3 630.4 493.6 631.0 500.6C631.6 507.7 631.9 484.1 632.6 445.7C633.2 407.4 633.5 324.2 634.1 308.8C634.7 293.4 635.0 360.4 635.7 368.7C636.3 377.1 636.6 306.1 637.2 350.5C637.8 394.9 638.1 555.2 638.8 590.7C639.4 626.3 639.7 552.9 640.3 528.3C640.9 503.6 641.2 445.8 641.8 467.5C642.5 489.2 642.8 668.0 643.4 636.9C644.0 605.7 644.3 329.7 644.9 311.9C645.6 294.1 645.9 500.0 646.5 548.0C647.1 596.1 647.4 554.6 648.0 552.1C648.7 549.6 649.0 534.8 649.6 535.3C650.2 535.8 650.5 590.6 651.1 554.5C651.7 518.4 652.1 374.7 652.7 354.8C653.3 334.9 653.6 432.1 654.2 455.1C654.8 478.1 655.2 460.9 655.8 469.9C656.4 478.8 656.7 469.5 657.3 499.9C657.9 530.3 658.2 614.3 658.9 621.9C659.5 629.6 659.8 592.1 660.4 538.2C661.0 484.2 661.3 385.1 662.0 352.2C662.6 319.3 662.9 373.0 663.5 373.6C664.1 374.3 664.4 319.5 665.1 355.6C665.7 391.6 666.0 510.5 666.6 553.8C667.2 597.1 667.5 558.5 668.1 572.1C668.8 585.6 669.1 643.8 669.7 621.6C670.3 599.5 670.6 482.6 671.2 461.3C671.9 440.0 672.2 510.4 672.8 515.2C673.4 520.0 673.7 492.9 674.3 485.3C675.0 477.7 675.3 485.0 675.9 477.1C676.5 469.2 676.8 437.6 677.4 445.8C678.0 453.9 678.4 532.3 679.0 517.9C679.6 503.5 679.9 362.9 680.5 373.8C681.1 384.8 681.5 580.4 682.1 572.6C682.7 564.8 683.0 358.3 683.6 334.8C684.2 311.3 684.5 397.5 685.2 454.9C685.8 512.4 686.1 605.9 686.7 621.9C687.3 637.9 687.6 566.8 688.3 534.9C688.9 503.0 689.2 468.8 689.8 462.6C690.4 456.3 690.7 505.7 691.4 503.6C692.0 501.5 692.3 446.4 692.9 452.0C693.5 457.7 693.8 512.6 694.4 531.9C695.1 551.1 695.4 579.6 696.0 548.4C696.6 517.1 696.9 376.8 697.5 375.6C698.2 374.4 698.5 536.8 699.1 542.4C699.7 548.1 700.0 437.7 700.6 403.9C701.3 370.1 701.6 365.6 702.2 373.5C702.8 381.3 703.1 420.0 703.7 443.0C704.3 466.1 704.7 511.2 705.3 488.5C705.9 465.8 706.2 329.0 706.8 329.7C707.4 330.3 707.8 488.0 708.4 491.7C709.0 495.5 709.3 322.9 709.9 348.5C710.5 374.1 710.8 590.4 711.5 619.8C712.1 649.2 712.4 533.9 713.0 495.4C713.6 457.0 713.9 402.0 714.6 427.4C715.2 452.9 715.5 637.4 716.1 622.7C716.7 607.9 717.0 355.1 717.7 353.6C718.3 352.1 718.6 597.5 719.2 615.1C719.8 632.7 720.1 448.8 720.7 441.7C721.4 434.5 721.7 600.8 722.3 579.3C722.9 557.7 723.2 359.0 723.8 333.8C724.5 308.6 724.8 445.3 725.4 453.3C726.0 461.4 726.3 369.9 726.9 374.1C727.6 378.2 727.9 465.7 728.5 474.1C729.1 482.5 729.4 427.7 730.0 416.0C730.6 404.3 731.0 390.6 731.6 415.6C732.2 440.7 732.5 510.6 733.1 541.3C733.7 572.0 734.0 605.0 734.7 569.1C735.3 533.1 735.6 357.3 736.2 361.6C736.8 365.9 737.1 595.9 737.8 590.6C738.4 585.4 738.7 339.4 739.3 335.3C739.9 331.3 740.2 516.4 740.9 570.4C741.5 624.5 741.8 598.1 742.4 605.5C743.0 612.9 743.3 652.6 744.0 607.4C744.6 562.2 744.9 436.1 745.5 379.5C746.1 322.9 746.4 299.9 747.0 324.4C747.7 348.8 748.0 482.4 748.6 501.7C749.2 521.0 749.5 410.6 750.1 421.0C750.8 431.3 751.1 570.0 751.7 553.7C752.3 537.3 752.6 367.6 753.2 339.3C753.9 310.9 754.2 362.3 754.8 412.0C755.4 461.7 755.7 546.0 756.3 587.7C756.9 629.3 757.3 655.9 757.9 620.1C758.5 584.3 758.8 407.8 759.4 408.8C760.0 409.8 760.3 634.3 761.0 625.0C761.6 615.8 761.9 379.0 762.5 362.3C763.1 345.7 763.4 501.8 764.1 541.7C764.7 581.7 765.0 581.0 765.6 561.9C766.2 542.8 766.5 452.1 767.2 446.4C767.8 440.7 768.1 532.0 768.7 533.4C769.3 534.9 769.6 442.6 770.2 453.5C770.9 464.4 771.2 611.2 771.8 587.9C772.4 564.7 772.7 348.5 773.3 337.3C774.0 326.0 774.3 526.9 774.9 531.6C775.5 536.2 775.8 349.2 776.4 360.6C777.1 372.0 777.4 585.8 778.0 588.6C778.6 591.4 778.9 429.3 779.5 374.5C780.2 319.7 780.5 287.7 781.1 314.7C781.7 341.7 782.0 446.7 782.6 509.4C783.2 572.0 783.6 627.2 784.2 628.0C784.8 628.7 785.1 553.4 785.7 513.2C786.3 473.0 786.6 416.6 787.3 426.9C787.9 437.3 788.2 558.7 788.8 565.0C789.4 571.3 789.7 449.8 790.4 458.4C791.0 467.0 791.3 602.5 791.9 607.9C792.5 613.3 792.8 527.2 793.5 485.3C794.1 443.3 794.4 395.7 795.0 398.0C795.6 400.3 795.9 493.4 796.5 496.7C797.2 500.0 797.5 393.5 798.1 414.3C798.7 435.2 799.0 610.9 799.6 601.0C800.3 591.1 800.6 365.4 801.2 364.9C801.8 364.3 802.1 604.7 802.7 598.5C803.4 592.2 803.7 391.3 804.3 333.5C804.9 275.7 805.2 310.5 805.8 309.4C806.4 308.4 806.8 297.1 807.4 328.2C808.0 359.2 808.3 421.9 808.9 464.8C809.5 507.7 809.9 530.9 810.5 542.7C811.1 554.5 811.4 554.2 812.0 523.8C812.6 493.4 812.9 400.5 813.6 390.7C814.2 380.9 814.5 486.5 815.1 474.6C815.7 462.8 816.0 304.7 816.7 331.3C817.3 358.0 817.6 578.7 818.2 608.1C818.8 637.5 819.1 529.5 819.8 478.5C820.4 427.5 820.7 360.6 821.3 353.1C821.9 345.6 822.2 419.8 822.8 441.2C823.5 462.5 823.8 426.3 824.4 460.0C825.0 493.7 825.3 583.1 825.9 609.6C826.6 636.1 826.9 604.7 827.5 592.7C828.1 580.6 828.4 599.0 829.0 549.2C829.7 499.3 830.0 381.5 830.6 343.5C831.2 305.5 831.5 315.2 832.1 359.3C832.7 403.3 833.1 569.0 833.7 563.7C834.3 558.5 834.6 320.2 835.2 333.1C835.8 346.0 836.2 606.6 836.8 628.1C837.4 649.7 837.7 502.7 838.3 440.8C838.9 379.0 839.2 302.1 839.9 318.9C840.5 335.8 840.8 523.5 841.4 525.0C842.0 526.5 842.3 347.2 843.0 326.5C843.6 305.9 843.9 362.6 844.5 421.7C845.1 480.9 845.4 600.9 846.1 622.3C846.7 643.7 847.0 555.1 847.6 528.7C848.2 502.3 848.5 484.5 849.1 490.2C849.8 495.8 850.1 576.4 850.7 557.0C851.3 537.7 851.6 388.8 852.2 393.4C852.9 397.9 853.2 582.7 853.8 579.7C854.4 576.7 854.7 386.2 855.3 378.3C856.0 370.4 856.3 492.7 856.9 540.2C857.5 587.7 857.8 633.2 858.4 615.9C859.0 598.6 859.4 455.7 860.0 453.9C860.6 452.2 860.9 606.7 861.5 607.2C862.1 607.7 862.5 502.2 863.1 456.4C863.7 410.7 864.0 381.2 864.6 378.3C865.2 375.3 865.5 420.3 866.2 441.9C866.8 463.5 867.1 449.1 867.7 486.3C868.3 523.4 868.6 631.1 869.3 627.7C869.9 624.3 870.2 473.3 870.8 469.1C871.4 464.9 871.7 615.5 872.4 606.7C873.0 597.9 873.3 427.2 873.9 424.9C874.5 422.6 874.8 590.7 875.4 595.2C876.1 599.8 876.4 462.3 877.0 447.7C877.6 433.1 877.9 508.7 878.5 522.2C879.2 535.6 879.5 535.5 880.1 514.9C880.7 494.4 881.0 405.6 881.6 419.5C882.3 433.5 882.6 552.0 883.2 584.7C883.8 617.3 884.1 634.2 884.7 582.7C885.3 531.3 885.7 338.2 886.3 327.5C886.9 316.8 887.2 522.6 887.8 529.2C888.4 535.7 888.7 396.1 889.4 360.3C890.0 324.5 890.3 326.1 890.9 350.0C891.5 373.9 891.8 432.1 892.5 480.0C893.1 527.9 893.4 564.0 894.0 589.6C894.6 615.1 894.9 656.1 895.6 607.8C896.2 559.5 896.5 349.7 897.1 348.1C897.7 346.6 898.0 574.8 898.7 600.1C899.3 625.5 899.6 502.5 900.2 474.8C900.8 447.1 901.1 436.6 901.7 461.6C902.4 486.6 902.7 595.5 903.3 600.0C903.9 604.5 904.2 487.2 904.8 484.1C905.5 481.1 905.8 589.1 906.4 584.6C907.0 580.1 907.3 484.4 907.9 461.8C908.6 439.1 908.9 460.1 909.5 471.3C910.1 482.4 910.4 497.1 911.0 517.5C911.6 538.0 912.0 575.9 912.6 573.5C913.2 571.0 913.5 505.7 914.1 505.3C914.7 505.0 915.0 553.3 915.7 571.6C916.3 589.9 916.6 599.2 917.2 596.8C917.8 594.4 918.1 608.8 918.8 559.5C919.4 510.3 919.7 368.0 920.3 350.6C920.9 333.3 921.2 474.2 921.9 472.9C922.5 471.6 922.8 312.1 923.4 344.3C924.0 376.5 924.3 637.3 924.9 633.9C925.6 630.4 925.9 358.2 926.5 326.9C927.1 295.6 927.4 467.3 928.0 477.3C928.7 487.4 929.0 382.7 929.6 377.2C930.2 371.8 930.5 443.5 931.1 450.2C931.8 457.0 932.4 418.8 932.7 411.0" stroke="#808080"/>
<path d="M159.5 638.9L192.0 638.9C192.2 589.2 192.7 401.0 193.3 390.8C193.9 380.6 194.2 555.9 194.8 588.0C195.5 620.2 195.8 543.4 196.4 551.5C197.0 559.6 197.3 637.2 197.9 628.6C198.6 620.1 198.9 541.0 199.5 508.8C200.1 476.6 200.4 460.8 201.0 467.5C201.6 474.2 202.0 566.9 202.6 542.3C203.2 517.7 203.5 330.6 204.1 344.4C204.7 358.1 205.0 590.3 205.7 611.0C206.3 631.6 206.6 457.4 207.2 447.5C207.8 437.6 208.1 562.6 208.8 561.5C209.4 560.4 209.7 478.4 210.3 442.0C210.9 405.6 211.2 387.2 211.9 379.6C212.5 371.9 212.8 356.0 213.4 403.8C214.0 451.5 214.3 587.5 215.0 618.3C215.6 649.1 215.9 593.1 216.5 557.6C217.1 522.1 217.4 489.5 218.0 440.7C218.7 391.9 219.0 276.9 219.6 313.8C220.2 350.7 220.5 601.1 221.1 625.2C221.8 649.3 222.1 477.4 222.7 434.4C223.3 391.4 223.6 423.0 224.2 410.1C224.9 397.1 225.2 346.3 225.8 369.4C226.4 392.6 226.7 525.5 227.3 525.7C227.9 526.0 228.3 378.7 228.9 370.8C229.5 362.9 229.8 493.4 230.4 486.1C231.0 478.8 231.3 304.5 232.0 334.3C232.6 364.2 232.9 636.6 233.5 635.3C234.1 634.0 234.4 354.4 235.1 327.9C235.7 301.3 236.0 467.3 236.6 502.6C237.2 537.9 237.5 482.8 238.2 504.2C238.8 525.6 239.1 599.0 239.7 609.7C240.3 620.5 240.6 600.6 241.2 557.9C241.9 515.2 242.2 424.9 242.8 396.2C243.4 367.5 243.7 375.8 244.3 414.4C245.0 452.9 245.3 566.7 245.9 588.8C246.5 611.0 246.8 524.3 247.4 525.0C248.1 525.7 248.4 582.8 249.0 592.4C249.6 602.1 249.9 578.6 250.5 573.3C251.2 568.1 251.5 575.0 252.1 566.2C252.7 557.4 253.0 579.4 253.6 529.4C254.2 479.3 254.6 360.2 255.2 316.1C255.8 272.0 256.1 296.8 256.7 309.0C257.3 321.2 257.6 342.8 258.3 377.1C258.9 411.3 259.2 460.7 259.8 480.2C260.4 499.7 260.7 494.2 261.4 474.4C262.0 454.6 262.3 408.3 262.9 381.1C263.5 354.0 263.8 336.7 264.5 338.5C265.1 340.4 265.4 372.4 266.0 390.3C266.6 408.3 266.9 391.9 267.5 428.4C268.2 464.9 268.5 572.3 269.1 573.0C269.7 573.8 270.0 474.9 270.6 432.1C271.3 389.3 271.6 369.8 272.2 359.2C272.8 348.5 273.1 328.9 273.7 378.7C274.4 428.5 274.7 603.7 275.3 608.3C275.9 612.9 276.2 418.6 276.8 401.6C277.4 384.6 277.8 486.6 278.4 523.4C279.0 560.1 279.3 626.0 279.9 585.2C280.5 544.4 280.9 353.2 281.5 319.5C282.1 285.7 282.4 401.8 283.0 416.4C283.6 430.9 283.9 356.7 284.6 392.3C285.2 427.9 285.5 599.7 286.1 594.2C286.7 588.7 287.0 417.9 287.7 364.9C288.3 311.8 288.6 334.0 289.2 328.9C289.8 323.9 290.1 326.9 290.8 339.6C291.4 352.3 291.7 387.7 292.3 392.5C292.9 397.3 293.2 367.3 293.8 363.6C294.5 359.8 294.8 357.6 295.4 373.6C296.0 389.6 296.3 419.3 296.9 443.6C297.6 467.9 297.9 510.4 298.5 494.9C299.1 479.4 299.4 389.1 300.0 366.0C300.7 342.9 301.0 382.5 301.6 379.4C302.2 376.4 302.5 318.8 303.1 350.9C303.7 383.0 304.1 545.9 304.7 540.0C305.3 534.0 305.6 336.5 306.2 321.1C306.8 305.7 307.2 462.0 307.8 463.0C308.4 464.0 308.7 298.5 309.3 326.0C309.9 353.5 310.2 602.0 310.9 600.5C311.5 599.1 311.8 363.0 312.4 318.6C313.0 274.1 313.3 331.0 314.0 378.4C314.6 425.8 314.9 558.9 315.5 555.5C316.1 552.1 316.4 360.3 317.1 361.6C317.7 362.9 318.0 519.7 318.6 562.1C319.2 604.5 319.5 588.3 320.1 573.4C320.8 558.4 321.1 490.0 321.7 487.4C322.3 484.9 322.6 562.9 323.2 560.6C323.9 558.3 324.2 520.4 324.8 475.9C325.4 431.5 325.7 351.3 326.3 338.5C327.0 325.8 327.3 399.1 327.9 412.2C328.5 425.3 328.8 384.5 329.4 403.9C330.0 423.3 330.4 514.1 331.0 509.2C331.6 504.4 331.9 406.2 332.5 379.6C333.1 353.1 333.5 369.7 334.1 376.4C334.7 383.1 335.0 422.8 335.6 413.0C336.2 403.2 336.5 336.9 337.2 327.4C337.8 318.0 338.1 330.3 338.7 365.8C339.3 401.2 339.6 455.6 340.3 504.5C340.9 553.4 341.2 626.3 341.8 610.1C342.4 593.8 342.7 472.6 343.4 423.1C344.0 373.5 344.3 341.6 344.9 362.3C345.5 383.0 345.8 510.6 346.4 526.5C347.1 542.5 347.4 475.0 348.0 442.1C348.6 409.3 348.9 375.4 349.5 362.3C350.2 349.2 350.5 321.6 351.1 376.6C351.7 431.6 352.0 617.3 352.6 637.4C353.3 657.5 353.6 477.9 354.2 477.1C354.8 476.3 355.1 608.4 355.7 633.4C356.3 658.5 356.7 654.9 357.3 602.3C357.9 549.6 358.2 390.6 358.8 370.2C359.4 349.8 359.7 486.7 360.4 500.4C361.0 514.1 361.3 441.4 361.9 438.9C362.5 436.3 362.8 469.7 363.5 487.6C364.1 505.4 364.4 511.8 365.0 527.9C365.6 544.1 365.9 569.4 366.6 568.2C367.2 567.0 367.5 563.6 368.1 521.9C368.7 480.2 369.0 377.1 369.7 359.6C370.3 342.0 370.6 397.5 371.2 434.1C371.8 470.6 372.1 507.1 372.7 542.2C373.4 577.4 373.7 608.4 374.3 609.8C374.9 611.2 375.2 589.8 375.8 549.2C376.5 508.7 376.8 418.3 377.4 407.0C378.0 395.7 378.3 490.0 378.9 492.7C379.6 495.3 379.9 444.4 380.5 420.3C381.1 396.1 381.4 336.2 382.0 371.9C382.6 407.7 383.0 590.7 383.6 598.9C384.2 607.2 384.5 407.8 385.1 413.0C385.7 418.2 386.0 634.4 386.7 625.1C387.3 615.9 387.6 376.1 388.2 366.7C388.8 357.3 389.1 541.5 389.8 578.0C390.4 614.4 390.7 600.2 391.3 549.1C391.9 497.9 392.2 328.1 392.9 322.1C393.5 316.1 393.8 470.5 394.4 519.0C395.0 567.5 395.3 599.6 395.9 564.7C396.6 529.8 396.9 370.1 397.5 344.6C398.1 319.0 398.4 437.3 399.0 437.0C399.7 436.8 400.0 329.0 400.6 343.2C401.2 357.5 401.5 482.4 402.1 508.4C402.8 534.5 403.1 510.7 403.7 473.6C404.3 436.5 404.6 323.2 405.2 322.8C405.9 322.3 406.2 473.4 406.8 471.3C407.4 469.1 407.7 290.9 408.3 311.9C408.9 332.9 409.3 565.8 409.9 576.2C410.5 586.6 410.8 362.4 411.4 364.2C412.0 366.0 412.3 565.1 413.0 585.2C413.6 605.3 413.9 453.8 414.5 464.5C415.1 475.2 415.4 615.5 416.1 638.7C416.7 662.0 417.0 643.3 417.6 580.9C418.2 518.4 418.5 344.8 419.2 326.3C419.8 307.9 420.1 479.6 420.7 488.5C421.3 497.5 421.6 357.7 422.2 371.2C422.9 384.7 423.2 525.7 423.8 555.9C424.4 586.1 424.7 512.4 425.3 522.3C426.0 532.3 426.3 618.7 426.9 605.5C427.5 592.2 427.8 506.4 428.4 456.1C429.1 405.7 429.4 351.1 430.0 353.7C430.6 356.3 430.9 436.8 431.5 468.9C432.1 501.0 432.5 541.7 433.1 514.3C433.7 486.8 434.0 366.0 434.6 331.8C435.2 297.5 435.6 325.9 436.2 343.3C436.8 360.6 437.1 364.4 437.7 418.5C438.3 472.6 438.6 611.0 439.3 613.8C439.9 616.6 440.2 456.8 440.8 432.5C441.4 408.1 441.7 514.1 442.4 492.0C443.0 469.9 443.3 316.6 443.9 322.1C444.5 327.5 444.8 499.6 445.5 519.2C446.1 538.8 446.4 438.1 447.0 420.2C447.6 402.3 447.9 411.0 448.5 429.9C449.2 448.7 449.5 507.3 450.1 514.6C450.7 521.8 451.0 486.1 451.6 466.2C452.3 446.3 452.6 440.6 453.2 415.1C453.8 389.6 454.1 327.0 454.7 338.8C455.4 350.6 455.7 438.2 456.3 474.1C456.9 510.1 457.2 550.2 457.8 518.6C458.4 486.9 458.8 295.7 459.4 316.0C460.0 336.3 460.3 610.7 460.9 620.0C461.5 629.4 461.9 404.2 462.5 362.8C463.1 321.3 463.4 394.5 464.0 412.8C464.6 431.2 464.9 438.9 465.6 454.5C466.2 470.1 466.5 503.6 467.1 490.8C467.7 478.0 468.0 419.8 468.7 390.5C469.3 361.1 469.6 342.7 470.2 344.2C470.8 345.6 471.1 388.5 471.8 397.8C472.4 407.2 472.7 345.0 473.3 390.9C473.9 436.8 474.2 599.2 474.8 627.2C475.5 655.3 475.8 538.0 476.4 531.3C477.0 524.6 477.3 635.1 477.9 593.6C478.6 552.0 478.9 373.6 479.5 323.7C480.1 273.8 480.4 290.6 481.0 344.1C481.7 397.5 482.0 571.0 482.6 591.1C483.2 611.2 483.5 473.1 484.1 444.5C484.7 416.0 485.1 412.3 485.7 448.1C486.3 483.9 486.6 611.2 487.2 623.4C487.8 635.6 488.2 555.5 488.8 509.1C489.4 462.8 489.7 408.2 490.3 391.7C490.9 375.2 491.2 395.8 491.9 426.7C492.5 457.6 492.8 554.0 493.4 546.0C494.0 538.0 494.3 387.4 495.0 386.7C495.6 386.0 495.9 528.1 496.5 542.6C497.1 557.0 497.4 467.4 498.1 458.9C498.7 450.3 499.0 528.4 499.6 499.7C500.2 471.0 500.5 330.5 501.1 315.4C501.8 300.3 502.1 412.8 502.7 424.3C503.3 435.7 503.6 374.5 504.2 372.7C504.9 370.8 505.2 387.1 505.8 415.1C506.4 443.2 506.7 532.0 507.3 513.0C508.0 494.1 508.3 342.1 508.9 320.4C509.5 298.6 509.8 386.1 510.4 404.1C511.0 422.2 511.4 381.8 512.0 410.4C512.6 439.0 512.9 512.1 513.5 547.1C514.1 582.1 514.4 605.0 515.1 585.3C515.7 565.6 516.0 492.6 516.6 448.6C517.2 404.7 517.5 380.2 518.2 365.7C518.8 351.3 519.1 344.7 519.7 376.4C520.3 408.0 520.6 480.8 521.3 524.0C521.9 567.3 522.2 603.8 522.8 592.6C523.4 581.4 523.7 517.0 524.4 468.2C525.0 419.4 525.3 325.3 525.9 348.7C526.5 372.1 526.8 576.0 527.4 585.2C528.1 594.4 528.4 395.2 529.0 394.7C529.6 394.1 529.9 554.2 530.5 582.4C531.2 610.6 531.5 527.9 532.1 535.7C532.7 543.4 533.0 620.2 533.6 621.2C534.3 622.1 534.6 562.2 535.2 540.4C535.8 518.6 536.1 556.5 536.7 512.2C537.3 467.9 537.7 357.4 538.3 319.1C538.9 280.8 539.2 269.1 539.8 320.7C540.4 372.2 540.7 533.8 541.4 577.0C542.0 620.1 542.3 586.6 542.9 536.5C543.5 486.5 543.8 319.3 544.5 326.8C545.1 334.2 545.4 532.4 546.0 573.6C546.6 614.8 546.9 548.7 547.6 532.7C548.2 516.8 548.5 479.9 549.1 493.9C549.7 508.0 550.0 591.2 550.6 603.0C551.3 614.8 551.6 571.7 552.2 552.8C552.8 533.9 553.1 516.9 553.7 508.6C554.4 500.3 554.7 549.0 555.3 511.4C555.9 473.7 556.2 312.3 556.8 320.2C557.5 328.0 557.8 500.4 558.4 550.6C559.0 600.9 559.3 613.9 559.9 571.4C560.6 528.9 560.9 354.6 561.5 338.3C562.1 322.0 562.4 485.2 563.0 490.0C563.6 494.7 564.0 374.4 564.6 362.0C565.2 349.7 565.5 424.3 566.1 428.2C566.7 432.0 567.0 360.0 567.7 381.3C568.3 402.7 568.6 493.3 569.2 534.8C569.8 576.2 570.1 617.8 570.8 588.6C571.4 559.3 571.7 409.5 572.3 388.5C572.9 367.4 573.2 470.2 573.9 483.3C574.5 496.5 574.8 467.3 575.4 454.1C576.0 440.8 576.3 429.9 576.9 417.1C577.6 404.3 577.9 363.8 578.5 390.0C579.1 416.1 579.4 522.0 580.0 547.8C580.7 573.6 581.0 561.4 581.6 518.9C582.2 476.4 582.5 346.4 583.1 335.4C583.8 324.4 584.1 422.2 584.7 463.8C585.3 505.4 585.6 550.2 586.2 543.5C586.8 536.8 587.2 428.5 587.8 430.4C588.4 432.3 588.7 562.3 589.3 553.0C589.9 543.6 590.3 369.3 590.9 383.8C591.5 398.2 591.8 628.8 592.4 625.2C593.0 621.5 593.3 400.2 594.0 365.5C594.6 330.7 594.9 420.2 595.5 451.5C596.1 482.8 596.4 546.6 597.1 521.9C597.7 497.2 598.0 322.2 598.6 328.0C599.2 333.8 599.5 505.0 600.2 551.0C600.8 597.1 601.1 545.4 601.7 558.4C602.3 571.3 602.6 635.9 603.2 615.8C603.9 595.6 604.2 502.7 604.8 457.4C605.4 412.2 605.7 398.2 606.3 389.6C607.0 381.0 607.3 392.1 607.9 414.6C608.5 437.2 608.8 510.9 609.4 502.4C610.1 493.8 610.4 351.8 611.0 371.7C611.6 391.7 611.9 568.9 612.5 602.1C613.1 635.2 613.5 572.6 614.1 537.3C614.7 502.1 615.0 469.3 615.6 425.6C616.2 381.9 616.6 318.2 617.2 319.0C617.8 319.7 618.1 411.0 618.7 429.2C619.3 447.4 619.6 419.3 620.3 410.0C620.9 400.7 621.2 363.0 621.8 382.7C622.4 402.4 622.7 519.4 623.4 508.4C624.0 497.4 624.3 350.9 624.9 327.9C625.5 304.9 625.8 353.7 626.5 393.3C627.1 432.9 627.4 502.7 628.0 525.8C628.6 549.0 628.9 539.7 629.5 509.0C630.2 478.3 630.5 369.6 631.1 372.4C631.7 375.2 632.0 482.2 632.6 523.2C633.3 564.2 633.6 612.0 634.2 577.4C634.8 542.9 635.1 373.5 635.7 350.6C636.4 327.7 636.7 439.8 637.3 463.0C637.9 486.2 638.2 475.6 638.8 466.5C639.4 457.4 639.8 442.6 640.4 417.5C641.0 392.3 641.3 305.3 641.9 340.7C642.5 376.2 642.9 557.5 643.5 594.7C644.1 631.9 644.4 522.4 645.0 526.8C645.6 531.3 645.9 622.0 646.6 617.0C647.2 612.1 647.5 531.1 648.1 502.2C648.7 473.4 649.0 501.8 649.7 472.8C650.3 443.8 650.6 368.1 651.2 357.1C651.8 346.2 652.1 399.9 652.8 418.0C653.4 436.1 653.7 430.3 654.3 447.8C654.9 465.2 655.2 505.1 655.8 505.4C656.5 505.6 656.8 440.5 657.4 449.1C658.0 457.7 658.3 566.2 658.9 548.3C659.6 530.4 659.9 393.5 660.5 359.5C661.1 325.4 661.4 377.7 662.0 378.1C662.7 378.5 663.0 319.4 663.6 361.6C664.2 403.7 664.5 577.8 665.1 588.9C665.7 599.9 666.1 456.6 666.7 416.8C667.3 376.9 667.6 378.2 668.2 389.5C668.8 400.8 669.1 482.9 669.8 473.3C670.4 463.8 670.7 368.1 671.3 341.8C671.9 315.4 672.2 331.3 672.9 341.6C673.5 351.9 673.8 388.0 674.4 393.1C675.0 398.3 675.3 361.1 676.0 367.3C676.6 373.6 676.9 428.1 677.5 424.3C678.1 420.5 678.4 314.0 679.1 348.3C679.7 382.5 680.0 583.9 680.6 595.4C681.2 607.0 681.5 443.9 682.1 406.0C682.8 368.1 683.1 400.0 683.7 406.1C684.3 412.2 684.6 408.0 685.2 436.3C685.9 464.7 686.2 511.8 686.8 547.9C687.4 583.9 687.7 638.3 688.3 616.6C689.0 594.9 689.3 489.4 689.9 439.3C690.5 389.3 690.8 344.4 691.4 366.3C692.0 388.1 692.4 508.1 693.0 548.6C693.6 589.0 693.9 565.1 694.5 568.4C695.1 571.6 695.4 556.9 696.1 564.8C696.7 572.7 697.0 637.7 697.6 607.8C698.2 577.9 698.5 473.6 699.2 415.3C699.8 357.0 700.1 324.8 700.7 316.5C701.3 308.1 701.6 332.9 702.3 373.6C702.9 414.3 703.2 513.1 703.8 519.9C704.4 526.7 704.7 388.5 705.3 407.5C706.0 426.6 706.3 624.2 706.9 615.0C707.5 605.8 707.8 378.3 708.4 361.5C709.1 344.8 709.4 476.1 710.0 531.3C710.6 586.6 710.9 657.8 711.5 637.7C712.2 617.6 712.5 439.7 713.1 430.8C713.7 421.8 714.0 569.5 714.6 593.0C715.3 616.4 715.6 542.6 716.2 547.9C716.8 553.2 717.1 630.6 717.7 619.3C718.3 608.0 718.7 524.3 719.3 491.5C719.9 458.7 720.2 479.3 720.8 455.3C721.4 431.4 721.7 337.8 722.4 371.8C723.0 405.9 723.3 627.1 723.9 625.8C724.5 624.4 724.8 369.9 725.5 365.2C726.1 360.5 726.4 562.4 727.0 602.3C727.6 642.2 727.9 598.9 728.6 564.6C729.2 530.3 729.5 438.3 730.1 430.7C730.7 423.0 731.0 506.6 731.6 526.4C732.3 546.1 732.6 544.5 733.2 529.4C733.8 514.3 734.1 443.4 734.7 450.9C735.4 458.3 735.7 581.7 736.3 566.8C736.9 551.9 737.2 375.9 737.8 376.4C738.5 377.0 738.8 572.8 739.4 569.7C740.0 566.7 740.3 400.9 740.9 361.3C741.5 321.6 741.9 351.4 742.5 371.4C743.1 391.4 743.4 409.8 744.0 461.2C744.6 512.7 745.0 644.7 745.6 628.8C746.2 612.8 746.5 381.4 747.1 381.5C747.7 381.7 748.0 611.4 748.7 629.5C749.3 647.6 749.6 498.1 750.2 472.0C750.8 445.8 751.1 469.5 751.8 498.7C752.4 527.9 752.7 631.6 753.3 618.0C753.9 604.4 754.2 474.3 754.9 430.5C755.5 386.8 755.8 396.3 756.4 399.2C757.0 402.2 757.3 424.0 757.9 445.4C758.6 466.9 758.9 501.7 759.5 506.5C760.1 511.3 760.4 482.0 761.0 469.5C761.7 457.0 762.0 425.2 762.6 444.1C763.2 463.1 763.5 582.5 764.1 564.0C764.8 545.6 765.1 402.8 765.7 351.9C766.3 301.0 766.6 305.4 767.2 309.6C767.8 313.8 768.2 370.6 768.8 372.9C769.4 375.2 769.7 289.5 770.3 320.9C770.9 352.3 771.3 531.6 771.9 529.9C772.5 528.3 772.8 295.6 773.4 312.7C774.0 329.8 774.3 581.6 775.0 615.3C775.6 648.9 775.9 484.9 776.5 480.8C777.1 476.7 777.4 593.0 778.1 594.6C778.7 596.2 779.0 525.0 779.6 488.7C780.2 452.4 780.5 429.9 781.2 413.1C781.8 396.3 782.1 389.5 782.7 404.6C783.3 419.7 783.6 464.2 784.2 488.5C784.9 512.8 785.2 508.3 785.8 525.9C786.4 543.4 786.7 580.1 787.3 576.0C788.0 572.0 788.3 511.7 788.9 505.6C789.5 499.5 789.8 531.6 790.4 545.4C791.1 559.2 791.4 604.6 792.0 574.6C792.6 544.6 792.9 416.8 793.5 395.5C794.1 374.2 794.5 448.5 795.1 468.1C795.7 487.8 796.0 472.7 796.6 493.8C797.2 514.9 797.6 591.0 798.2 573.5C798.8 555.9 799.1 406.1 799.7 406.1C800.3 406.2 800.6 544.8 801.3 573.8C801.9 602.8 802.2 575.1 802.8 551.0C803.4 527.0 803.7 482.4 804.4 453.6C805.0 424.8 805.3 434.3 805.9 407.0C806.5 379.7 806.8 320.1 807.5 317.1C808.1 314.0 808.4 390.0 809.0 391.6C809.6 393.2 809.9 336.6 810.5 325.2C811.2 313.8 811.5 319.7 812.1 334.6C812.7 349.6 813.0 386.6 813.6 399.9C814.3 413.2 814.6 357.3 815.2 400.9C815.8 444.5 816.1 584.1 816.7 618.1C817.4 652.1 817.7 567.6 818.3 570.8C818.9 574.1 819.2 678.1 819.8 634.6C820.4 591.0 820.8 400.2 821.4 353.3C822.0 306.4 822.3 384.7 822.9 400.1C823.5 415.5 823.8 400.1 824.5 430.4C825.1 460.8 825.4 533.4 826.0 551.6C826.6 569.8 826.9 514.7 827.6 521.3C828.2 528.0 828.5 603.0 829.1 584.7C829.7 566.4 830.0 484.5 830.7 429.8C831.3 375.0 831.6 289.4 832.2 311.0C832.8 332.6 833.1 475.1 833.8 537.7C834.4 600.4 834.7 615.6 835.3 624.2C835.9 632.9 836.2 601.5 836.8 580.9C837.5 560.4 837.8 569.2 838.4 521.4C839.0 473.5 839.3 371.3 839.9 341.6C840.6 311.8 840.9 343.4 841.5 372.8C842.1 402.2 842.4 441.9 843.0 488.4C843.7 534.8 844.0 582.0 844.6 605.1C845.2 628.1 845.5 607.0 846.1 603.6C846.7 600.1 847.1 632.3 847.7 588.0C848.3 543.6 848.6 402.7 849.2 381.7C849.8 360.7 850.1 497.1 850.8 483.0C851.4 468.9 851.7 340.4 852.3 311.3C852.9 282.1 853.2 324.4 853.9 337.3C854.5 350.3 854.8 347.2 855.4 376.0C856.0 404.8 856.3 483.2 857.0 481.4C857.6 479.6 857.9 344.0 858.5 367.0C859.1 390.1 859.4 549.3 860.0 596.4C860.7 643.6 861.0 631.6 861.6 602.9C862.2 574.1 862.5 478.9 863.1 452.5C863.8 426.1 864.1 447.5 864.7 470.9C865.3 494.3 865.6 552.7 866.2 569.6C866.9 586.6 867.2 543.1 867.8 555.5C868.4 568.0 868.7 675.3 869.3 631.8C870.0 588.4 870.3 383.9 870.9 338.3C871.5 292.7 871.8 406.4 872.4 404.0C873.0 401.6 873.4 344.1 874.0 326.2C874.6 308.3 874.9 280.9 875.5 314.6C876.1 348.2 876.4 478.0 877.1 494.4C877.7 510.8 878.0 393.2 878.6 396.6C879.2 400.1 879.5 517.1 880.2 511.8C880.8 506.6 881.1 400.6 881.7 370.4C882.3 340.1 882.6 315.8 883.3 360.6C883.9 405.5 884.2 539.8 884.8 594.6C885.4 649.4 885.7 639.9 886.3 634.6C887.0 629.3 887.3 605.9 887.9 568.1C888.5 530.2 888.8 456.2 889.4 445.3C890.1 434.4 890.4 475.4 891.0 513.5C891.6 551.7 891.9 665.7 892.5 635.8C893.2 606.0 893.5 415.6 894.1 364.3C894.7 312.9 895.0 354.7 895.6 378.9C896.2 403.1 896.6 436.4 897.2 485.5C897.8 534.6 898.1 652.7 898.7 624.6C899.3 596.4 899.7 377.3 900.3 344.8C900.9 312.4 901.2 408.1 901.8 462.2C902.4 516.3 902.7 601.4 903.4 615.4C904.0 629.3 904.3 568.5 904.9 531.9C905.5 495.3 905.8 469.5 906.5 432.3C907.1 395.1 907.4 336.8 908.0 346.1C908.6 355.3 908.9 462.4 909.6 478.6C910.2 494.9 910.5 408.9 911.1 427.4C911.7 445.8 912.0 544.6 912.6 570.8C913.3 597.0 913.6 604.7 914.2 558.4C914.8 512.1 915.1 348.5 915.7 339.3C916.4 330.1 916.7 459.3 917.3 512.3C917.9 565.4 918.2 618.3 918.8 604.5C919.5 590.7 919.8 444.8 920.4 443.3C921.0 441.9 921.3 571.2 921.9 597.1C922.5 623.0 922.9 594.6 923.5 572.7C924.1 550.9 924.4 513.4 925.0 487.9C925.6 462.4 926.0 457.1 926.6 445.2C927.2 433.3 927.5 436.4 928.1 428.4C928.7 420.4 929.0 392.0 929.7 405.0C930.3 418.1 930.6 451.2 931.2 493.5C931.8 535.8 932.4 591.9 932.8 616.5" stroke="#00ff00"/>
<path d="M159.5 638.9L192.0 638.9C192.5 635.3 193.6 652.2 194.4 621.1C195.2 589.9 195.4 506.1 196.0 483.2C196.6 460.3 196.9 519.9 197.5 506.5C198.2 493.1 198.5 437.1 199.1 416.3C199.7 395.6 200.0 374.2 200.6 402.8C201.2 431.5 201.6 555.3 202.2 559.6C202.8 563.8 203.1 454.0 203.7 424.0C204.3 394.1 204.7 398.2 205.3 410.0C205.9 421.8 206.2 446.5 206.8 482.9C207.4 519.3 207.7 620.9 208.4 592.0C209.0 563.0 209.3 368.5 209.9 338.2C210.5 308.0 210.8 384.8 211.5 440.7C212.1 496.7 212.4 594.3 213.0 618.1C213.6 642.0 213.9 621.1 214.6 559.9C215.2 498.8 215.5 311.8 216.1 312.5C216.7 313.1 217.0 523.9 217.6 563.2C218.3 602.5 218.6 546.1 219.2 509.1C219.8 472.1 220.1 406.8 220.7 378.2C221.4 349.7 221.7 356.2 222.3 366.4C222.9 376.6 223.2 423.8 223.8 429.2C224.5 434.7 224.8 354.2 225.4 393.6C226.0 433.0 226.3 583.3 226.9 626.2C227.5 669.0 227.9 669.9 228.5 607.8C229.1 545.8 229.4 362.9 230.0 316.0C230.6 269.1 231.0 311.3 231.6 373.4C232.2 435.4 232.5 576.4 233.1 626.3C233.7 676.1 234.0 636.1 234.7 622.8C235.3 609.4 235.6 617.7 236.2 559.3C236.8 501.0 237.1 329.7 237.8 331.1C238.4 332.4 238.7 549.1 239.3 566.2C239.9 583.4 240.2 463.7 240.9 416.7C241.5 369.6 241.8 329.0 242.4 331.2C243.0 333.4 243.3 426.9 243.9 427.6C244.6 428.4 244.9 310.0 245.5 334.8C246.1 359.7 246.4 501.2 247.0 551.9C247.7 602.6 248.0 571.9 248.6 588.1C249.2 604.3 249.5 672.8 250.1 632.8C250.8 592.9 251.1 394.1 251.7 388.5C252.3 382.8 252.6 618.8 253.2 604.5C253.8 590.2 254.2 357.1 254.8 317.0C255.4 276.9 255.7 352.1 256.3 404.1C256.9 456.1 257.2 583.5 257.9 577.0C258.5 570.6 258.8 370.4 259.4 371.9C260.0 373.5 260.3 565.5 261.0 585.0C261.6 604.5 261.9 465.7 262.5 469.5C263.1 473.3 263.4 622.0 264.1 603.9C264.7 585.7 265.0 430.4 265.6 378.6C266.2 326.8 266.5 353.2 267.2 344.6C267.8 336.1 268.1 277.1 268.7 335.8C269.3 394.5 269.6 633.8 270.2 638.1C270.9 642.4 271.2 393.9 271.8 357.3C272.4 320.7 272.7 453.0 273.3 455.0C274.0 457.0 274.3 363.7 274.9 367.2C275.5 370.8 275.8 459.4 276.4 472.7C277.1 486.0 277.4 440.0 278.0 433.9C278.6 427.8 278.9 454.1 279.5 442.2C280.1 430.3 280.5 340.3 281.1 374.4C281.7 408.6 282.0 563.9 282.6 613.2C283.2 662.5 283.5 651.9 284.2 620.9C284.8 590.0 285.1 474.1 285.7 458.5C286.3 442.8 286.6 532.8 287.3 542.6C287.9 552.5 288.2 488.8 288.8 507.6C289.4 526.3 289.7 659.4 290.4 636.3C291.0 613.3 291.3 393.6 291.9 392.5C292.5 391.4 292.8 636.5 293.4 630.9C294.1 625.3 294.4 416.6 295.0 364.5C295.6 312.4 295.9 345.9 296.5 370.5C297.2 395.0 297.5 441.8 298.1 487.4C298.7 533.0 299.0 611.2 299.6 598.5C300.3 585.8 300.6 429.5 301.2 423.9C301.8 418.3 302.1 555.7 302.7 570.4C303.4 585.0 303.7 490.6 304.3 497.0C304.9 503.4 305.2 638.6 305.8 602.3C306.4 566.1 306.8 344.7 307.4 315.9C308.0 287.1 308.3 417.0 308.9 458.2C309.5 499.5 309.8 492.4 310.5 522.3C311.1 552.2 311.4 632.7 312.0 607.8C312.6 582.8 312.9 447.4 313.6 397.4C314.2 347.4 314.5 365.7 315.1 357.8C315.7 350.0 316.0 308.8 316.7 358.3C317.3 407.8 317.6 573.5 318.2 605.3C318.8 637.1 319.1 530.6 319.7 517.3C320.4 504.0 320.7 564.9 321.3 538.7C321.9 512.6 322.2 376.5 322.8 386.7C323.5 397.0 323.8 579.7 324.4 590.0C325.0 600.3 325.3 493.3 325.9 438.3C326.6 383.4 326.9 326.0 327.5 315.2C328.1 304.5 328.4 320.3 329.0 384.6C329.6 448.9 330.0 590.7 330.6 636.6C331.2 682.5 331.5 621.1 332.1 614.1C332.7 607.0 333.1 642.1 333.7 601.3C334.3 560.4 334.6 441.9 335.2 409.8C335.8 377.8 336.1 429.4 336.8 440.8C337.4 452.2 337.7 457.4 338.3 466.8C338.9 476.3 339.2 480.7 339.9 488.2C340.5 495.6 340.8 514.4 341.4 504.1C342.0 493.8 342.3 452.7 343.0 436.8C343.6 420.8 343.9 444.6 344.5 424.4C345.1 404.2 345.4 341.4 346.0 335.8C346.7 330.2 347.0 388.6 347.6 396.5C348.2 404.5 348.5 387.3 349.1 375.4C349.8 363.5 350.1 339.6 350.7 337.0C351.3 334.3 351.6 349.0 352.2 362.0C352.9 375.0 353.2 348.5 353.8 401.8C354.4 455.2 354.7 626.4 355.3 628.7C355.9 631.1 356.3 467.9 356.9 413.7C357.5 359.5 357.8 341.2 358.4 357.8C359.0 374.3 359.4 498.3 360.0 496.4C360.6 494.5 360.9 331.8 361.5 348.4C362.1 365.0 362.4 583.7 363.1 579.4C363.7 575.1 364.0 344.4 364.6 327.1C365.2 309.8 365.5 477.1 366.2 492.8C366.8 508.4 367.1 392.7 367.7 405.2C368.3 417.7 368.6 528.5 369.3 555.3C369.9 582.2 370.2 545.8 370.8 539.5C371.4 533.1 371.7 525.2 372.3 523.6C373.0 522.0 373.3 514.8 373.9 531.6C374.5 548.4 374.8 615.4 375.4 607.5C376.1 599.7 376.4 551.0 377.0 492.4C377.6 433.8 377.9 328.4 378.5 314.5C379.2 300.5 379.5 419.3 380.1 422.6C380.7 425.8 381.0 337.7 381.6 330.6C382.2 323.4 382.6 380.4 383.2 386.7C383.8 393.1 384.1 377.4 384.7 362.1C385.3 346.8 385.7 304.5 386.3 310.0C386.9 315.6 387.2 342.3 387.8 389.9C388.4 437.6 388.7 514.9 389.4 548.2C390.0 581.4 390.3 565.4 390.9 556.3C391.5 547.1 391.8 487.3 392.5 502.5C393.1 517.6 393.4 619.9 394.0 631.9C394.6 644.0 394.9 619.8 395.6 562.5C396.2 505.3 396.5 391.4 397.1 345.8C397.7 300.1 398.0 297.4 398.6 334.3C399.3 371.2 399.6 520.2 400.2 530.1C400.8 540.1 401.1 413.6 401.7 384.1C402.4 354.6 402.7 390.5 403.3 382.6C403.9 374.7 404.2 345.9 404.8 344.6C405.5 343.3 405.8 352.4 406.4 376.1C407.0 399.7 407.3 417.3 407.9 462.9C408.5 508.5 408.9 623.6 409.5 604.2C410.1 584.8 410.4 379.7 411.0 365.9C411.6 352.1 411.9 522.0 412.6 535.1C413.2 548.2 413.5 435.0 414.1 431.5C414.7 428.0 415.0 511.5 415.7 517.4C416.3 523.4 416.6 500.8 417.2 461.2C417.8 421.6 418.1 294.6 418.8 319.5C419.4 344.4 419.7 556.8 420.3 585.6C420.9 614.3 421.2 495.6 421.9 463.3C422.5 430.9 422.8 424.4 423.4 423.9C424.0 423.4 424.3 479.8 424.9 460.8C425.6 441.7 425.9 320.0 426.5 328.7C427.1 337.3 427.4 502.5 428.0 504.1C428.7 505.7 429.0 355.3 429.6 336.7C430.2 318.0 430.5 414.3 431.1 410.7C431.8 407.2 432.1 279.2 432.7 318.9C433.3 358.6 433.6 559.3 434.2 609.2C434.8 659.2 435.2 581.7 435.8 568.6C436.4 555.5 436.7 589.7 437.3 543.8C437.9 497.9 438.2 320.9 438.9 339.1C439.5 357.2 439.8 591.6 440.4 634.3C441.0 677.1 441.3 599.3 442.0 552.8C442.6 506.4 442.9 450.4 443.5 402.1C444.1 353.9 444.4 275.9 445.1 311.5C445.7 347.2 446.0 544.1 446.6 580.6C447.2 617.1 447.5 527.8 448.1 494.0C448.8 460.2 449.1 428.4 449.7 411.7C450.3 395.0 450.6 414.4 451.2 410.5C451.9 406.5 452.2 396.3 452.8 392.1C453.4 388.0 453.7 356.9 454.3 389.8C455.0 422.7 455.3 523.9 455.9 556.7C456.5 589.5 456.8 539.2 457.4 553.8C458.1 568.4 458.4 658.4 459.0 629.7C459.6 601.0 459.9 422.3 460.5 410.3C461.1 398.3 461.5 541.1 462.1 569.7C462.7 598.2 463.0 603.0 463.6 553.0C464.2 503.1 464.5 345.3 465.2 319.9C465.8 294.6 466.1 401.4 466.7 426.1C467.3 450.8 467.6 444.2 468.3 443.4C468.9 442.5 469.2 422.3 469.8 421.9C470.4 421.4 470.7 443.7 471.4 441.1C472.0 438.6 472.3 389.6 472.9 409.0C473.5 428.5 473.8 496.6 474.4 538.4C475.1 580.1 475.4 602.0 476.0 617.7C476.6 633.4 476.9 613.5 477.5 616.7C478.2 620.0 478.5 653.5 479.1 634.0C479.7 614.6 480.0 527.7 480.6 519.3C481.3 510.9 481.6 575.4 482.2 591.8C482.8 608.3 483.1 624.8 483.7 601.5C484.3 578.3 484.7 532.2 485.3 475.6C485.9 418.9 486.2 331.0 486.8 318.2C487.4 305.4 487.8 365.4 488.4 411.5C489.0 457.5 489.3 553.8 489.9 548.4C490.5 543.0 490.8 378.1 491.5 384.4C492.1 390.7 492.4 535.8 493.0 580.0C493.6 624.3 493.9 614.0 494.6 605.8C495.2 597.5 495.5 559.0 496.1 538.6C496.7 518.2 497.0 529.2 497.7 503.6C498.3 478.1 498.6 413.2 499.2 410.8C499.8 408.4 500.1 494.3 500.7 491.7C501.4 489.1 501.7 374.8 502.3 398.0C502.9 421.1 503.2 621.0 503.8 607.5C504.5 594.0 504.8 346.9 505.4 330.5C506.0 314.2 506.3 519.0 506.9 525.6C507.6 532.3 507.9 343.0 508.5 363.6C509.1 384.2 509.4 628.5 510.0 628.7C510.6 628.9 511.0 377.7 511.6 364.8C512.2 351.8 512.5 565.8 513.1 564.0C513.7 562.3 514.1 394.2 514.7 356.1C515.3 318.0 515.6 361.1 516.2 373.3C516.8 385.5 517.1 382.3 517.8 417.0C518.4 451.8 518.7 503.3 519.3 547.0C519.9 590.7 520.2 629.8 520.9 635.6C521.5 641.4 521.8 635.2 522.4 576.0C523.0 516.8 523.3 337.5 524.0 339.6C524.6 341.7 524.9 570.3 525.5 586.6C526.1 602.8 526.4 449.2 527.0 420.8C527.7 392.5 528.0 444.9 528.6 444.7C529.2 444.6 529.5 393.3 530.1 420.2C530.8 447.1 531.1 544.9 531.7 579.1C532.3 613.4 532.6 585.8 533.2 591.3C533.9 596.9 534.2 662.2 534.8 606.7C535.4 551.2 535.7 332.8 536.3 313.9C536.9 295.0 537.3 490.3 537.9 512.2C538.5 534.0 538.8 435.5 539.4 423.2C540.0 410.8 540.4 422.1 541.0 450.5C541.6 478.8 541.9 531.6 542.5 565.0C543.1 598.4 543.4 603.6 544.1 617.4C544.7 631.2 545.0 686.1 545.6 634.0C546.2 581.9 546.5 364.5 547.2 356.9C547.8 349.3 548.1 603.2 548.7 595.8C549.3 588.5 549.6 335.8 550.3 320.4C550.9 304.9 551.2 502.7 551.8 518.6C552.4 534.5 552.7 385.0 553.3 399.9C554.0 414.8 554.3 597.4 554.9 593.1C555.5 588.8 555.8 385.8 556.4 378.3C557.1 370.8 557.4 527.7 558.0 555.6C558.6 583.5 558.9 535.7 559.5 517.7C560.2 499.8 560.5 449.0 561.1 465.9C561.7 482.7 562.0 583.8 562.6 602.0C563.2 620.2 563.6 602.0 564.2 556.7C564.8 511.5 565.1 378.1 565.7 375.6C566.3 373.2 566.6 517.0 567.3 544.5C567.9 572.0 568.2 544.6 568.8 512.9C569.4 481.2 569.7 375.6 570.4 385.9C571.0 396.3 571.3 527.0 571.9 564.8C572.5 602.5 572.8 574.4 573.5 574.7C574.1 575.1 574.4 579.0 575.0 566.4C575.6 553.8 575.9 521.5 576.6 511.8C577.2 502.1 577.5 535.0 578.1 518.0C578.7 501.0 579.0 433.8 579.6 426.7C580.3 419.7 580.6 497.9 581.2 482.8C581.8 467.7 582.1 323.4 582.7 351.2C583.4 379.1 583.7 608.5 584.3 622.1C584.9 635.8 585.2 471.4 585.8 419.4C586.5 367.4 586.8 333.9 587.4 362.2C588.0 390.6 588.3 507.8 588.9 561.2C589.5 614.6 589.9 642.6 590.5 629.1C591.1 615.7 591.4 499.6 592.0 493.9C592.6 488.2 592.9 602.0 593.6 600.5C594.2 599.1 594.5 526.1 595.1 486.7C595.7 447.3 596.0 379.3 596.7 403.5C597.3 427.8 597.6 568.6 598.2 607.9C598.8 647.1 599.1 625.4 599.8 599.9C600.4 574.4 600.7 484.0 601.3 480.3C601.9 476.6 602.2 564.9 602.8 581.4C603.5 597.8 603.8 580.2 604.4 562.5C605.0 544.9 605.3 485.8 605.9 493.3C606.6 500.7 606.9 575.1 607.5 599.7C608.1 624.4 608.4 632.5 609.0 616.4C609.7 600.3 610.0 546.0 610.6 519.4C611.2 492.9 611.5 521.8 612.1 483.7C612.8 445.6 613.1 334.8 613.7 329.1C614.3 323.5 614.6 398.2 615.2 455.4C615.8 512.6 616.2 593.2 616.8 615.2C617.4 637.2 617.7 609.8 618.3 565.3C618.9 520.8 619.2 415.3 619.9 392.7C620.5 370.2 620.8 461.0 621.4 452.7C622.0 444.4 622.3 377.5 623.0 351.1C623.6 324.6 623.9 319.7 624.5 320.6C625.1 321.4 625.4 298.7 626.1 355.1C626.7 411.5 627.0 608.1 627.6 602.5C628.2 596.8 628.5 354.2 629.1 326.8C629.8 299.3 630.1 418.7 630.7 465.3C631.3 511.8 631.6 536.1 632.2 559.6C632.9 583.0 633.2 623.8 633.8 582.4C634.4 541.1 634.7 355.7 635.3 352.9C636.0 350.1 636.3 516.9 636.9 568.6C637.5 620.3 637.8 614.9 638.4 611.4C639.0 607.9 639.4 606.7 640.0 551.1C640.6 495.5 640.9 346.2 641.5 333.2C642.1 320.3 642.5 473.7 643.1 486.4C643.7 499.2 644.0 371.4 644.6 397.0C645.2 422.6 645.5 595.8 646.2 614.2C646.8 632.6 647.1 505.1 647.7 489.0C648.3 472.9 648.6 517.4 649.3 533.7C649.9 550.1 650.2 593.8 650.8 571.0C651.4 548.1 651.7 429.9 652.4 419.6C653.0 409.3 653.3 483.5 653.9 519.4C654.5 555.3 654.8 640.5 655.4 599.3C656.1 558.1 656.4 337.3 657.0 313.4C657.6 289.4 657.9 426.4 658.5 479.6C659.2 532.8 659.5 548.2 660.1 579.3C660.7 610.5 661.0 666.5 661.6 635.3C662.3 604.0 662.6 456.2 663.2 422.9C663.8 389.6 664.1 427.1 664.7 468.7C665.3 510.2 665.7 627.8 666.3 630.8C666.9 633.7 667.2 530.7 667.8 483.3C668.4 436.0 668.8 398.4 669.4 394.0C670.0 389.6 670.3 427.7 670.9 461.2C671.5 494.7 671.8 558.9 672.5 561.4C673.1 564.0 673.4 498.4 674.0 473.8C674.6 449.3 674.9 448.9 675.6 438.8C676.2 428.7 676.5 393.1 677.1 423.5C677.7 453.9 678.0 601.0 678.7 590.9C679.3 580.8 679.6 426.0 680.2 373.1C680.8 320.1 681.1 322.0 681.7 326.1C682.4 330.3 682.7 388.2 683.3 394.0C683.9 399.8 684.2 330.7 684.8 355.3C685.5 380.0 685.8 520.2 686.4 517.2C687.0 514.2 687.3 328.0 687.9 340.3C688.6 352.6 688.9 534.1 689.5 578.8C690.1 623.5 690.4 591.4 691.0 563.8C691.6 536.3 692.0 485.7 692.6 441.1C693.2 396.5 693.5 306.6 694.1 340.7C694.7 374.8 695.1 566.5 695.7 611.7C696.3 657.0 696.6 564.1 697.2 567.1C697.8 570.1 698.1 641.7 698.8 627.0C699.4 612.3 699.7 500.6 700.3 493.7C700.9 486.8 701.2 576.0 701.9 592.4C702.5 608.8 702.8 615.8 703.4 575.5C704.0 535.3 704.3 417.1 705.0 391.2C705.6 365.3 705.9 458.6 706.5 446.0C707.1 433.3 707.4 316.2 708.0 328.2C708.7 340.2 709.0 488.7 709.6 505.9C710.2 523.1 710.5 388.5 711.1 414.3C711.8 440.0 712.1 652.5 712.7 634.7C713.3 616.9 713.6 339.8 714.2 325.2C714.9 310.6 715.2 530.6 715.8 561.8C716.4 592.9 716.7 499.5 717.3 481.1C717.9 462.7 718.3 500.8 718.9 469.6C719.5 438.5 719.8 323.9 720.4 325.2C721.0 326.5 721.3 479.0 722.0 476.1C722.6 473.2 722.9 319.4 723.5 310.8C724.1 302.3 724.4 382.1 725.1 433.4C725.7 484.7 726.0 581.4 726.6 567.3C727.2 553.2 727.5 362.1 728.2 363.1C728.8 364.0 729.1 583.0 729.7 572.1C730.3 561.1 730.6 325.1 731.3 308.3C731.9 291.4 732.2 436.7 732.8 487.9C733.4 539.0 733.7 597.4 734.3 564.0C735.0 530.6 735.3 327.3 735.9 321.0C736.5 314.7 736.8 495.8 737.4 532.4C738.1 569.1 738.4 505.7 739.0 504.3C739.6 502.8 739.9 542.7 740.5 525.4C741.2 508.1 741.5 396.5 742.1 417.7C742.7 438.9 743.0 611.8 743.6 631.3C744.2 650.8 744.6 524.4 745.2 515.2C745.8 506.0 746.1 615.3 746.7 585.3C747.3 555.2 747.6 354.3 748.3 365.0C748.9 375.7 749.2 624.2 749.8 638.8C750.4 653.4 750.7 455.0 751.4 437.9C752.0 420.9 752.3 543.4 752.9 553.6C753.5 563.7 753.8 508.8 754.5 488.7C755.1 468.6 755.4 470.1 756.0 453.0C756.6 436.0 756.9 375.4 757.5 403.5C758.2 431.5 758.5 562.1 759.1 593.3C759.7 624.5 760.0 558.2 760.6 559.3C761.3 560.5 761.6 646.6 762.2 599.0C762.8 551.4 763.1 323.2 763.7 321.3C764.4 319.4 764.7 535.1 765.3 589.5C765.9 644.0 766.2 618.2 766.8 593.5C767.5 568.8 767.8 495.5 768.4 466.2C769.0 436.8 769.3 470.7 769.9 446.6C770.5 422.5 770.9 311.0 771.5 345.7C772.1 380.4 772.4 576.9 773.0 620.0C773.6 663.2 773.9 568.7 774.6 561.4C775.2 554.1 775.5 606.7 776.1 583.5C776.7 560.2 777.0 464.0 777.7 445.2C778.3 426.3 778.6 477.6 779.2 489.2C779.8 500.9 780.1 532.5 780.8 503.6C781.4 474.8 781.7 361.8 782.3 345.1C782.9 328.3 783.2 418.2 783.8 420.0C784.5 421.9 784.8 373.9 785.4 354.4C786.0 334.8 786.3 283.3 786.9 322.4C787.6 361.5 787.9 548.9 788.5 549.9C789.1 550.9 789.4 336.5 790.0 327.3C790.7 318.1 791.0 445.1 791.6 504.0C792.2 562.9 792.5 655.3 793.1 621.8C793.7 588.3 794.1 339.8 794.7 336.3C795.3 332.9 795.6 545.1 796.2 604.4C796.8 663.8 797.2 645.3 797.8 633.1C798.4 620.8 798.7 561.0 799.3 543.1C799.9 525.1 800.2 588.1 800.9 543.3C801.5 498.5 801.8 357.6 802.4 319.1C803.0 280.6 803.3 314.8 804.0 351.0C804.6 387.2 804.9 477.4 805.5 499.9C806.1 522.5 806.4 492.1 807.1 463.8C807.7 435.4 808.0 376.5 808.6 358.1C809.2 339.8 809.5 359.0 810.1 372.0C810.8 384.9 811.1 403.3 811.7 422.8C812.3 442.2 812.6 433.8 813.2 469.3C813.9 504.8 814.2 582.5 814.8 600.3C815.4 618.1 815.7 594.1 816.3 558.2C817.0 522.4 817.3 443.9 817.9 421.2C818.5 398.5 818.8 454.4 819.4 445.0C820.0 435.5 820.4 394.6 821.0 373.9C821.6 353.3 821.9 352.3 822.5 341.6C823.1 331.0 823.5 273.9 824.1 320.6C824.7 367.3 825.0 516.5 825.6 575.1C826.2 633.8 826.5 660.3 827.2 613.7C827.8 567.1 828.1 374.7 828.7 342.0C829.3 309.3 829.6 402.9 830.3 450.2C830.9 497.6 831.2 586.9 831.8 578.8C832.4 570.8 832.7 414.9 833.4 410.0C834.0 405.1 834.3 524.2 834.9 554.3C835.5 584.4 835.8 567.9 836.4 560.6C837.1 553.3 837.4 536.7 838.0 517.7C838.6 498.7 838.9 486.2 839.5 465.6C840.2 445.0 840.5 385.0 841.1 414.8C841.7 444.6 842.0 618.8 842.6 614.6C843.3 610.3 843.6 430.1 844.2 393.7C844.8 357.3 845.1 414.6 845.7 432.4C846.3 450.2 846.7 486.0 847.3 482.9C847.9 479.7 848.2 438.3 848.8 416.6C849.4 394.9 849.8 330.6 850.4 374.4C851.0 418.2 851.3 614.2 851.9 635.7C852.5 657.1 852.8 525.9 853.5 481.7C854.1 437.4 854.4 430.1 855.0 414.7C855.6 399.2 855.9 402.3 856.6 404.3C857.2 406.4 857.5 389.7 858.1 424.7C858.7 459.7 859.0 599.8 859.7 579.2C860.3 558.7 860.6 361.9 861.2 321.9C861.8 281.8 862.1 331.0 862.7 379.0C863.4 427.0 863.7 538.3 864.3 561.8C864.9 585.3 865.2 544.4 865.8 496.4C866.5 448.5 866.8 307.3 867.4 322.1C868.0 336.8 868.3 534.1 868.9 570.3C869.6 606.6 869.9 553.5 870.5 503.6C871.1 453.7 871.4 353.3 872.0 320.8C872.6 288.4 873.0 293.0 873.6 341.2C874.2 389.4 874.5 551.1 875.1 562.0C875.7 572.9 876.0 404.1 876.7 395.7C877.3 387.3 877.6 515.1 878.2 519.9C878.8 524.7 879.1 446.4 879.8 419.5C880.4 392.5 880.7 349.8 881.3 385.2C881.9 420.7 882.2 560.7 882.9 596.7C883.5 632.7 883.8 571.0 884.4 565.3C885.0 559.5 885.3 570.6 886.0 567.8C886.6 564.9 886.9 539.0 887.5 550.9C888.1 562.7 888.4 618.5 889.0 627.1C889.7 635.7 890.0 618.4 890.6 593.9C891.2 569.4 891.5 523.4 892.1 504.5C892.8 485.7 893.1 478.0 893.7 499.7C894.3 521.4 894.6 623.8 895.2 613.1C895.9 602.4 896.2 503.5 896.8 446.3C897.4 389.1 897.7 326.8 898.3 327.2C898.9 327.6 899.3 409.2 899.9 448.0C900.5 486.9 900.8 529.7 901.4 521.2C902.0 512.8 902.3 411.3 903.0 405.9C903.6 400.5 903.9 459.3 904.5 494.3C905.1 529.3 905.4 583.8 906.1 580.8C906.7 577.9 907.0 469.1 907.6 479.6C908.2 490.0 908.5 645.9 909.2 633.0C909.8 620.2 910.1 424.8 910.7 415.3C911.3 405.8 911.6 565.4 912.2 585.6C912.9 605.9 913.2 569.6 913.8 516.6C914.4 463.6 914.7 346.8 915.3 320.6C916.0 294.3 916.3 376.9 916.9 385.3C917.5 393.7 917.8 354.3 918.4 362.5C919.1 370.8 919.4 413.2 920.0 426.5C920.6 439.8 920.9 433.1 921.5 429.0C922.2 424.8 922.5 427.7 923.1 405.7C923.7 383.8 924.0 285.6 924.6 319.3C925.2 352.9 925.6 560.7 926.2 573.9C926.8 587.2 927.1 392.4 927.7 385.5C928.3 378.6 928.6 505.6 929.3 539.4C929.9 573.1 930.2 588.7 930.8 554.3C931.4 519.8 932.1 404.6 932.4 367.2" stroke="#800080"/>
<path d="M159.5 638.9L192.0 638.9C192.4 582.7 193.4 415.7 194.2 357.9C194.9 300.0 195.1 332.2 195.7 349.4C196.3 366.7 196.6 399.4 197.2 444.1C197.9 488.9 198.2 535.3 198.8 573.3C199.4 611.2 199.7 656.2 200.3 633.9C201.0 611.6 201.3 509.0 201.9 462.0C202.5 415.0 202.8 381.5 203.4 398.9C204.1 416.2 204.4 505.4 205.0 548.8C205.6 592.1 205.9 598.0 206.5 615.7C207.2 633.4 207.5 644.1 208.1 637.3C208.7 630.5 209.0 627.3 209.6 581.6C210.2 535.9 210.6 397.5 211.2 408.7C211.8 419.9 212.1 606.7 212.7 637.6C213.3 668.4 213.6 580.1 214.3 562.8C214.9 545.5 215.2 583.0 215.8 551.2C216.4 519.4 216.7 451.4 217.4 403.7C218.0 355.9 218.3 266.6 218.9 312.4C219.5 358.1 219.8 574.7 220.5 632.5C221.1 690.2 221.4 661.6 222.0 601.1C222.6 540.5 222.9 386.4 223.5 329.8C224.2 273.2 224.5 266.1 225.1 318.1C225.7 370.1 226.0 547.7 226.6 589.7C227.3 631.7 227.6 552.7 228.2 527.9C228.8 503.2 229.1 465.1 229.7 466.1C230.4 467.1 230.7 526.0 231.3 533.0C231.9 539.9 232.2 511.3 232.8 500.8C233.4 490.3 233.8 470.0 234.4 480.5C235.0 491.0 235.3 525.3 235.9 553.4C236.5 581.4 236.9 609.1 237.5 620.7C238.1 632.2 238.4 618.2 239.0 611.1C239.6 604.0 239.9 585.6 240.6 585.1C241.2 584.6 241.5 639.2 242.1 608.6C242.7 578.1 243.0 472.5 243.7 432.5C244.3 392.4 244.6 384.6 245.2 408.5C245.8 432.4 246.1 558.2 246.8 551.9C247.4 545.6 247.7 407.8 248.3 377.0C248.9 346.2 249.2 368.1 249.8 397.8C250.5 427.6 250.8 510.2 251.4 525.9C252.0 541.5 252.3 466.1 252.9 476.2C253.6 486.4 253.9 605.5 254.5 576.6C255.1 547.6 255.4 356.2 256.0 331.6C256.7 307.0 257.0 395.5 257.6 453.5C258.2 511.6 258.5 595.0 259.1 621.9C259.7 648.8 260.1 630.4 260.7 588.0C261.3 545.5 261.6 425.1 262.2 409.8C262.8 394.5 263.2 513.1 263.8 511.5C264.4 509.8 264.7 391.4 265.3 401.7C265.9 412.0 266.2 568.3 266.9 563.0C267.5 557.7 267.8 413.1 268.4 375.2C269.0 337.4 269.3 327.1 270.0 373.6C270.6 420.1 270.9 593.4 271.5 607.7C272.1 622.0 272.4 451.4 273.1 445.0C273.7 438.6 274.0 583.6 274.6 575.6C275.2 567.6 275.5 445.3 276.1 404.8C276.8 364.3 277.1 378.5 277.7 373.0C278.3 367.4 278.6 339.3 279.2 377.2C279.9 415.1 280.2 516.2 280.8 562.4C281.4 608.5 281.7 636.6 282.3 608.0C283.0 579.4 283.3 450.6 283.9 419.4C284.5 388.2 284.8 417.3 285.4 452.0C286.0 486.7 286.4 568.5 287.0 593.1C287.6 617.8 287.9 604.5 288.5 575.1C289.1 545.7 289.5 440.6 290.1 446.2C290.7 451.8 291.0 606.6 291.6 603.2C292.2 599.8 292.5 438.0 293.2 429.2C293.8 420.4 294.1 534.3 294.7 559.2C295.3 584.0 295.6 565.4 296.3 553.4C296.9 541.3 297.2 517.0 297.8 498.8C298.4 480.6 298.7 482.4 299.4 462.5C300.0 442.6 300.3 366.1 300.9 399.3C301.5 432.5 301.8 628.6 302.4 628.6C303.1 628.6 303.4 411.9 304.0 399.3C304.6 386.7 304.9 537.1 305.5 565.8C306.2 594.5 306.5 570.4 307.1 542.7C307.7 515.0 308.0 453.8 308.6 427.3C309.3 400.8 309.6 408.6 310.2 410.3C310.8 411.9 311.1 449.5 311.7 435.6C312.3 421.6 312.7 313.5 313.3 340.6C313.9 367.7 314.2 532.1 314.8 571.2C315.4 610.3 315.7 566.2 316.4 536.0C317.0 505.7 317.3 416.4 317.9 419.8C318.5 423.1 318.8 519.2 319.5 552.6C320.1 586.0 320.4 584.5 321.0 586.8C321.6 589.1 321.9 604.6 322.6 564.0C323.2 523.4 323.5 423.5 324.1 383.8C324.7 344.0 325.0 361.7 325.7 365.4C326.3 369.0 326.6 410.7 327.2 402.0C327.8 393.3 328.1 327.0 328.7 321.8C329.4 316.6 329.7 333.2 330.3 376.2C330.9 419.1 331.2 504.8 331.8 536.4C332.5 568.1 332.8 561.8 333.4 534.5C334.0 507.3 334.3 383.2 334.9 400.3C335.6 417.5 335.9 613.0 336.5 620.5C337.1 627.9 337.4 439.6 338.0 437.4C338.6 435.2 339.0 572.3 339.6 609.4C340.2 646.4 340.5 650.7 341.1 622.6C341.7 594.5 342.0 475.7 342.7 469.0C343.3 462.2 343.6 616.5 344.2 588.8C344.8 561.2 345.1 378.8 345.8 330.7C346.4 282.7 346.7 317.6 347.3 348.7C347.9 379.8 348.2 441.2 348.9 486.1C349.5 531.1 349.8 550.8 350.4 573.5C351.0 596.1 351.3 619.8 351.9 599.3C352.6 578.9 352.9 497.8 353.5 471.3C354.1 444.7 354.4 456.9 355.0 466.5C355.7 476.0 356.0 531.8 356.6 518.9C357.2 506.0 357.5 413.0 358.1 402.0C358.8 391.0 359.1 467.7 359.7 463.8C360.3 459.9 360.6 354.4 361.2 382.4C361.9 410.4 362.2 557.1 362.8 603.7C363.4 650.4 363.7 634.3 364.3 615.7C364.9 597.1 365.3 538.2 365.9 510.9C366.5 483.5 366.8 470.1 367.4 478.9C368.0 487.8 368.3 567.6 369.0 555.3C369.6 543.1 369.9 415.7 370.5 417.8C371.1 419.8 371.4 542.3 372.1 565.5C372.7 588.6 373.0 550.5 373.6 533.6C374.2 516.7 374.5 507.2 375.2 481.1C375.8 455.1 376.1 422.7 376.7 403.3C377.3 383.9 377.6 361.6 378.2 384.1C378.9 406.6 379.2 494.5 379.8 515.9C380.4 537.3 380.7 527.8 381.3 491.1C382.0 454.3 382.3 364.3 382.9 332.1C383.5 299.9 383.8 309.6 384.4 330.0C385.1 350.4 385.4 379.4 386.0 434.2C386.6 489.1 386.9 593.4 387.5 604.1C388.1 614.9 388.5 523.3 389.1 488.1C389.7 453.0 390.0 416.5 390.6 428.3C391.2 440.0 391.6 507.1 392.2 546.7C392.8 586.4 393.1 673.0 393.7 626.5C394.3 580.0 394.6 372.1 395.3 314.4C395.9 256.7 396.2 281.7 396.8 338.0C397.4 394.4 397.7 566.9 398.4 596.2C399.0 625.6 399.3 517.2 399.9 484.8C400.5 452.4 400.8 423.1 401.5 434.0C402.1 445.0 402.4 503.2 403.0 539.7C403.6 576.1 403.9 646.0 404.5 616.2C405.2 586.4 405.5 437.0 406.1 390.6C406.7 344.1 407.0 363.2 407.6 384.0C408.3 404.7 408.6 448.9 409.2 494.2C409.8 539.5 410.1 607.6 410.7 610.5C411.4 613.4 411.7 509.2 412.3 508.6C412.9 508.0 413.2 645.4 413.8 607.8C414.4 570.1 414.8 317.4 415.4 320.2C416.0 323.0 416.3 577.2 416.9 621.9C417.5 666.6 417.9 591.0 418.5 543.6C419.1 496.2 419.4 374.8 420.0 384.9C420.6 395.0 420.9 550.5 421.6 594.2C422.2 637.9 422.5 599.4 423.1 603.6C423.7 607.9 424.0 619.3 424.7 615.5C425.3 611.7 425.6 615.1 426.2 584.6C426.8 554.1 427.1 507.2 427.8 463.0C428.4 418.7 428.7 339.3 429.3 363.3C429.9 387.3 430.2 539.3 430.8 582.9C431.5 626.5 431.8 620.8 432.4 581.4C433.0 542.0 433.3 402.5 433.9 385.9C434.6 369.2 434.9 469.8 435.5 498.0C436.1 526.3 436.4 507.1 437.0 527.1C437.7 547.1 438.0 591.8 438.6 598.1C439.2 604.4 439.5 614.7 440.1 558.6C440.7 502.4 441.1 309.2 441.7 317.5C442.3 325.8 442.6 553.1 443.2 600.2C443.8 647.3 444.2 594.3 444.8 553.0C445.4 511.8 445.7 435.7 446.3 393.9C446.9 352.1 447.2 354.8 447.9 343.9C448.5 333.1 448.8 312.1 449.4 339.8C450.0 367.5 450.3 486.0 451.0 482.5C451.6 479.1 451.9 331.2 452.5 322.6C453.1 313.9 453.4 394.9 454.1 439.1C454.7 483.3 455.0 534.2 455.6 543.4C456.2 552.6 456.5 513.3 457.1 485.0C457.8 456.7 458.1 419.8 458.7 402.1C459.3 384.3 459.6 357.3 460.2 396.1C460.9 434.9 461.2 560.2 461.8 596.0C462.4 631.7 462.7 629.6 463.3 574.8C464.0 520.0 464.3 316.2 464.9 322.0C465.5 327.7 465.8 593.9 466.4 603.5C467.0 613.1 467.4 385.2 468.0 369.9C468.6 354.5 468.9 489.4 469.5 526.8C470.1 564.2 470.4 551.3 471.1 556.9C471.7 562.4 472.0 569.1 472.6 554.5C473.2 539.8 473.5 532.3 474.2 483.7C474.8 435.0 475.1 290.1 475.7 311.3C476.3 332.5 476.6 580.7 477.3 589.7C477.9 598.7 478.2 367.7 478.8 356.3C479.4 344.8 479.7 487.5 480.4 532.6C481.0 577.7 481.3 609.7 481.9 581.7C482.5 553.7 482.8 403.7 483.4 392.6C484.1 381.4 484.4 489.0 485.0 525.9C485.6 562.7 485.9 581.9 486.5 576.8C487.2 571.8 487.5 542.4 488.1 500.5C488.7 458.5 489.0 396.5 489.6 367.1C490.3 337.7 490.6 337.1 491.2 353.4C491.8 369.8 492.1 392.3 492.7 448.7C493.3 505.1 493.7 647.9 494.3 635.4C494.9 622.9 495.2 425.8 495.8 386.4C496.4 347.0 496.7 447.3 497.4 438.3C498.0 429.3 498.3 364.3 498.9 341.4C499.5 318.6 499.8 286.2 500.5 324.0C501.1 361.9 501.4 523.8 502.0 530.7C502.6 537.5 502.9 390.8 503.6 358.2C504.2 325.7 504.5 329.5 505.1 368.0C505.7 406.6 506.0 520.9 506.6 550.9C507.3 580.9 507.6 525.1 508.2 517.9C508.8 510.7 509.1 514.1 509.7 515.0C510.4 515.8 510.7 522.4 511.3 522.2C511.9 521.9 512.2 497.7 512.8 513.8C513.5 529.8 513.8 592.4 514.4 602.4C515.0 612.4 515.3 616.6 515.9 563.7C516.6 510.9 516.9 350.2 517.5 338.1C518.1 325.9 518.4 485.0 519.0 503.1C519.6 521.2 520.0 460.1 520.6 428.6C521.2 397.1 521.5 353.3 522.1 345.4C522.7 337.5 523.0 346.4 523.7 389.0C524.3 431.5 524.6 568.9 525.2 558.0C525.8 547.2 526.1 371.8 526.8 334.7C527.4 297.7 527.7 377.6 528.3 372.9C528.9 368.2 529.2 306.2 529.9 311.2C530.5 316.3 530.8 382.5 531.4 398.1C532.0 413.7 532.3 394.8 532.9 389.2C533.6 383.6 533.9 336.8 534.5 370.0C535.1 403.2 535.4 544.7 536.0 555.1C536.7 565.5 537.0 430.4 537.6 421.9C538.2 413.5 538.5 525.1 539.1 513.0C539.8 500.8 540.1 344.8 540.7 361.2C541.3 377.5 541.6 574.8 542.2 594.7C542.8 614.6 543.2 474.0 543.8 460.6C544.4 447.1 544.7 546.2 545.3 527.6C545.9 509.0 546.3 368.1 546.9 367.5C547.5 366.9 547.8 526.2 548.4 524.7C549.0 523.1 549.3 393.0 550.0 359.8C550.6 326.5 550.9 360.8 551.5 358.5C552.1 356.1 552.4 301.3 553.1 348.2C553.7 395.1 554.0 596.8 554.6 592.9C555.2 588.9 555.5 368.6 556.2 328.6C556.8 288.5 557.1 375.4 557.7 392.7C558.3 410.0 558.6 408.9 559.2 415.0C559.9 421.1 560.2 381.5 560.8 423.1C561.4 464.7 561.7 637.4 562.3 623.0C563.0 608.6 563.3 384.1 563.9 351.1C564.5 318.0 564.8 430.3 565.4 457.7C566.1 485.1 566.4 474.4 567.0 488.2C567.6 501.9 567.9 548.3 568.5 526.6C569.1 505.0 569.5 409.2 570.1 379.9C570.7 350.6 571.0 385.9 571.6 380.2C572.2 374.4 572.6 313.6 573.2 351.2C573.8 388.8 574.1 533.0 574.7 568.0C575.3 603.1 575.6 528.6 576.3 526.3C576.9 523.9 577.2 540.5 577.8 556.4C578.4 572.3 578.7 610.8 579.4 605.7C580.0 600.5 580.3 525.7 580.9 530.7C581.5 535.6 581.8 661.3 582.5 630.3C583.1 599.2 583.4 388.7 584.0 375.4C584.6 362.1 584.9 515.7 585.5 563.8C586.2 611.8 586.5 604.9 587.1 615.5C587.7 626.0 588.0 660.8 588.6 616.5C589.3 572.1 589.6 402.4 590.2 393.8C590.8 385.1 591.1 554.8 591.7 573.2C592.4 591.7 592.7 499.5 593.3 486.0C593.9 472.6 594.2 528.5 594.8 506.0C595.4 483.5 595.8 410.0 596.4 373.5C597.0 337.0 597.3 290.8 597.9 323.3C598.5 355.9 598.9 515.1 599.5 536.4C600.1 557.7 600.4 468.4 601.0 429.7C601.6 391.1 601.9 332.3 602.6 343.0C603.2 353.7 603.5 483.6 604.1 483.3C604.7 482.9 605.0 358.7 605.7 341.3C606.3 323.9 606.6 357.3 607.2 396.2C607.8 435.1 608.1 545.1 608.8 535.8C609.4 526.6 609.7 367.1 610.3 349.8C610.9 332.5 611.2 398.5 611.8 449.3C612.5 500.1 612.8 604.8 613.4 603.8C614.0 602.9 614.3 492.4 614.9 444.6C615.6 396.7 615.9 360.1 616.5 364.6C617.1 369.2 617.4 444.5 618.0 467.4C618.7 490.2 619.0 472.0 619.6 478.8C620.2 485.5 620.5 527.4 621.1 501.1C621.7 474.9 622.1 364.2 622.7 347.7C623.3 331.2 623.6 374.3 624.2 418.8C624.8 463.2 625.1 550.0 625.8 570.1C626.4 590.1 626.7 529.3 627.3 519.0C627.9 508.7 628.2 558.2 628.9 518.7C629.5 479.3 629.8 343.8 630.4 321.8C631.0 299.8 631.3 353.6 632.0 408.7C632.6 463.9 632.9 612.0 633.5 597.6C634.1 583.1 634.4 330.5 635.1 336.5C635.7 342.4 636.0 605.9 636.6 627.3C637.2 648.7 637.5 469.7 638.1 443.4C638.8 417.2 639.1 504.2 639.7 495.9C640.3 487.5 640.6 401.4 641.2 401.6C641.9 401.8 642.2 455.5 642.8 496.9C643.4 538.2 643.7 614.6 644.3 608.3C645.0 602.1 645.3 513.8 645.9 465.7C646.5 417.5 646.8 385.1 647.4 367.5C648.0 350.0 648.4 347.3 649.0 378.0C649.6 408.6 649.9 483.4 650.5 520.9C651.1 558.4 651.4 591.0 652.1 565.3C652.7 539.7 653.0 430.9 653.6 392.5C654.2 354.2 654.5 338.9 655.2 373.7C655.8 408.5 656.1 571.8 656.7 566.4C657.3 561.0 657.6 398.0 658.3 346.8C658.9 295.6 659.2 280.9 659.8 310.6C660.4 340.4 660.7 455.0 661.3 495.5C662.0 536.0 662.3 531.3 662.9 513.0C663.5 494.7 663.8 440.4 664.4 404.1C665.1 367.8 665.4 297.8 666.0 331.4C666.6 365.0 666.9 530.6 667.5 572.1C668.2 613.7 668.5 547.5 669.1 539.1C669.7 530.6 670.0 558.5 670.6 530.0C671.3 501.6 671.6 387.3 672.2 396.7C672.8 406.1 673.1 564.8 673.7 577.1C674.3 589.3 674.7 478.7 675.3 458.0C675.9 437.3 676.2 481.4 676.8 473.4C677.4 465.4 677.7 394.2 678.4 417.8C679.0 441.4 679.3 610.5 679.9 591.5C680.5 572.4 680.8 379.1 681.5 322.5C682.1 265.8 682.4 282.0 683.0 308.2C683.6 334.3 683.9 439.8 684.6 453.3C685.2 466.8 685.5 350.9 686.1 375.9C686.7 400.9 687.0 585.8 687.6 578.2C688.3 570.6 688.6 362.2 689.2 337.8C689.8 313.5 690.1 446.5 690.7 456.5C691.4 466.5 691.7 408.6 692.3 387.7C692.9 366.7 693.2 325.3 693.8 351.6C694.5 378.0 694.8 522.9 695.4 519.2C696.0 515.6 696.3 323.1 696.9 333.3C697.5 343.5 697.9 510.7 698.5 570.3C699.1 629.8 699.4 650.6 700.0 631.1C700.6 611.6 701.0 530.6 701.6 472.7C702.2 414.8 702.5 368.0 703.1 341.7C703.7 315.3 704.0 344.8 704.7 341.1C705.3 337.3 705.6 297.3 706.2 323.0C706.8 348.8 707.1 468.5 707.8 469.9C708.4 471.4 708.7 333.7 709.3 330.4C709.9 327.2 710.2 401.5 710.9 453.7C711.5 505.9 711.8 596.0 712.4 591.3C713.0 586.6 713.3 473.8 713.9 430.2C714.6 386.5 714.9 359.5 715.5 373.2C716.1 386.9 716.4 485.4 717.0 498.7C717.7 512.0 718.0 428.8 718.6 439.7C719.2 450.6 719.5 531.6 720.1 553.2C720.8 574.7 721.1 558.2 721.7 547.6C722.3 536.9 722.6 515.6 723.2 499.9C723.8 484.2 724.2 472.3 724.8 469.1C725.4 466.0 725.7 456.1 726.3 484.0C726.9 511.8 727.3 577.7 727.9 608.3C728.5 638.9 728.8 653.4 729.4 637.0C730.0 620.6 730.3 573.4 731.0 526.3C731.6 479.3 731.9 428.8 732.5 401.8C733.1 374.8 733.4 359.6 734.1 391.4C734.7 423.1 735.0 527.9 735.6 560.5C736.2 593.1 736.5 572.8 737.2 554.3C737.8 535.8 738.1 462.7 738.7 468.0C739.3 473.3 739.6 586.5 740.2 580.8C740.9 575.1 741.2 487.7 741.8 439.5C742.4 391.3 742.7 313.3 743.3 339.8C744.0 366.4 744.3 551.0 744.9 572.1C745.5 593.1 745.8 479.5 746.4 445.2C747.1 410.9 747.4 411.3 748.0 400.5C748.6 389.7 748.9 390.5 749.5 391.1C750.1 391.7 750.5 400.8 751.1 403.4C751.7 405.9 752.0 374.8 752.6 403.9C753.2 432.9 753.6 557.2 754.2 548.7C754.8 540.3 755.1 404.8 755.7 361.6C756.3 318.4 756.6 280.9 757.3 332.9C757.9 384.9 758.2 622.7 758.8 621.5C759.4 620.2 759.7 352.4 760.4 326.6C761.0 300.8 761.3 435.7 761.9 492.5C762.5 549.2 762.8 585.6 763.5 610.3C764.1 635.0 764.4 662.8 765.0 615.8C765.6 568.8 765.9 415.5 766.5 375.3C767.2 335.1 767.5 371.4 768.1 414.8C768.7 458.1 769.0 577.5 769.6 591.9C770.3 606.3 770.6 519.6 771.2 486.7C771.8 453.9 772.1 463.2 772.7 427.6C773.4 392.1 773.7 288.9 774.3 308.9C774.9 329.0 775.2 512.4 775.8 527.7C776.4 543.0 776.8 379.3 777.4 385.3C778.0 391.4 778.3 520.2 778.9 557.8C779.5 595.3 779.8 567.5 780.5 573.1C781.1 578.6 781.4 599.5 782.0 585.5C782.6 571.6 782.9 533.4 783.6 503.2C784.2 473.0 784.5 427.3 785.1 434.4C785.7 441.5 786.0 508.4 786.7 538.6C787.3 568.8 787.6 579.7 788.2 585.3C788.8 590.9 789.1 561.5 789.8 566.6C790.4 571.7 790.7 609.1 791.3 610.8C791.9 612.4 792.2 590.3 792.8 575.0C793.5 559.7 793.8 555.0 794.4 534.4C795.0 513.8 795.3 463.2 795.9 472.0C796.6 480.7 796.9 576.5 797.5 578.1C798.1 579.8 798.4 497.2 799.0 480.2C799.7 463.3 800.0 526.0 800.6 493.4C801.2 460.8 801.5 320.1 802.1 317.1C802.7 314.0 803.1 476.2 803.7 478.0C804.3 479.9 804.6 325.4 805.2 326.4C805.8 327.4 806.1 433.5 806.8 482.9C807.4 532.3 807.7 581.4 808.3 573.4C808.9 565.4 809.2 439.6 809.9 443.1C810.5 446.6 810.8 563.1 811.4 591.0C812.0 619.0 812.3 578.2 813.0 582.9C813.6 587.6 813.9 649.8 814.5 614.6C815.1 579.4 815.4 466.0 816.0 406.9C816.7 347.8 817.0 299.4 817.6 319.1C818.2 338.8 818.5 464.9 819.1 505.4C819.8 546.0 820.1 523.2 820.7 521.8C821.3 520.3 821.6 498.1 822.2 498.2C822.9 498.4 823.2 540.0 823.8 522.4C824.4 504.9 824.7 413.1 825.3 410.4C826.0 407.8 826.3 473.6 826.9 509.2C827.5 544.9 827.8 619.7 828.4 588.5C829.0 557.2 829.4 380.8 830.0 353.0C830.6 325.2 830.9 392.8 831.5 449.5C832.1 506.2 832.4 655.1 833.1 636.7C833.7 618.4 834.0 405.7 834.6 357.9C835.2 310.2 835.5 365.2 836.2 397.9C836.8 430.7 837.1 515.1 837.7 521.6C838.3 528.1 838.6 467.9 839.3 430.5C839.9 393.1 840.2 319.4 840.8 334.5C841.4 349.6 841.7 473.8 842.3 506.0C843.0 538.3 843.3 489.0 843.9 495.8C844.5 502.6 844.8 548.3 845.4 540.2C846.1 532.2 846.4 479.7 847.0 455.6C847.6 431.5 847.9 431.6 848.5 419.7C849.2 407.7 849.5 414.7 850.1 395.8C850.7 376.8 851.0 285.9 851.6 324.9C852.2 363.9 852.6 552.2 853.2 590.8C853.8 629.4 854.1 564.6 854.7 517.9C855.3 471.2 855.7 385.4 856.3 357.2C856.9 329.1 857.2 360.0 857.8 377.3C858.4 394.6 858.7 436.2 859.4 443.7C860.0 451.3 860.3 398.3 860.9 414.9C861.5 431.4 861.8 544.1 862.5 526.4C863.1 508.7 863.4 340.2 864.0 326.4C864.6 312.5 864.9 421.3 865.6 457.2C866.2 493.0 866.5 481.5 867.1 505.7C867.7 530.0 868.0 559.5 868.6 578.5C869.3 597.5 869.6 648.0 870.2 600.7C870.8 553.4 871.1 387.3 871.7 342.0C872.4 296.7 872.7 316.5 873.3 374.1C873.9 431.7 874.2 598.4 874.8 630.0C875.5 661.6 875.8 561.9 876.4 532.0C877.0 502.0 877.3 491.6 877.9 480.2C878.5 468.8 878.9 467.2 879.5 474.9C880.1 482.6 880.4 545.1 881.0 518.7C881.6 492.2 882.0 341.9 882.6 342.8C883.2 343.7 883.5 499.1 884.1 523.2C884.7 547.2 885.0 501.3 885.7 462.9C886.3 424.6 886.6 338.6 887.2 331.5C887.8 324.4 888.1 397.5 888.8 427.5C889.4 457.4 889.7 460.9 890.3 481.1C890.9 501.4 891.2 522.9 891.9 528.9C892.5 534.8 892.8 529.1 893.4 510.8C894.0 492.5 894.3 463.8 894.9 437.4C895.6 411.0 895.9 355.9 896.5 378.9C897.1 402.0 897.4 525.2 898.0 552.7C898.7 580.2 899.0 524.7 899.6 516.3C900.2 507.9 900.5 510.1 901.1 510.6C901.8 511.1 902.1 553.6 902.7 518.9C903.3 484.1 903.6 348.6 904.2 336.9C904.8 325.3 905.2 418.5 905.8 460.6C906.4 502.8 906.7 534.0 907.3 547.6C907.9 561.3 908.3 565.0 908.9 528.9C909.5 492.8 909.8 355.8 910.4 367.2C911.0 378.6 911.3 577.2 912.0 585.9C912.6 594.6 912.9 401.5 913.5 410.7C914.1 419.8 914.4 598.8 915.1 631.7C915.7 664.5 916.0 577.5 916.6 575.0C917.2 572.5 917.5 659.7 918.2 619.2C918.8 578.7 919.1 378.2 919.7 372.4C920.3 366.7 920.6 552.1 921.2 590.3C921.9 628.5 922.2 557.6 922.8 563.5C923.4 569.4 923.7 622.2 924.3 619.8C925.0 617.4 925.3 596.3 925.9 551.6C926.5 506.9 926.8 426.5 927.4 396.3C928.1 366.1 928.4 412.4 929.0 400.7C929.6 389.0 929.9 352.8 930.5 337.8C931.1 322.8 931.8 328.1 932.1 325.7" stroke="#fa8072"/>
</g>
<path d="M159 242.5H934M933.5 242V707" stroke="#90ee90" stroke-width="1"/>
<path d="M159 706H934M160 242V707" stroke="#90ee90" stroke-width="2"/>
</svg>
<div class="ylab" style="left:96px;top:235px">12.000</div>
<div class="ylab" style="left:96px;top:328px">9.200</div>
<div class="ylab" style="left:96px;top:420px">6.400</div>
<div class="ylab" style="left:96px;top:513px">3.600</div>
<div class="ylab" style="left:96px;top:605px">0.800</div>
<div class="ylab" style="left:96px;top:698px">-2.000</div>
<div class="xlab" style="left:129px;top:712px">0.00</div>
<div class="xlab" style="left:284px;top:712px">10.00</div>
<div class="xlab" style="left:439px;top:712px">20.00</div>
<div class="xlab" style="left:594px;top:712px">30.00</div>
<div class="xlab" style="left:748px;top:712px">40.00</div>
<div class="xlab" style="left:903px;top:712px">50.00</div>
<div class="xlab" style="left:517px;top:736px;width:60px;letter-spacing:0">时间(Sec)</div>
<div class="xlab" style="left:51px;top:467px;width:60px;letter-spacing:0;transform:rotate(-90deg)">位移(mm)</div>

<!-- legend -->
<div class="a" style="left:983px;top:233px;width:118px;height:157px;background:#fff"></div>
<div class="lg" style="top:242px;background:#ff0000"></div><div class="lt" style="top:237px">历史数据_0</div>
<div class="lg" style="top:257px;background:#0000ff"></div><div class="lt" style="top:252px">历史数据_1</div>
<div class="lg" style="top:271px;background:#ffff00"></div><div class="lt" style="top:266px">历史数据_2</div>
<div class="lg" style="top:286px;background:#ff00ff"></div><div class="lt" style="top:281px">历史数据_3</div>
<div class="lg" style="top:301px;background:#008000"></div><div class="lt" style="top:296px">历史数据_4</div>
<div class="lg" style="top:315px;background:#a52a2a"></div><div class="lt" style="top:310px">历史数据_5</div>
<div class="lg" style="top:330px;background:#808080"></div><div class="lt" style="top:325px">历史数据_6</div>
<div class="lg" style="top:345px;background:#00ff00"></div><div class="lt" style="top:340px">历史数据_7</div>
<div class="lg" style="top:360px;background:#800080"></div><div class="lt" style="top:355px">历史数据_8</div>
<div class="lg" style="top:374px;background:#fa8072"></div><div class="lt" style="top:369px">历史数据_9</div>

<!-- right panel -->
<div class="gb" style="left:1146px;top:160px;width:257px;height:617px"></div>
<div class="a" style="left:1224px;top:179px;font-size:20.5px">查询日期<span style="padding-left:3px">:</span></div>
<div class="a" style="left:1179px;top:214px;width:190px;height:31px;background:#fff;border:1px solid #a0a0a0"></div>
<div class="a" style="left:1181px;top:219px;font-size:21px;word-spacing:5px;color:#000">2018年 8月 8日</div>
<svg class="a" style="left:1340px;top:222px" width="24" height="16">
<rect x="1.5" y="1.5" width="11" height="12" rx="1.5" fill="#e8ecf4" stroke="#8890a0"/>
<path d="M4 5H11M4 8H11M4 11H11M6 3V13M9 3V13" stroke="#b0b8c8" stroke-width="0.8"/>
<path d="M15 6H22L18.5 10Z" fill="#3a5080"/>
</svg>
<div class="a" style="left:1224px;top:258px;font-size:20.5px">查询时间<span style="padding-left:3px">:</span></div>
<div class="a" style="left:1218px;top:293px;width:113px;height:31px;background:#fff;border:1px solid #a0a0a0"></div>
<div class="a" style="left:1220px;top:298px;font-size:21px;color:#000">00<span style="padding-left:2px">:</span><span style="padding-left:14px">00</span></div>
<div class="a" style="left:1312px;top:296px;width:15px;height:12px;background:#f0f0f0;border:1px solid #c8c8c8"></div>
<div class="a" style="left:1312px;top:308px;width:15px;height:12px;background:#f0f0f0;border:1px solid #c8c8c8"></div>
<svg class="a" style="left:1312px;top:296px" width="15" height="24"><path d="M4.5 7.5H10.5L7.5 4Z M4.5 16.5H10.5L7.5 20Z" fill="#000"/></svg>

<div class="a" style="left:1181px;top:351px;width:188px;height:46px;border:1px solid #3a8ee6;box-shadow:inset 0 0 0 2px #fff"></div>
<div class="a" style="left:1181px;top:364px;width:188px;text-align:center;font-size:22px;font-weight:bold">条件查询显示</div>

<div class="a mono" style="left:1217px;top:416px;font-size:18px;transform-origin:0 0;transform:scaleX(0.87)">X Max Scale</div>
<div class="vbox" style="left:1224px;top:444px;width:92px;height:31px;line-height:24px;letter-spacing:1px;padding-left:1px">50</div>
<div class="a mono" style="left:1157px;top:490px;font-size:18px;transform-origin:0 0;transform:scaleX(0.87)">Y Min Scale</div>
<div class="a mono" style="left:1288px;top:490px;font-size:18px;transform-origin:0 0;transform:scaleX(0.87)">Y Max Scale</div>
<div class="vbox" style="left:1162px;top:516px;width:92px;height:31px;line-height:24px;letter-spacing:1px;padding-left:1px"><span style="display:inline-block;transform:scaleX(1.4)">-</span>2</div>
<div class="vbox" style="left:1293px;top:517px;width:92px;height:31px;line-height:24px;letter-spacing:1px;padding-left:1px">12</div>
<div class="a" style="left:1158px;top:561px;font-size:20px">前10条记录</div>
<div class="a" style="left:1286px;top:561px;font-size:20px">后10条记录</div>

<svg class="a" style="left:1180px;top:595px" width="200" height="70">
<rect x="7" y="5.5" width="9.3" height="59.5" fill="#1496dc"/>
<path d="M24.2 35L54.1 5.5V65Z" fill="#1496dc"/>
<path d="M135.9 5.5L165.7 35.5L135.9 65Z" fill="#1496dc"/>
<rect x="174.2" y="5.5" width="8.8" height="59.5" fill="#1496dc"/>
</svg>

<div class="a" style="left:1182px;top:701px;width:189px;height:47px;border:3px solid #dcdcdc"></div>
<div class="a" style="left:1182px;top:715px;width:189px;text-align:center;font-size:21px;font-weight:bold">数据导出</div>

</body></html>
